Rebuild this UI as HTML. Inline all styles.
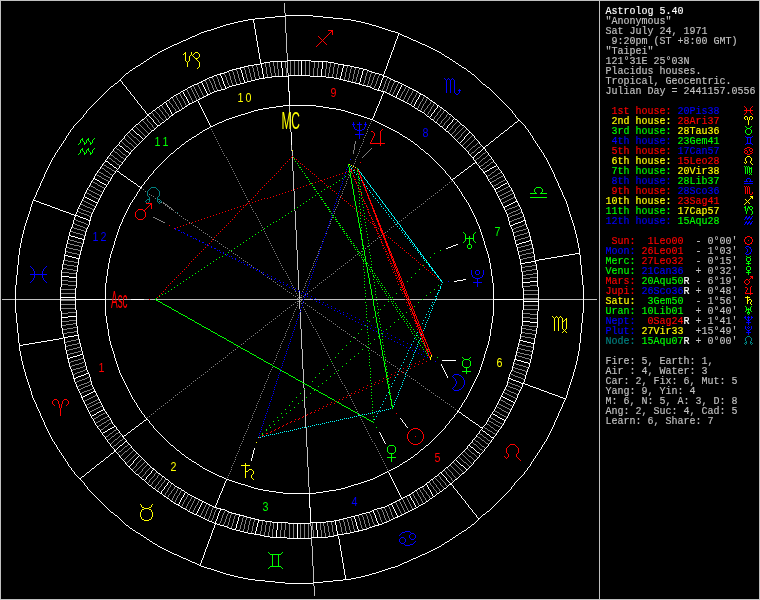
<!DOCTYPE html>
<html lang="en"><head><meta charset="utf-8"><title>Astrolog 5.40 chart</title>
<style>
html,body{margin:0;padding:0;background:#000;}
svg{display:block;will-change:transform;}
.s{font-family:"Liberation Mono",monospace;font-size:10px;white-space:pre;stroke-width:0.15px;}
.h{font-family:"Liberation Sans",sans-serif;font-size:12.6px;text-anchor:middle;letter-spacing:2.4px;font-kerning:none;}
.g{font-family:"Liberation Sans",sans-serif;}
</style></head><body>
<svg width="760" height="600" viewBox="0 0 760 600">
<rect width="760" height="600" fill="#000"/>
<g shape-rendering="crispEdges">
<path fill="#ffffff" d="M285 15h28v1h-28zM275 16h10v1h-10zM313 16h10v1h-10zM265 17h10v1h-10zM323 17h10v1h-10zM255 18h10v1h-10zM333 18h10v1h-10zM248 19h7v1h-7zM343 19h8v1h-8zM243 20h5v1h-5zM351 20h5v1h-5zM238 21h5v1h-5zM356 21h5v1h-5zM234 22h4v1h-4zM361 22h4v1h-4zM230 23h4v1h-4zM365 23h4v1h-4zM226 24h4v1h-4zM369 24h3v1h-3zM223 25h3v1h-3zM372 25h4v1h-4zM220 26h3v1h-3zM376 26h3v1h-3zM217 27h3v1h-3zM379 27h3v1h-3zM214 28h3v1h-3zM382 28h3v1h-3zM211 29h3v1h-3zM385 29h3v1h-3zM207 30h4v1h-4zM388 30h3v1h-3zM204 31h3v1h-3zM391 31h4v1h-4zM201 32h3v1h-3zM395 32h3v1h-3zM199 33h2v1h-2zM398 33h2v1h-2zM197 34h2v1h-2zM400 34h2v1h-2zM195 35h2v1h-2zM402 35h2v1h-2zM192 36h3v1h-3zM404 36h3v1h-3zM190 37h2v1h-2zM407 37h2v1h-2zM188 38h2v1h-2zM409 38h2v1h-2zM186 39h2v1h-2zM411 39h2v1h-2zM183 40h3v1h-3zM413 40h3v1h-3zM181 41h2v1h-2zM416 41h2v1h-2zM179 42h2v1h-2zM418 42h2v1h-2zM177 43h2v1h-2zM420 43h2v1h-2zM174 44h3v1h-3zM422 44h3v1h-3zM172 45h2v1h-2zM425 45h2v1h-2zM170 46h2v1h-2zM427 46h2v1h-2zM168 47h2v1h-2zM429 47h2v1h-2zM166 48h2v1h-2zM431 48h2v1h-2zM164 49h2v1h-2zM433 49h2v1h-2zM162 50h2v1h-2zM435 50h2v1h-2zM160 51h2v1h-2zM437 51h2v1h-2zM158 52h2v1h-2zM439 52h2v1h-2zM155 54h2v1h-2zM442 54h2v1h-2zM153 55h2v1h-2zM445 56h2v1h-2zM150 57h2v1h-2zM447 57h2v1h-2zM147 59h2v1h-2zM450 59h2v1h-2zM287 60h24v1h-24zM144 61h2v1h-2zM270 61h17v1h-17zM311 61h17v1h-17zM453 61h2v1h-2zM264 62h6v1h-6zM328 62h6v1h-6zM141 63h2v1h-2zM260 63h4v1h-4zM334 63h4v1h-4zM456 63h2v1h-2zM254 64h6v1h-6zM338 64h6v1h-6zM138 65h2v1h-2zM248 65h6v1h-6zM343 65h7v1h-7zM459 65h2v1h-2zM136 66h2v1h-2zM244 66h4v1h-4zM350 66h4v1h-4zM240 67h4v1h-4zM354 67h5v1h-5zM462 67h2v1h-2zM133 68h2v1h-2zM236 68h5v1h-5zM359 68h4v1h-4zM464 68h2v1h-2zM232 69h4v1h-4zM363 69h4v1h-4zM130 70h2v1h-2zM229 70h3v1h-3zM367 70h2v1h-2zM227 71h2v1h-2zM369 71h3v1h-3zM468 71h2v1h-2zM224 72h3v1h-3zM372 72h3v1h-3zM126 73h2v1h-2zM220 73h4v1h-4zM375 73h4v1h-4zM217 74h4v1h-4zM379 74h3v1h-3zM472 74h2v1h-2zM214 75h3v1h-3zM288 75h22v1h-22zM382 75h2v1h-2zM212 76h2v1h-2zM272 76h17v1h-17zM310 76h16v1h-16zM383 76h4v1h-4zM209 77h3v1h-3zM265 77h7v1h-7zM326 77h8v1h-8zM387 77h2v1h-2zM207 78h2v1h-2zM259 78h6v1h-6zM334 78h5v1h-5zM389 78h2v1h-2zM205 79h2v1h-2zM255 79h4v1h-4zM339 79h4v1h-4zM391 79h2v1h-2zM119 80h2v1h-2zM203 80h2v1h-2zM251 80h4v1h-4zM343 80h4v1h-4zM393 80h2v1h-2zM201 81h2v1h-2zM247 81h4v1h-4zM347 81h4v1h-4zM395 81h3v1h-3zM199 82h3v1h-3zM244 82h3v1h-3zM351 82h4v1h-4zM398 82h2v1h-2zM115 83h2v1h-2zM197 83h2v1h-2zM240 83h4v1h-4zM355 83h5v1h-5zM400 83h2v1h-2zM194 84h3v1h-3zM236 84h4v1h-4zM359 84h3v1h-3zM402 84h2v1h-2zM483 84h2v1h-2zM192 85h2v1h-2zM232 85h4v1h-4zM362 85h4v1h-4zM404 85h2v1h-2zM111 86h2v1h-2zM190 86h2v1h-2zM229 86h3v1h-3zM366 86h4v1h-4zM406 86h2v1h-2zM188 87h2v1h-2zM227 87h2v1h-2zM370 87h2v1h-2zM408 87h2v1h-2zM487 87h2v1h-2zM225 88h2v1h-2zM372 88h2v1h-2zM410 88h2v1h-2zM185 89h2v1h-2zM221 89h4v1h-4zM374 89h3v1h-3zM412 89h2v1h-2zM183 90h2v1h-2zM217 90h4v1h-4zM377 90h4v1h-4zM414 90h2v1h-2zM181 91h2v1h-2zM214 91h3v1h-3zM381 91h4v1h-4zM416 91h2v1h-2zM212 92h2v1h-2zM385 92h2v1h-2zM178 93h2v1h-2zM210 93h2v1h-2zM387 93h2v1h-2zM419 93h2v1h-2zM176 94h2v1h-2zM207 94h3v1h-3zM389 94h2v1h-2zM420 94h3v1h-3zM174 95h2v1h-2zM206 95h2v1h-2zM391 95h2v1h-2zM423 95h2v1h-2zM204 96h2v1h-2zM393 96h2v1h-2zM171 97h2v1h-2zM202 97h2v1h-2zM395 97h2v1h-2zM426 97h2v1h-2zM200 98h2v1h-2zM397 98h2v1h-2zM198 99h2v1h-2zM399 99h2v1h-2zM167 100h2v1h-2zM196 100h2v1h-2zM401 100h2v1h-2zM430 100h2v1h-2zM194 101h2v1h-2zM403 101h2v1h-2zM164 102h2v1h-2zM192 102h2v1h-2zM405 102h2v1h-2zM433 102h2v1h-2zM189 103h3v1h-3zM407 103h2v1h-2zM188 104h2v1h-2zM409 104h2v1h-2zM160 105h2v1h-2zM283 105h33v1h-33zM437 105h2v1h-2zM185 106h2v1h-2zM276 106h7v1h-7zM316 106h7v1h-7zM412 106h2v1h-2zM157 107h2v1h-2zM269 107h7v1h-7zM323 107h6v1h-6zM440 107h2v1h-2zM182 108h2v1h-2zM263 108h6v1h-6zM329 108h7v1h-7zM415 108h2v1h-2zM258 109h5v1h-5zM336 109h5v1h-5zM153 110h2v1h-2zM179 110h2v1h-2zM254 110h4v1h-4zM341 110h4v1h-4zM418 110h2v1h-2zM444 110h2v1h-2zM177 111h2v1h-2zM251 111h3v1h-3zM345 111h3v1h-3zM420 111h2v1h-2zM175 112h2v1h-2zM248 112h3v1h-3zM348 112h3v1h-3zM422 112h2v1h-2zM149 113h2v1h-2zM245 113h3v1h-3zM351 113h3v1h-3zM147 114h2v1h-2zM172 114h2v1h-2zM241 114h4v1h-4zM354 114h4v1h-4zM449 114h2v1h-2zM147 115h2v1h-2zM171 115h2v1h-2zM238 115h3v1h-3zM358 115h3v1h-3zM235 116h3v1h-3zM361 116h3v1h-3zM427 116h2v1h-2zM232 117h3v1h-3zM364 117h3v1h-3zM229 118h3v1h-3zM367 118h3v1h-3zM142 119h2v1h-2zM166 119h2v1h-2zM226 119h3v1h-3zM370 119h3v1h-3zM431 119h2v1h-2zM455 119h2v1h-2zM224 120h2v1h-2zM373 120h2v1h-2zM518 120h2v1h-2zM222 121h2v1h-2zM375 121h2v1h-2zM162 122h2v1h-2zM219 122h3v1h-3zM377 122h2v1h-2zM435 122h2v1h-2zM515 122h2v1h-2zM217 123h2v1h-2zM379 123h2v1h-2zM136 124h2v1h-2zM215 124h2v1h-2zM381 124h2v1h-2zM157 125h3v1h-3zM213 125h2v1h-2zM383 125h2v1h-2zM462 125h2v1h-2zM210 126h3v1h-3zM385 126h2v1h-2zM440 126h2v1h-2zM510 126h2v1h-2zM387 127h2v1h-2zM207 128h2v1h-2zM389 128h2v1h-2zM131 129h2v1h-2zM205 129h2v1h-2zM391 129h2v1h-2zM444 129h2v1h-2zM152 130h2v1h-2zM203 130h2v1h-2zM393 130h2v1h-2zM505 130h2v1h-2zM395 131h2v1h-2zM446 131h2v1h-2zM200 132h2v1h-2zM397 132h2v1h-2zM469 132h2v1h-2zM501 133h2v1h-2zM137 134h2v1h-2zM197 134h2v1h-2zM400 134h2v1h-2zM194 136h2v1h-2zM403 136h2v1h-2zM192 137h2v1h-2zM405 137h2v1h-2zM496 137h2v1h-2zM189 139h2v1h-2zM408 139h2v1h-2zM186 141h2v1h-2zM411 141h2v1h-2zM491 141h2v1h-2zM182 144h2v1h-2zM415 144h2v1h-2zM486 145h2v1h-2zM120 146h2v1h-2zM483 147h2v1h-2zM177 148h2v1h-2zM483 148h2v1h-2zM421 149h2v1h-2zM126 151h2v1h-2zM478 152h2v1h-2zM129 153h2v1h-2zM171 153h2v1h-2zM426 153h2v1h-2zM472 157h2v1h-2zM105 161h3v1h-3zM475 162h2v1h-2zM473 163h2v1h-2zM110 164h2v1h-2zM469 166h2v1h-2zM494 166h2v1h-2zM114 167h2v1h-2zM492 167h2v1h-2zM490 168h2v1h-2zM465 169h2v1h-2zM487 170h2v1h-2zM117 171h2v1h-2zM485 171h2v1h-2zM461 172h2v1h-2zM483 172h2v1h-2zM121 174h2v1h-2zM457 175h2v1h-2zM124 176h2v1h-2zM93 178h2v1h-2zM453 178h2v1h-2zM95 179h2v1h-2zM128 179h2v1h-2zM451 179h2v1h-2zM97 180h2v1h-2zM131 181h2v1h-2zM100 182h2v1h-2zM102 183h2v1h-2zM134 183h2v1h-2zM505 183h2v1h-2zM104 184h2v1h-2zM503 184h2v1h-2zM501 185h2v1h-2zM138 186h2v1h-2zM140 187h2v1h-2zM498 187h2v1h-2zM496 188h2v1h-2zM494 189h2v1h-2zM85 197h2v1h-2zM87 198h2v1h-2zM89 199h2v1h-2zM33 200h3v1h-3zM91 200h2v1h-2zM36 201h3v1h-3zM93 201h2v1h-2zM515 201h3v1h-3zM39 202h2v1h-2zM95 202h3v1h-3zM513 202h2v1h-2zM41 203h3v1h-3zM511 203h2v1h-2zM44 204h3v1h-3zM509 204h2v1h-2zM47 205h3v1h-3zM507 205h2v1h-2zM50 206h2v1h-2zM505 206h2v1h-2zM52 207h3v1h-3zM503 207h2v1h-2zM55 208h3v1h-3zM58 209h2v1h-2zM60 210h3v1h-3zM63 211h3v1h-3zM66 212h3v1h-3zM69 213h2v1h-2zM71 214h3v1h-3zM74 215h4v1h-4zM78 216h2v1h-2zM80 217h3v1h-3zM83 218h3v1h-3zM86 219h2v1h-2zM88 220h3v1h-3zM523 220h3v1h-3zM521 221h2v1h-2zM518 222h3v1h-3zM515 223h3v1h-3zM513 224h2v1h-2zM510 225h3v1h-3zM69 235h2v1h-2zM71 236h4v1h-4zM75 237h3v1h-3zM78 238h4v1h-4zM82 239h3v1h-3zM529 240h3v1h-3zM526 241h3v1h-3zM522 242h4v1h-4zM519 243h3v1h-3zM456 244h2v1h-2zM516 244h3v1h-3zM453 245h3v1h-3zM451 246h2v1h-2zM448 247h3v1h-3zM446 248h2v1h-2zM575 253h5v1h-5zM569 254h6v1h-6zM64 255h4v1h-4zM563 255h6v1h-6zM68 256h4v1h-4zM557 256h6v1h-6zM72 257h4v1h-4zM551 257h6v1h-6zM76 258h4v1h-4zM545 258h6v1h-6zM539 259h6v1h-6zM535 260h4v1h-4zM531 261h5v1h-5zM525 262h6v1h-6zM520 263h5v1h-5zM61 276h8v1h-8zM69 277h8v1h-8zM463 279h3v1h-3zM457 280h6v1h-6zM454 281h3v1h-3zM530 281h8v1h-8zM522 282h8v1h-8zM60 297h16v1h-16zM75 299h31v1h-31zM131 299h13v1h-13zM493 299h31v1h-31zM523 301h16v1h-16zM68 316h9v1h-9zM61 317h7v1h-7zM522 321h8v1h-8zM530 322h8v1h-8zM74 335h5v1h-5zM68 336h6v1h-6zM63 337h5v1h-5zM59 338h4v1h-4zM53 339h6v1h-6zM47 340h6v1h-6zM519 340h4v1h-4zM41 341h6v1h-6zM523 341h4v1h-4zM35 342h6v1h-6zM527 342h4v1h-4zM29 343h6v1h-6zM531 343h4v1h-4zM23 344h6v1h-6zM19 345h4v1h-4zM80 354h3v1h-3zM77 355h3v1h-3zM73 356h4v1h-4zM70 357h3v1h-3zM67 358h3v1h-3zM514 359h3v1h-3zM442 360h14v1h-14zM517 360h4v1h-4zM521 361h3v1h-3zM524 362h4v1h-4zM528 363h2v1h-2zM86 373h3v1h-3zM84 374h2v1h-2zM81 375h3v1h-3zM78 376h3v1h-3zM76 377h2v1h-2zM73 378h3v1h-3zM508 378h3v1h-3zM511 379h2v1h-2zM513 380h3v1h-3zM516 381h3v1h-3zM519 382h2v1h-2zM521 383h4v1h-4zM525 384h3v1h-3zM528 385h2v1h-2zM530 386h3v1h-3zM533 387h3v1h-3zM536 388h3v1h-3zM539 389h2v1h-2zM541 390h3v1h-3zM93 391h3v1h-3zM544 391h3v1h-3zM91 392h2v1h-2zM547 392h2v1h-2zM89 393h2v1h-2zM549 393h3v1h-3zM87 394h2v1h-2zM552 394h3v1h-3zM85 395h2v1h-2zM555 395h3v1h-3zM83 396h2v1h-2zM501 396h2v1h-2zM558 396h2v1h-2zM81 397h2v1h-2zM503 397h2v1h-2zM560 397h3v1h-3zM505 398h2v1h-2zM563 398h3v1h-3zM507 399h2v1h-2zM509 400h2v1h-2zM511 401h2v1h-2zM513 402h2v1h-2zM103 409h2v1h-2zM101 410h2v1h-2zM99 411h2v1h-2zM457 411h2v1h-2zM97 412h2v1h-2zM459 412h2v1h-2zM94 414h2v1h-2zM493 414h2v1h-2zM92 415h2v1h-2zM463 415h2v1h-2zM495 415h2v1h-2zM466 417h2v1h-2zM498 417h2v1h-2zM500 418h2v1h-2zM146 419h2v1h-2zM502 419h2v1h-2zM144 420h2v1h-2zM470 420h2v1h-2zM504 420h2v1h-2zM473 422h2v1h-2zM140 423h2v1h-2zM476 424h2v1h-2zM114 426h2v1h-2zM136 426h2v1h-2zM112 427h2v1h-2zM480 427h3v1h-3zM110 428h2v1h-2zM108 429h2v1h-2zM132 429h2v1h-2zM105 431h2v1h-2zM483 431h2v1h-2zM103 432h2v1h-2zM128 432h2v1h-2zM487 434h2v1h-2zM124 435h2v1h-2zM122 436h2v1h-2zM491 437h3v1h-3zM125 441h2v1h-2zM120 445h2v1h-2zM171 445h2v1h-2zM426 445h2v1h-2zM468 445h2v1h-2zM471 447h2v1h-2zM421 449h2v1h-2zM114 450h2v1h-2zM177 450h2v1h-2zM114 451h2v1h-2zM477 452h2v1h-2zM111 453h2v1h-2zM182 454h2v1h-2zM415 454h2v1h-2zM106 457h2v1h-2zM186 457h2v1h-2zM411 457h2v1h-2zM189 459h2v1h-2zM408 459h2v1h-2zM101 461h2v1h-2zM192 461h2v1h-2zM405 461h2v1h-2zM194 462h2v1h-2zM403 462h2v1h-2zM97 464h2v1h-2zM197 464h2v1h-2zM400 464h2v1h-2zM461 465h2v1h-2zM128 466h2v1h-2zM200 466h2v1h-2zM397 466h2v1h-2zM395 467h2v1h-2zM446 467h2v1h-2zM92 468h2v1h-2zM152 468h2v1h-2zM203 468h2v1h-2zM393 468h2v1h-2zM153 469h2v1h-2zM205 469h2v1h-2zM391 469h2v1h-2zM466 469h2v1h-2zM207 470h2v1h-2zM389 470h2v1h-2zM209 471h2v1h-2zM87 472h2v1h-2zM211 472h2v1h-2zM385 472h2v1h-2zM440 472h2v1h-2zM158 473h2v1h-2zM213 473h2v1h-2zM383 473h2v1h-2zM462 473h2v1h-2zM136 474h2v1h-2zM215 474h2v1h-2zM381 474h2v1h-2zM217 475h2v1h-2zM379 475h2v1h-2zM82 476h2v1h-2zM162 476h2v1h-2zM219 476h3v1h-3zM377 476h2v1h-2zM435 476h2v1h-2zM222 477h2v1h-2zM375 477h2v1h-2zM79 478h2v1h-2zM224 478h2v1h-2zM373 478h2v1h-2zM142 479h2v1h-2zM166 479h2v1h-2zM226 479h3v1h-3zM370 479h3v1h-3zM431 479h2v1h-2zM455 479h2v1h-2zM229 480h3v1h-3zM367 480h3v1h-3zM232 481h3v1h-3zM364 481h3v1h-3zM235 482h3v1h-3zM361 482h3v1h-3zM427 482h2v1h-2zM171 483h2v1h-2zM238 483h3v1h-3zM358 483h3v1h-3zM450 483h2v1h-2zM241 484h4v1h-4zM354 484h4v1h-4zM425 484h2v1h-2zM449 484h3v1h-3zM149 485h2v1h-2zM245 485h3v1h-3zM351 485h3v1h-3zM175 486h2v1h-2zM248 486h3v1h-3zM348 486h3v1h-3zM422 486h2v1h-2zM177 487h2v1h-2zM251 487h3v1h-3zM345 487h3v1h-3zM420 487h2v1h-2zM153 488h2v1h-2zM179 488h2v1h-2zM254 488h4v1h-4zM341 488h4v1h-4zM418 488h2v1h-2zM444 488h2v1h-2zM258 489h5v1h-5zM336 489h5v1h-5zM182 490h2v1h-2zM263 490h6v1h-6zM329 490h7v1h-7zM415 490h2v1h-2zM157 491h2v1h-2zM269 491h7v1h-7zM323 491h6v1h-6zM440 491h2v1h-2zM185 492h2v1h-2zM276 492h7v1h-7zM316 492h7v1h-7zM412 492h2v1h-2zM160 493h2v1h-2zM283 493h33v1h-33zM437 493h2v1h-2zM188 494h2v1h-2zM409 494h2v1h-2zM190 495h2v1h-2zM407 495h3v1h-3zM164 496h2v1h-2zM192 496h2v1h-2zM405 496h2v1h-2zM433 496h2v1h-2zM194 497h2v1h-2zM403 497h2v1h-2zM167 498h2v1h-2zM196 498h2v1h-2zM401 498h2v1h-2zM430 498h2v1h-2zM198 499h2v1h-2zM399 499h2v1h-2zM200 500h2v1h-2zM397 500h2v1h-2zM171 501h2v1h-2zM202 501h2v1h-2zM395 501h2v1h-2zM426 501h2v1h-2zM204 502h2v1h-2zM393 502h2v1h-2zM174 503h2v1h-2zM206 503h2v1h-2zM391 503h2v1h-2zM423 503h2v1h-2zM176 504h3v1h-3zM208 504h2v1h-2zM389 504h3v1h-3zM421 504h2v1h-2zM178 505h2v1h-2zM210 505h2v1h-2zM387 505h2v1h-2zM419 505h2v1h-2zM212 506h2v1h-2zM385 506h2v1h-2zM181 507h2v1h-2zM214 507h3v1h-3zM381 507h4v1h-4zM416 507h2v1h-2zM183 508h2v1h-2zM217 508h4v1h-4zM377 508h4v1h-4zM414 508h2v1h-2zM185 509h2v1h-2zM220 509h5v1h-5zM374 509h3v1h-3zM412 509h2v1h-2zM225 510h2v1h-2zM372 510h2v1h-2zM410 510h2v1h-2zM188 511h2v1h-2zM227 511h2v1h-2zM370 511h2v1h-2zM408 511h2v1h-2zM487 511h2v1h-2zM111 512h2v1h-2zM190 512h2v1h-2zM229 512h3v1h-3zM366 512h4v1h-4zM406 512h2v1h-2zM192 513h2v1h-2zM232 513h4v1h-4zM362 513h4v1h-4zM404 513h2v1h-2zM194 514h3v1h-3zM236 514h4v1h-4zM359 514h3v1h-3zM402 514h2v1h-2zM483 514h2v1h-2zM115 515h2v1h-2zM197 515h2v1h-2zM239 515h5v1h-5zM355 515h4v1h-4zM400 515h2v1h-2zM199 516h2v1h-2zM244 516h3v1h-3zM351 516h4v1h-4zM397 516h3v1h-3zM201 517h2v1h-2zM247 517h4v1h-4zM347 517h4v1h-4zM395 517h3v1h-3zM203 518h2v1h-2zM251 518h4v1h-4zM343 518h4v1h-4zM393 518h2v1h-2zM478 518h2v1h-2zM205 519h2v1h-2zM255 519h4v1h-4zM339 519h4v1h-4zM391 519h2v1h-2zM207 520h2v1h-2zM258 520h7v1h-7zM334 520h5v1h-5zM389 520h2v1h-2zM209 521h3v1h-3zM265 521h7v1h-7zM326 521h8v1h-8zM387 521h2v1h-2zM212 522h2v1h-2zM272 522h16v1h-16zM310 522h16v1h-16zM384 522h3v1h-3zM214 523h3v1h-3zM288 523h22v1h-22zM382 523h2v1h-2zM217 524h3v1h-3zM378 524h4v1h-4zM472 524h2v1h-2zM126 525h2v1h-2zM220 525h4v1h-4zM375 525h4v1h-4zM224 526h3v1h-3zM372 526h3v1h-3zM227 527h2v1h-2zM369 527h3v1h-3zM468 527h2v1h-2zM130 528h2v1h-2zM229 528h3v1h-3zM367 528h2v1h-2zM232 529h4v1h-4zM363 529h4v1h-4zM133 530h2v1h-2zM236 530h4v1h-4zM358 530h5v1h-5zM464 530h2v1h-2zM240 531h4v1h-4zM354 531h5v1h-5zM462 531h2v1h-2zM136 532h2v1h-2zM244 532h4v1h-4zM350 532h4v1h-4zM138 533h2v1h-2zM248 533h6v1h-6zM344 533h6v1h-6zM459 533h2v1h-2zM254 534h6v1h-6zM337 534h7v1h-7zM141 535h2v1h-2zM260 535h4v1h-4zM334 535h4v1h-4zM456 535h2v1h-2zM264 536h6v1h-6zM328 536h6v1h-6zM144 537h2v1h-2zM270 537h17v1h-17zM311 537h17v1h-17zM453 537h2v1h-2zM287 538h24v1h-24zM147 539h2v1h-2zM450 539h2v1h-2zM150 541h2v1h-2zM447 541h2v1h-2zM445 542h2v1h-2zM153 543h2v1h-2zM155 544h2v1h-2zM442 544h2v1h-2zM158 546h2v1h-2zM439 546h2v1h-2zM160 547h2v1h-2zM437 547h2v1h-2zM162 548h2v1h-2zM435 548h2v1h-2zM164 549h2v1h-2zM433 549h2v1h-2zM166 550h2v1h-2zM431 550h2v1h-2zM168 551h2v1h-2zM429 551h2v1h-2zM170 552h2v1h-2zM427 552h2v1h-2zM172 553h2v1h-2zM425 553h2v1h-2zM174 554h3v1h-3zM422 554h3v1h-3zM177 555h2v1h-2zM420 555h2v1h-2zM179 556h2v1h-2zM418 556h2v1h-2zM181 557h2v1h-2zM416 557h2v1h-2zM183 558h3v1h-3zM413 558h3v1h-3zM186 559h2v1h-2zM411 559h2v1h-2zM188 560h2v1h-2zM409 560h2v1h-2zM190 561h2v1h-2zM407 561h2v1h-2zM192 562h3v1h-3zM404 562h3v1h-3zM195 563h2v1h-2zM402 563h2v1h-2zM197 564h2v1h-2zM400 564h2v1h-2zM199 565h2v1h-2zM398 565h2v1h-2zM201 566h3v1h-3zM395 566h3v1h-3zM204 567h3v1h-3zM391 567h4v1h-4zM207 568h4v1h-4zM388 568h3v1h-3zM211 569h3v1h-3zM385 569h3v1h-3zM214 570h3v1h-3zM382 570h3v1h-3zM217 571h3v1h-3zM379 571h3v1h-3zM220 572h3v1h-3zM376 572h3v1h-3zM223 573h3v1h-3zM372 573h4v1h-4zM226 574h4v1h-4zM369 574h3v1h-3zM230 575h4v1h-4zM365 575h4v1h-4zM234 576h4v1h-4zM361 576h4v1h-4zM238 577h5v1h-5zM356 577h5v1h-5zM243 578h5v1h-5zM351 578h5v1h-5zM248 579h7v1h-7zM343 579h8v1h-8zM255 580h10v1h-10zM333 580h10v1h-10zM265 581h10v1h-10zM323 581h10v1h-10zM275 582h10v1h-10zM313 582h10v1h-10zM285 583h28v1h-28zM15 285h1v28h-1zM16 275h1v10h-1zM16 313h1v10h-1zM17 265h1v10h-1zM17 323h1v10h-1zM18 255h1v10h-1zM18 333h1v10h-1zM19 248h1v7h-1zM19 343h1v2h-1zM19 346h1v5h-1zM20 243h1v5h-1zM20 351h1v5h-1zM21 238h1v5h-1zM21 356h1v5h-1zM22 234h1v4h-1zM22 361h1v4h-1zM23 230h1v4h-1zM23 365h1v4h-1zM24 226h1v4h-1zM24 369h1v3h-1zM25 223h1v3h-1zM25 372h1v4h-1zM26 220h1v3h-1zM26 376h1v3h-1zM27 217h1v3h-1zM27 379h1v3h-1zM28 214h1v3h-1zM28 382h1v3h-1zM29 211h1v3h-1zM29 385h1v3h-1zM30 207h1v4h-1zM30 388h1v3h-1zM31 204h1v3h-1zM31 391h1v4h-1zM32 201h1v3h-1zM32 395h1v3h-1zM33 199h1v1h-1zM33 398h1v2h-1zM34 197h1v2h-1zM34 400h1v2h-1zM35 195h1v2h-1zM35 402h1v2h-1zM36 192h1v3h-1zM36 404h1v3h-1zM37 190h1v2h-1zM37 407h1v2h-1zM38 188h1v2h-1zM38 409h1v2h-1zM39 186h1v2h-1zM39 411h1v2h-1zM40 183h1v3h-1zM40 413h1v3h-1zM41 181h1v2h-1zM41 416h1v2h-1zM42 179h1v2h-1zM42 418h1v2h-1zM43 177h1v2h-1zM43 420h1v2h-1zM44 174h1v3h-1zM44 422h1v3h-1zM45 172h1v2h-1zM45 425h1v2h-1zM46 170h1v2h-1zM46 427h1v2h-1zM47 168h1v2h-1zM47 429h1v2h-1zM48 166h1v2h-1zM48 431h1v2h-1zM49 164h1v2h-1zM49 433h1v2h-1zM50 162h1v2h-1zM50 435h1v2h-1zM51 160h1v2h-1zM51 437h1v2h-1zM52 158h1v2h-1zM52 439h1v2h-1zM53 157h1v1h-1zM53 441h1v1h-1zM54 155h1v2h-1zM54 442h1v2h-1zM55 153h1v2h-1zM55 444h1v1h-1zM56 152h1v1h-1zM56 445h1v2h-1zM57 150h1v2h-1zM57 447h1v2h-1zM58 149h1v1h-1zM58 449h1v1h-1zM59 147h1v2h-1zM59 450h1v2h-1zM60 146h1v1h-1zM60 287h1v10h-1zM60 298h1v13h-1zM60 452h1v1h-1zM61 144h1v2h-1zM61 270h1v6h-1zM61 277h1v10h-1zM61 311h1v6h-1zM61 318h1v10h-1zM61 453h1v2h-1zM62 143h1v1h-1zM62 264h1v6h-1zM62 328h1v6h-1zM62 455h1v1h-1zM63 141h1v2h-1zM63 260h1v4h-1zM63 334h1v3h-1zM63 456h1v2h-1zM64 140h1v1h-1zM64 254h1v1h-1zM64 256h1v4h-1zM64 338h1v6h-1zM64 458h1v1h-1zM65 138h1v2h-1zM65 248h1v6h-1zM65 344h1v6h-1zM65 459h1v2h-1zM66 136h1v2h-1zM66 244h1v4h-1zM66 350h1v4h-1zM66 461h1v1h-1zM67 135h1v1h-1zM67 240h1v4h-1zM67 354h1v4h-1zM67 462h1v2h-1zM68 133h1v2h-1zM68 236h1v4h-1zM68 359h1v4h-1zM68 464h1v2h-1zM69 132h1v1h-1zM69 232h1v3h-1zM69 363h1v4h-1zM69 466h1v1h-1zM70 130h1v2h-1zM70 229h1v3h-1zM70 367h1v2h-1zM70 467h1v1h-1zM71 129h1v1h-1zM71 227h1v2h-1zM71 369h1v3h-1zM71 468h1v2h-1zM72 128h1v1h-1zM72 224h1v3h-1zM72 372h1v3h-1zM72 470h1v1h-1zM73 126h1v2h-1zM73 220h1v4h-1zM73 375h1v3h-1zM73 471h1v1h-1zM74 125h1v1h-1zM74 217h1v3h-1zM74 379h1v3h-1zM74 472h1v2h-1zM75 124h1v1h-1zM75 214h1v1h-1zM75 216h1v1h-1zM75 288h1v9h-1zM75 298h1v1h-1zM75 300h1v10h-1zM75 382h1v2h-1zM75 474h1v1h-1zM76 123h1v1h-1zM76 212h1v2h-1zM76 272h1v5h-1zM76 278h1v10h-1zM76 310h1v6h-1zM76 317h1v9h-1zM76 384h1v3h-1zM76 475h1v1h-1zM77 122h1v1h-1zM77 209h1v3h-1zM77 265h1v7h-1zM77 326h1v8h-1zM77 387h1v2h-1zM77 476h1v1h-1zM78 121h1v1h-1zM78 207h1v2h-1zM78 259h1v6h-1zM78 334h1v1h-1zM78 336h1v3h-1zM78 389h1v2h-1zM78 477h1v1h-1zM79 120h1v1h-1zM79 205h1v2h-1zM79 255h1v3h-1zM79 339h1v4h-1zM79 391h1v2h-1zM80 119h1v1h-1zM80 203h1v2h-1zM80 251h1v4h-1zM80 343h1v4h-1zM80 393h1v2h-1zM80 479h1v1h-1zM81 118h1v1h-1zM81 201h1v2h-1zM81 247h1v4h-1zM81 347h1v4h-1zM81 395h1v2h-1zM81 477h1v1h-1zM81 480h1v1h-1zM82 117h1v1h-1zM82 199h1v2h-1zM82 244h1v3h-1zM82 351h1v3h-1zM82 398h1v2h-1zM82 481h1v1h-1zM83 115h1v2h-1zM83 197h1v2h-1zM83 240h1v4h-1zM83 355h1v4h-1zM83 400h1v2h-1zM83 482h1v1h-1zM84 114h1v1h-1zM84 194h1v3h-1zM84 236h1v3h-1zM84 359h1v3h-1zM84 402h1v2h-1zM84 475h1v1h-1zM84 483h1v2h-1zM85 113h1v1h-1zM85 192h1v2h-1zM85 232h1v4h-1zM85 362h1v4h-1zM85 404h1v2h-1zM85 474h1v1h-1zM85 485h1v1h-1zM86 111h1v2h-1zM86 190h1v2h-1zM86 229h1v3h-1zM86 366h1v4h-1zM86 406h1v2h-1zM86 473h1v1h-1zM86 486h1v1h-1zM87 110h1v1h-1zM87 188h1v2h-1zM87 227h1v2h-1zM87 370h1v2h-1zM87 408h1v2h-1zM87 487h1v2h-1zM88 109h1v1h-1zM88 187h1v1h-1zM88 225h1v2h-1zM88 372h1v1h-1zM88 410h1v2h-1zM88 489h1v1h-1zM89 108h1v1h-1zM89 185h1v2h-1zM89 221h1v4h-1zM89 374h1v3h-1zM89 412h1v2h-1zM89 471h1v1h-1zM89 490h1v1h-1zM90 107h1v1h-1zM90 183h1v2h-1zM90 217h1v3h-1zM90 377h1v4h-1zM90 414h1v2h-1zM90 470h1v1h-1zM90 491h1v1h-1zM91 106h1v1h-1zM91 181h1v2h-1zM91 214h1v3h-1zM91 381h1v4h-1zM91 416h1v2h-1zM91 469h1v1h-1zM91 492h1v1h-1zM92 105h1v1h-1zM92 180h1v1h-1zM92 212h1v2h-1zM92 385h1v2h-1zM92 418h1v1h-1zM92 493h1v1h-1zM93 104h1v1h-1zM93 179h1v1h-1zM93 210h1v2h-1zM93 387h1v2h-1zM93 419h1v2h-1zM93 494h1v1h-1zM94 103h1v1h-1zM94 176h1v2h-1zM94 208h1v2h-1zM94 389h1v2h-1zM94 421h1v2h-1zM94 467h1v1h-1zM94 495h1v1h-1zM95 102h1v1h-1zM95 174h1v2h-1zM95 206h1v2h-1zM95 392h1v1h-1zM95 423h1v2h-1zM95 466h1v1h-1zM95 496h1v1h-1zM96 101h1v1h-1zM96 173h1v1h-1zM96 204h1v2h-1zM96 393h1v2h-1zM96 413h1v1h-1zM96 425h1v1h-1zM96 465h1v1h-1zM96 497h1v1h-1zM97 100h1v1h-1zM97 171h1v2h-1zM97 203h1v1h-1zM97 395h1v2h-1zM97 426h1v2h-1zM97 498h1v1h-1zM98 99h1v1h-1zM98 170h1v1h-1zM98 200h1v2h-1zM98 397h1v2h-1zM98 428h1v1h-1zM98 499h1v1h-1zM99 98h1v1h-1zM99 169h1v1h-1zM99 181h1v1h-1zM99 198h1v2h-1zM99 399h1v2h-1zM99 429h1v1h-1zM99 463h1v1h-1zM99 500h1v1h-1zM100 97h1v1h-1zM100 167h1v2h-1zM100 196h1v2h-1zM100 401h1v2h-1zM100 430h1v2h-1zM100 462h1v1h-1zM100 501h1v1h-1zM101 96h1v1h-1zM101 166h1v1h-1zM101 194h1v2h-1zM101 403h1v2h-1zM101 432h1v1h-1zM101 502h1v1h-1zM102 95h1v1h-1zM102 164h1v2h-1zM102 192h1v2h-1zM102 405h1v2h-1zM102 433h1v2h-1zM102 503h1v1h-1zM103 94h1v1h-1zM103 163h1v1h-1zM103 190h1v2h-1zM103 407h1v2h-1zM103 435h1v1h-1zM103 460h1v1h-1zM103 504h1v1h-1zM104 93h1v1h-1zM104 162h1v1h-1zM104 188h1v2h-1zM104 410h1v1h-1zM104 436h1v1h-1zM104 459h1v1h-1zM104 505h1v1h-1zM105 92h1v1h-1zM105 160h1v1h-1zM105 187h1v1h-1zM105 283h1v16h-1zM105 300h1v16h-1zM105 411h1v1h-1zM105 437h1v2h-1zM105 458h1v1h-1zM105 506h1v1h-1zM106 91h1v1h-1zM106 159h1v1h-1zM106 185h1v2h-1zM106 276h1v7h-1zM106 316h1v7h-1zM106 412h1v2h-1zM106 439h1v1h-1zM106 507h1v1h-1zM107 90h1v1h-1zM107 157h1v2h-1zM107 184h1v1h-1zM107 269h1v7h-1zM107 323h1v6h-1zM107 414h1v1h-1zM107 430h1v1h-1zM107 440h1v2h-1zM107 508h1v1h-1zM108 89h1v1h-1zM108 156h1v1h-1zM108 162h1v1h-1zM108 182h1v2h-1zM108 263h1v6h-1zM108 329h1v7h-1zM108 415h1v2h-1zM108 442h1v1h-1zM108 456h1v1h-1zM108 509h1v1h-1zM109 88h1v1h-1zM109 155h1v1h-1zM109 163h1v1h-1zM109 181h1v1h-1zM109 258h1v5h-1zM109 336h1v5h-1zM109 417h1v1h-1zM109 443h1v1h-1zM109 455h1v1h-1zM109 510h1v1h-1zM110 87h1v1h-1zM110 153h1v2h-1zM110 179h1v2h-1zM110 254h1v4h-1zM110 341h1v4h-1zM110 418h1v2h-1zM110 444h1v2h-1zM110 454h1v1h-1zM110 511h1v1h-1zM111 152h1v1h-1zM111 177h1v2h-1zM111 251h1v3h-1zM111 345h1v3h-1zM111 420h1v2h-1zM111 446h1v1h-1zM112 151h1v1h-1zM112 165h1v1h-1zM112 175h1v2h-1zM112 248h1v3h-1zM112 348h1v3h-1zM112 422h1v2h-1zM112 447h1v1h-1zM113 85h1v1h-1zM113 149h1v2h-1zM113 166h1v1h-1zM113 174h1v1h-1zM113 245h1v3h-1zM113 351h1v3h-1zM113 424h1v1h-1zM113 448h1v1h-1zM113 452h1v1h-1zM113 513h1v1h-1zM114 84h1v1h-1zM114 148h1v1h-1zM114 173h1v1h-1zM114 241h1v4h-1zM114 354h1v4h-1zM114 425h1v1h-1zM114 449h1v1h-1zM114 514h1v1h-1zM115 147h1v1h-1zM115 171h1v2h-1zM115 238h1v3h-1zM115 358h1v3h-1zM116 146h1v1h-1zM116 168h1v1h-1zM116 170h1v1h-1zM116 235h1v3h-1zM116 361h1v3h-1zM116 427h1v2h-1zM116 449h1v1h-1zM116 452h1v1h-1zM117 82h1v1h-1zM117 145h1v1h-1zM117 169h1v1h-1zM117 232h1v3h-1zM117 364h1v3h-1zM117 429h1v1h-1zM117 448h1v1h-1zM117 453h1v1h-1zM117 516h1v1h-1zM118 81h1v1h-1zM118 144h1v1h-1zM118 168h1v1h-1zM118 229h1v3h-1zM118 367h1v3h-1zM118 430h1v1h-1zM118 447h1v1h-1zM118 454h1v1h-1zM118 517h1v1h-1zM119 142h1v2h-1zM119 145h1v1h-1zM119 166h1v2h-1zM119 172h1v1h-1zM119 226h1v3h-1zM119 370h1v3h-1zM119 431h1v2h-1zM119 446h1v1h-1zM119 455h1v2h-1zM119 518h1v1h-1zM120 79h1v1h-1zM120 141h1v1h-1zM120 165h1v1h-1zM120 173h1v1h-1zM120 224h1v2h-1zM120 373h1v2h-1zM120 433h1v1h-1zM120 457h1v1h-1zM120 519h1v1h-1zM121 78h1v1h-1zM121 81h1v1h-1zM121 140h1v1h-1zM121 164h1v1h-1zM121 222h1v2h-1zM121 375h1v2h-1zM121 434h1v1h-1zM121 458h1v1h-1zM121 520h1v1h-1zM122 77h1v1h-1zM122 82h1v2h-1zM122 139h1v1h-1zM122 147h1v1h-1zM122 162h1v2h-1zM122 219h1v3h-1zM122 377h1v2h-1zM122 435h1v1h-1zM122 444h1v1h-1zM122 459h1v1h-1zM122 521h1v1h-1zM123 76h1v1h-1zM123 84h1v1h-1zM123 138h1v1h-1zM123 148h1v1h-1zM123 161h1v1h-1zM123 175h1v1h-1zM123 217h1v2h-1zM123 379h1v2h-1zM123 437h1v1h-1zM123 443h1v1h-1zM123 460h1v1h-1zM123 522h1v1h-1zM124 75h1v1h-1zM124 85h1v1h-1zM124 136h1v2h-1zM124 149h1v1h-1zM124 160h1v1h-1zM124 215h1v2h-1zM124 381h1v2h-1zM124 438h1v1h-1zM124 442h1v1h-1zM124 461h1v1h-1zM124 523h1v1h-1zM125 74h1v1h-1zM125 86h1v1h-1zM125 135h1v1h-1zM125 150h1v1h-1zM125 158h1v2h-1zM125 213h1v2h-1zM125 383h1v2h-1zM125 439h1v1h-1zM125 462h1v2h-1zM125 524h1v1h-1zM126 87h1v2h-1zM126 134h1v1h-1zM126 157h1v1h-1zM126 177h1v1h-1zM126 211h1v2h-1zM126 385h1v2h-1zM126 434h1v1h-1zM126 440h1v1h-1zM126 464h1v1h-1zM127 89h1v1h-1zM127 133h1v1h-1zM127 156h1v1h-1zM127 178h1v1h-1zM127 209h1v2h-1zM127 387h1v2h-1zM127 433h1v1h-1zM127 442h1v1h-1zM127 465h1v1h-1zM128 72h1v1h-1zM128 90h1v1h-1zM128 132h1v1h-1zM128 152h1v1h-1zM128 155h1v1h-1zM128 207h1v2h-1zM128 389h1v2h-1zM128 443h1v1h-1zM128 526h1v1h-1zM129 71h1v1h-1zM129 91h1v1h-1zM129 131h1v1h-1zM129 154h1v1h-1zM129 205h1v2h-1zM129 391h1v2h-1zM129 444h1v1h-1zM129 467h1v1h-1zM129 527h1v1h-1zM130 92h1v2h-1zM130 130h1v1h-1zM130 152h1v1h-1zM130 180h1v1h-1zM130 203h1v2h-1zM130 393h1v2h-1zM130 431h1v1h-1zM130 445h1v1h-1zM130 465h1v1h-1zM130 468h1v1h-1zM131 94h1v1h-1zM131 151h1v1h-1zM131 202h1v1h-1zM131 395h1v2h-1zM131 430h1v1h-1zM131 446h1v2h-1zM131 464h1v1h-1zM131 469h1v1h-1zM132 69h1v1h-1zM132 95h1v1h-1zM132 128h1v1h-1zM132 150h1v1h-1zM132 200h1v2h-1zM132 397h1v2h-1zM132 448h1v1h-1zM132 463h1v1h-1zM132 470h1v1h-1zM132 529h1v1h-1zM133 96h1v1h-1zM133 127h1v1h-1zM133 130h1v1h-1zM133 149h1v1h-1zM133 182h1v1h-1zM133 199h1v1h-1zM133 399h1v1h-1zM133 449h1v1h-1zM133 461h1v2h-1zM133 471h1v1h-1zM134 97h1v2h-1zM134 126h1v1h-1zM134 131h1v1h-1zM134 148h1v1h-1zM134 197h1v2h-1zM134 400h1v2h-1zM134 428h1v1h-1zM134 450h1v1h-1zM134 460h1v1h-1zM134 472h1v1h-1zM135 67h1v1h-1zM135 99h1v1h-1zM135 125h1v1h-1zM135 132h1v1h-1zM135 147h1v1h-1zM135 196h1v1h-1zM135 402h1v1h-1zM135 427h1v1h-1zM135 451h1v1h-1zM135 459h1v1h-1zM135 473h1v1h-1zM135 531h1v1h-1zM136 100h1v1h-1zM136 133h1v1h-1zM136 146h1v1h-1zM136 184h1v1h-1zM136 194h1v2h-1zM136 403h1v2h-1zM136 452h1v1h-1zM136 458h1v1h-1zM137 101h1v2h-1zM137 145h1v1h-1zM137 185h1v1h-1zM137 192h1v2h-1zM137 405h1v2h-1zM137 453h1v1h-1zM137 457h1v1h-1zM138 103h1v1h-1zM138 123h1v1h-1zM138 144h1v1h-1zM138 191h1v1h-1zM138 407h1v1h-1zM138 425h1v1h-1zM138 454h1v1h-1zM138 456h1v1h-1zM138 475h1v1h-1zM139 104h1v1h-1zM139 122h1v1h-1zM139 135h1v1h-1zM139 143h1v1h-1zM139 189h1v2h-1zM139 408h1v2h-1zM139 424h1v1h-1zM139 455h1v1h-1zM139 476h1v1h-1zM140 64h1v1h-1zM140 105h1v1h-1zM140 121h1v1h-1zM140 136h1v1h-1zM140 142h1v1h-1zM140 188h1v1h-1zM140 410h1v1h-1zM140 456h1v1h-1zM140 477h1v1h-1zM140 534h1v1h-1zM141 106h1v2h-1zM141 120h1v1h-1zM141 137h1v1h-1zM141 141h1v1h-1zM141 186h1v1h-1zM141 411h1v2h-1zM141 457h1v1h-1zM141 478h1v1h-1zM142 108h1v1h-1zM142 138h1v1h-1zM142 140h1v1h-1zM142 185h1v1h-1zM142 413h1v1h-1zM142 422h1v1h-1zM142 458h1v1h-1zM143 62h1v1h-1zM143 109h1v1h-1zM143 139h1v1h-1zM143 184h1v1h-1zM143 414h1v1h-1zM143 421h1v1h-1zM143 459h1v1h-1zM143 536h1v1h-1zM144 110h1v1h-1zM144 118h1v1h-1zM144 138h1v1h-1zM144 182h1v2h-1zM144 415h1v2h-1zM144 460h1v1h-1zM144 480h1v1h-1zM145 111h1v2h-1zM145 117h1v1h-1zM145 137h1v1h-1zM145 181h1v1h-1zM145 417h1v1h-1zM145 461h1v1h-1zM145 479h1v1h-1zM145 481h1v1h-1zM146 60h1v1h-1zM146 113h1v1h-1zM146 116h1v1h-1zM146 136h1v1h-1zM146 180h1v1h-1zM146 418h1v1h-1zM146 462h1v1h-1zM146 477h1v2h-1zM146 482h1v1h-1zM146 538h1v1h-1zM147 135h1v1h-1zM147 179h1v1h-1zM147 463h1v1h-1zM147 476h1v1h-1zM147 483h1v1h-1zM148 134h1v1h-1zM148 177h1v2h-1zM148 420h1v1h-1zM148 464h1v1h-1zM148 475h1v1h-1zM148 484h1v1h-1zM149 58h1v1h-1zM149 116h1v1h-1zM149 133h1v1h-1zM149 176h1v1h-1zM149 421h1v2h-1zM149 465h1v1h-1zM149 474h1v1h-1zM149 540h1v1h-1zM150 117h1v1h-1zM150 132h1v1h-1zM150 175h1v1h-1zM150 423h1v1h-1zM150 466h1v1h-1zM150 473h1v1h-1zM151 112h1v1h-1zM151 118h1v1h-1zM151 131h1v1h-1zM151 174h1v1h-1zM151 424h1v1h-1zM151 467h1v1h-1zM151 471h1v2h-1zM151 486h1v1h-1zM152 56h1v1h-1zM152 111h1v1h-1zM152 119h1v1h-1zM152 173h1v1h-1zM152 425h1v1h-1zM152 470h1v1h-1zM152 487h1v1h-1zM152 542h1v1h-1zM153 120h1v2h-1zM153 171h1v2h-1zM153 426h1v2h-1zM154 122h1v1h-1zM154 129h1v1h-1zM154 170h1v1h-1zM154 428h1v1h-1zM155 109h1v1h-1zM155 123h1v1h-1zM155 128h1v1h-1zM155 169h1v1h-1zM155 429h1v1h-1zM155 470h1v1h-1zM155 489h1v1h-1zM156 108h1v1h-1zM156 124h1v1h-1zM156 127h1v1h-1zM156 168h1v1h-1zM156 430h1v1h-1zM156 471h1v1h-1zM156 490h1v1h-1zM157 53h1v1h-1zM157 126h1v1h-1zM157 167h1v1h-1zM157 431h1v1h-1zM157 472h1v1h-1zM157 545h1v1h-1zM158 166h1v1h-1zM158 432h1v1h-1zM159 106h1v1h-1zM159 165h1v1h-1zM159 433h1v1h-1zM159 492h1v1h-1zM160 124h1v1h-1zM160 164h1v1h-1zM160 434h1v1h-1zM160 474h1v1h-1zM161 123h1v1h-1zM161 163h1v1h-1zM161 435h1v1h-1zM161 475h1v1h-1zM161 491h1v2h-1zM162 104h1v1h-1zM162 162h1v1h-1zM162 436h1v1h-1zM162 490h1v1h-1zM162 494h1v1h-1zM163 103h1v1h-1zM163 161h1v1h-1zM163 437h1v1h-1zM163 489h1v1h-1zM163 495h1v1h-1zM164 121h1v1h-1zM164 160h1v1h-1zM164 438h1v1h-1zM164 477h1v1h-1zM164 487h1v2h-1zM165 120h1v1h-1zM165 159h1v1h-1zM165 439h1v1h-1zM165 478h1v1h-1zM165 486h1v1h-1zM166 101h1v1h-1zM166 103h1v2h-1zM166 158h1v1h-1zM166 440h1v1h-1zM166 485h1v1h-1zM166 497h1v1h-1zM167 105h1v2h-1zM167 157h1v1h-1zM167 441h1v1h-1zM167 483h1v2h-1zM168 107h1v1h-1zM168 118h1v1h-1zM168 156h1v1h-1zM168 442h1v1h-1zM168 480h1v1h-1zM168 482h1v1h-1zM169 99h1v1h-1zM169 108h1v2h-1zM169 117h1v1h-1zM169 155h1v1h-1zM169 443h1v1h-1zM169 481h1v1h-1zM169 499h1v1h-1zM170 98h1v1h-1zM170 110h1v2h-1zM170 116h1v1h-1zM170 154h1v1h-1zM170 444h1v1h-1zM170 482h1v1h-1zM170 500h1v1h-1zM171 112h1v2h-1zM173 96h1v1h-1zM173 152h1v1h-1zM173 446h1v1h-1zM173 484h1v1h-1zM173 502h1v1h-1zM174 113h1v1h-1zM174 151h1v1h-1zM174 447h1v1h-1zM174 485h1v1h-1zM175 150h1v1h-1zM175 448h1v1h-1zM176 149h1v1h-1zM176 449h1v1h-1zM179 147h1v1h-1zM179 451h1v1h-1zM179 502h1v2h-1zM180 92h1v1h-1zM180 146h1v1h-1zM180 452h1v1h-1zM180 500h1v2h-1zM180 506h1v1h-1zM181 109h1v1h-1zM181 145h1v1h-1zM181 453h1v1h-1zM181 489h1v1h-1zM181 498h1v2h-1zM182 497h1v1h-1zM183 92h1v2h-1zM183 495h1v2h-1zM184 94h1v2h-1zM184 107h1v1h-1zM184 143h1v1h-1zM184 455h1v1h-1zM184 491h1v1h-1zM184 493h1v2h-1zM185 96h1v1h-1zM185 142h1v1h-1zM185 456h1v1h-1zM186 97h1v2h-1zM187 88h1v1h-1zM187 99h1v2h-1zM187 105h1v1h-1zM187 493h1v1h-1zM187 510h1v1h-1zM188 101h1v2h-1zM188 140h1v1h-1zM188 458h1v1h-1zM191 138h1v1h-1zM191 460h1v1h-1zM196 135h1v1h-1zM196 463h1v1h-1zM196 513h1v1h-1zM197 511h1v2h-1zM198 101h1v2h-1zM198 509h1v2h-1zM199 103h1v2h-1zM199 133h1v1h-1zM199 465h1v1h-1zM199 507h1v2h-1zM200 105h1v2h-1zM200 505h1v2h-1zM200 563h1v2h-1zM201 107h1v2h-1zM201 503h1v2h-1zM201 560h1v3h-1zM202 83h1v2h-1zM202 109h1v2h-1zM202 131h1v1h-1zM202 467h1v1h-1zM202 502h1v1h-1zM202 558h1v2h-1zM203 85h1v2h-1zM203 111h1v2h-1zM203 555h1v3h-1zM204 87h1v2h-1zM204 113h1v2h-1zM204 552h1v3h-1zM205 89h1v2h-1zM205 115h1v2h-1zM205 549h1v3h-1zM206 91h1v2h-1zM206 117h1v2h-1zM206 547h1v2h-1zM207 93h1v1h-1zM207 119h1v2h-1zM207 544h1v3h-1zM208 121h1v2h-1zM208 541h1v3h-1zM209 123h1v2h-1zM209 127h1v1h-1zM209 539h1v2h-1zM210 125h1v1h-1zM210 536h1v3h-1zM211 533h1v3h-1zM212 530h1v3h-1zM213 528h1v2h-1zM214 525h1v3h-1zM215 505h1v2h-1zM215 521h1v2h-1zM215 524h1v1h-1zM216 503h1v2h-1zM216 519h1v2h-1zM217 500h1v3h-1zM217 516h1v3h-1zM218 498h1v2h-1zM218 513h1v3h-1zM219 495h1v3h-1zM219 511h1v2h-1zM220 75h1v1h-1zM220 493h1v2h-1zM220 510h1v1h-1zM221 76h1v2h-1zM221 491h1v2h-1zM222 78h1v3h-1zM222 488h1v3h-1zM223 81h1v3h-1zM223 486h1v2h-1zM224 84h1v2h-1zM224 483h1v3h-1zM225 86h1v2h-1zM225 481h1v2h-1zM226 480h1v1h-1zM235 528h1v1h-1zM236 524h1v4h-1zM237 521h1v3h-1zM238 517h1v4h-1zM239 516h1v1h-1zM240 69h1v1h-1zM241 70h1v3h-1zM242 73h1v4h-1zM243 77h1v3h-1zM244 80h1v2h-1zM251 458h1v3h-1zM252 454h1v4h-1zM253 20h1v3h-1zM253 450h1v4h-1zM254 23h1v6h-1zM254 448h1v2h-1zM255 29h1v6h-1zM255 531h1v3h-1zM256 35h1v6h-1zM256 527h1v4h-1zM257 41h1v6h-1zM257 523h1v4h-1zM258 47h1v6h-1zM258 521h1v2h-1zM259 53h1v6h-1zM260 59h1v4h-1zM261 64h1v4h-1zM262 68h1v6h-1zM263 74h1v4h-1zM276 530h1v7h-1zM277 523h1v7h-1zM281 62h1v6h-1zM282 68h1v8h-1zM288 77h1v14h-1zM289 91h1v14h-1zM291 132h1v13h-1zM297 524h1v14h-1zM301 61h1v14h-1zM309 494h1v14h-1zM310 508h1v14h-1zM316 523h1v7h-1zM317 530h1v7h-1zM321 69h1v7h-1zM322 62h1v7h-1zM335 521h1v4h-1zM336 525h1v6h-1zM337 531h1v3h-1zM338 536h1v3h-1zM339 539h1v6h-1zM340 76h1v3h-1zM340 545h1v6h-1zM341 72h1v4h-1zM341 551h1v6h-1zM342 68h1v4h-1zM342 557h1v6h-1zM343 66h1v2h-1zM343 563h1v6h-1zM344 569h1v6h-1zM345 575h1v4h-1zM354 517h1v2h-1zM355 519h1v3h-1zM356 522h1v4h-1zM357 526h1v3h-1zM358 529h1v1h-1zM359 82h1v1h-1zM360 78h1v4h-1zM361 75h1v3h-1zM362 71h1v4h-1zM363 70h1v1h-1zM372 118h1v1h-1zM373 116h1v2h-1zM373 511h1v2h-1zM374 113h1v3h-1zM374 513h1v2h-1zM375 111h1v2h-1zM375 515h1v3h-1zM376 108h1v3h-1zM376 518h1v3h-1zM377 106h1v2h-1zM377 521h1v2h-1zM378 88h1v2h-1zM378 104h1v2h-1zM378 523h1v1h-1zM379 86h1v2h-1zM379 101h1v3h-1zM379 432h1v1h-1zM380 83h1v3h-1zM380 99h1v2h-1zM380 433h1v2h-1zM381 80h1v3h-1zM381 96h1v3h-1zM381 435h1v2h-1zM382 78h1v2h-1zM382 94h1v2h-1zM382 437h1v2h-1zM383 74h1v1h-1zM383 77h1v1h-1zM383 92h1v2h-1zM383 439h1v2h-1zM384 71h1v3h-1zM384 441h1v2h-1zM385 69h1v2h-1zM385 443h1v1h-1zM386 66h1v3h-1zM387 63h1v3h-1zM387 471h1v1h-1zM388 60h1v3h-1zM388 472h1v1h-1zM389 58h1v2h-1zM389 473h1v2h-1zM390 55h1v3h-1zM390 475h1v2h-1zM391 52h1v3h-1zM391 477h1v2h-1zM392 50h1v2h-1zM392 479h1v2h-1zM392 505h1v2h-1zM393 47h1v3h-1zM393 481h1v2h-1zM393 507h1v2h-1zM394 44h1v3h-1zM394 483h1v2h-1zM394 509h1v2h-1zM395 41h1v3h-1zM395 485h1v2h-1zM395 511h1v2h-1zM396 39h1v2h-1zM396 95h1v2h-1zM396 487h1v2h-1zM396 513h1v2h-1zM397 36h1v3h-1zM397 93h1v2h-1zM397 489h1v2h-1zM397 515h1v1h-1zM398 34h1v2h-1zM398 91h1v2h-1zM398 491h1v2h-1zM399 89h1v2h-1zM399 133h1v1h-1zM399 465h1v1h-1zM399 493h1v2h-1zM400 87h1v2h-1zM400 418h1v1h-1zM400 495h1v2h-1zM401 85h1v2h-1zM401 419h1v1h-1zM401 497h1v1h-1zM402 135h1v1h-1zM402 420h1v2h-1zM402 463h1v1h-1zM403 422h1v1h-1zM404 423h1v1h-1zM405 424h1v2h-1zM406 426h1v1h-1zM407 138h1v1h-1zM407 427h1v1h-1zM407 460h1v1h-1zM410 140h1v1h-1zM410 458h1v1h-1zM410 496h1v2h-1zM411 105h1v1h-1zM411 493h1v1h-1zM411 498h1v2h-1zM412 500h1v1h-1zM413 142h1v1h-1zM413 456h1v1h-1zM413 501h1v2h-1zM414 104h1v2h-1zM414 107h1v1h-1zM414 143h1v1h-1zM414 455h1v1h-1zM414 491h1v1h-1zM414 503h1v2h-1zM415 102h1v2h-1zM415 505h1v2h-1zM416 100h1v2h-1zM417 99h1v1h-1zM417 109h1v1h-1zM417 145h1v1h-1zM417 453h1v1h-1zM417 489h1v1h-1zM418 92h1v1h-1zM418 97h1v2h-1zM418 146h1v1h-1zM418 452h1v1h-1zM418 506h1v1h-1zM419 95h1v2h-1zM419 147h1v1h-1zM419 451h1v1h-1zM420 148h1v1h-1zM420 450h1v1h-1zM423 150h1v1h-1zM423 448h1v1h-1zM424 113h1v1h-1zM424 151h1v1h-1zM424 447h1v1h-1zM424 485h1v1h-1zM425 96h1v1h-1zM425 114h1v1h-1zM425 152h1v1h-1zM425 446h1v1h-1zM425 502h1v1h-1zM426 115h1v1h-1zM426 483h1v1h-1zM427 485h1v2h-1zM428 98h1v1h-1zM428 154h1v1h-1zM428 444h1v1h-1zM428 487h1v2h-1zM428 500h1v1h-1zM429 99h1v1h-1zM429 117h1v1h-1zM429 155h1v1h-1zM429 443h1v1h-1zM429 481h1v1h-1zM429 489h1v1h-1zM429 499h1v1h-1zM430 116h1v1h-1zM430 118h1v1h-1zM430 156h1v1h-1zM430 442h1v1h-1zM430 480h1v1h-1zM430 490h1v2h-1zM431 114h1v2h-1zM431 157h1v1h-1zM431 441h1v1h-1zM431 492h1v2h-1zM432 101h1v1h-1zM432 113h1v1h-1zM432 158h1v1h-1zM432 440h1v1h-1zM432 494h1v2h-1zM432 497h1v1h-1zM433 112h1v1h-1zM433 120h1v1h-1zM433 159h1v1h-1zM433 439h1v1h-1zM433 478h1v1h-1zM434 110h1v2h-1zM434 121h1v1h-1zM434 160h1v1h-1zM434 438h1v1h-1zM434 477h1v1h-1zM435 103h1v1h-1zM435 109h1v1h-1zM435 161h1v1h-1zM435 437h1v1h-1zM435 495h1v1h-1zM436 104h1v1h-1zM436 108h1v1h-1zM436 162h1v1h-1zM436 436h1v1h-1zM436 494h1v1h-1zM437 106h1v2h-1zM437 123h1v1h-1zM437 163h1v1h-1zM437 435h1v1h-1zM437 475h1v1h-1zM438 124h1v1h-1zM438 164h1v1h-1zM438 434h1v1h-1zM438 474h1v1h-1zM439 106h1v1h-1zM439 125h1v1h-1zM439 165h1v1h-1zM439 433h1v1h-1zM439 473h1v1h-1zM439 492h1v1h-1zM440 166h1v1h-1zM440 432h1v1h-1zM441 53h1v1h-1zM441 167h1v1h-1zM441 364h1v2h-1zM441 431h1v1h-1zM441 473h1v1h-1zM441 545h1v1h-1zM442 108h1v1h-1zM442 127h1v1h-1zM442 168h1v1h-1zM442 366h1v2h-1zM442 430h1v1h-1zM442 471h1v1h-1zM442 474h1v1h-1zM442 490h1v1h-1zM443 109h1v1h-1zM443 128h1v1h-1zM443 169h1v1h-1zM443 368h1v2h-1zM443 429h1v1h-1zM443 470h1v1h-1zM443 475h1v1h-1zM443 489h1v1h-1zM444 55h1v1h-1zM444 170h1v1h-1zM444 370h1v2h-1zM444 428h1v1h-1zM444 469h1v1h-1zM444 476h1v1h-1zM444 543h1v1h-1zM445 130h1v1h-1zM445 171h1v2h-1zM445 372h1v2h-1zM445 426h1v2h-1zM445 468h1v1h-1zM445 477h1v1h-1zM446 111h1v1h-1zM446 128h1v1h-1zM446 173h1v1h-1zM446 374h1v2h-1zM446 425h1v1h-1zM446 478h1v2h-1zM446 487h1v1h-1zM447 112h1v1h-1zM447 126h1v2h-1zM447 174h1v1h-1zM447 376h1v2h-1zM447 424h1v1h-1zM447 480h1v1h-1zM447 486h1v1h-1zM448 113h1v1h-1zM448 125h1v1h-1zM448 132h1v1h-1zM448 175h1v1h-1zM448 423h1v1h-1zM448 466h1v1h-1zM448 481h1v1h-1zM448 485h1v1h-1zM449 58h1v1h-1zM449 124h1v1h-1zM449 133h1v1h-1zM449 176h1v1h-1zM449 421h1v2h-1zM449 465h1v1h-1zM449 482h1v1h-1zM449 540h1v1h-1zM450 123h1v1h-1zM450 134h1v1h-1zM450 177h1v2h-1zM450 420h1v1h-1zM450 464h1v1h-1zM451 115h1v1h-1zM451 122h1v1h-1zM451 135h1v1h-1zM451 419h1v1h-1zM451 463h1v1h-1zM452 60h1v1h-1zM452 116h1v1h-1zM452 120h1v2h-1zM452 136h1v1h-1zM452 180h1v1h-1zM452 418h1v1h-1zM452 462h1v1h-1zM452 482h1v1h-1zM452 485h1v1h-1zM452 538h1v1h-1zM453 117h1v1h-1zM453 119h1v1h-1zM453 137h1v1h-1zM453 181h1v1h-1zM453 417h1v1h-1zM453 461h1v1h-1zM453 481h1v1h-1zM453 486h1v2h-1zM454 118h1v1h-1zM454 138h1v1h-1zM454 182h1v2h-1zM454 415h1v2h-1zM454 460h1v1h-1zM454 480h1v1h-1zM454 488h1v1h-1zM455 62h1v1h-1zM455 139h1v1h-1zM455 177h1v1h-1zM455 184h1v1h-1zM455 414h1v1h-1zM455 459h1v1h-1zM455 489h1v1h-1zM455 536h1v1h-1zM456 140h1v1h-1zM456 176h1v1h-1zM456 185h1v1h-1zM456 413h1v1h-1zM456 458h1v1h-1zM456 460h1v1h-1zM456 490h1v1h-1zM457 120h1v1h-1zM457 141h1v1h-1zM457 186h1v2h-1zM457 412h1v1h-1zM457 457h1v1h-1zM457 461h1v1h-1zM457 478h1v1h-1zM457 491h1v2h-1zM458 64h1v1h-1zM458 121h1v1h-1zM458 142h1v1h-1zM458 188h1v1h-1zM458 410h1v1h-1zM458 456h1v1h-1zM458 462h1v1h-1zM458 477h1v1h-1zM458 493h1v1h-1zM458 534h1v1h-1zM459 122h1v1h-1zM459 143h1v1h-1zM459 174h1v1h-1zM459 189h1v2h-1zM459 408h1v2h-1zM459 455h1v1h-1zM459 463h1v1h-1zM459 476h1v1h-1zM459 494h1v1h-1zM460 123h1v1h-1zM460 142h1v1h-1zM460 144h1v1h-1zM460 173h1v1h-1zM460 191h1v1h-1zM460 407h1v1h-1zM460 454h1v1h-1zM460 464h1v1h-1zM460 475h1v1h-1zM460 495h1v1h-1zM461 66h1v1h-1zM461 124h1v1h-1zM461 141h1v1h-1zM461 145h1v1h-1zM461 192h1v2h-1zM461 405h1v2h-1zM461 413h1v1h-1zM461 453h1v1h-1zM461 474h1v1h-1zM461 496h1v2h-1zM461 532h1v1h-1zM462 140h1v1h-1zM462 146h1v1h-1zM462 194h1v2h-1zM462 403h1v2h-1zM462 414h1v1h-1zM462 452h1v1h-1zM462 498h1v1h-1zM463 139h1v1h-1zM463 147h1v1h-1zM463 171h1v1h-1zM463 196h1v1h-1zM463 402h1v1h-1zM463 451h1v1h-1zM463 466h1v1h-1zM463 499h1v1h-1zM464 126h1v1h-1zM464 137h1v2h-1zM464 148h1v1h-1zM464 170h1v1h-1zM464 197h1v2h-1zM464 400h1v2h-1zM464 450h1v1h-1zM464 467h1v1h-1zM464 472h1v1h-1zM464 500h1v1h-1zM465 127h1v1h-1zM465 136h1v1h-1zM465 149h1v1h-1zM465 199h1v1h-1zM465 399h1v1h-1zM465 416h1v1h-1zM465 449h1v1h-1zM465 468h1v1h-1zM465 471h1v1h-1zM465 501h1v2h-1zM466 69h1v1h-1zM466 128h1v1h-1zM466 135h1v1h-1zM466 150h1v1h-1zM466 200h1v2h-1zM466 397h1v2h-1zM466 448h1v1h-1zM466 470h1v1h-1zM466 503h1v1h-1zM466 529h1v1h-1zM467 70h1v1h-1zM467 129h1v1h-1zM467 134h1v1h-1zM467 151h1v1h-1zM467 168h1v1h-1zM467 202h1v1h-1zM467 395h1v2h-1zM467 446h1v2h-1zM467 504h1v1h-1zM467 528h1v1h-1zM468 130h1v1h-1zM468 133h1v1h-1zM468 152h1v2h-1zM468 167h1v1h-1zM468 203h1v2h-1zM468 393h1v2h-1zM468 418h1v1h-1zM468 468h1v1h-1zM468 505h1v2h-1zM469 131h1v1h-1zM469 154h1v1h-1zM469 205h1v2h-1zM469 391h1v2h-1zM469 419h1v1h-1zM469 444h1v1h-1zM469 467h1v1h-1zM469 507h1v1h-1zM470 72h1v1h-1zM470 155h1v1h-1zM470 207h1v2h-1zM470 389h1v2h-1zM470 443h1v1h-1zM470 446h1v1h-1zM470 466h1v1h-1zM470 508h1v1h-1zM470 526h1v1h-1zM471 73h1v1h-1zM471 133h1v1h-1zM471 156h1v1h-1zM471 165h1v1h-1zM471 209h1v2h-1zM471 387h1v2h-1zM471 442h1v1h-1zM471 465h1v1h-1zM471 509h1v1h-1zM471 525h1v1h-1zM472 134h1v1h-1zM472 164h1v1h-1zM472 211h1v2h-1zM472 385h1v2h-1zM472 421h1v1h-1zM472 440h1v2h-1zM472 464h1v1h-1zM472 510h1v2h-1zM473 135h1v1h-1zM473 158h1v2h-1zM473 213h1v2h-1zM473 383h1v2h-1zM473 439h1v1h-1zM473 448h1v1h-1zM473 462h1v2h-1zM473 512h1v1h-1zM474 75h1v1h-1zM474 136h1v2h-1zM474 156h1v1h-1zM474 160h1v1h-1zM474 215h1v2h-1zM474 381h1v2h-1zM474 438h1v1h-1zM474 449h1v1h-1zM474 461h1v1h-1zM474 513h1v1h-1zM474 523h1v1h-1zM475 76h1v1h-1zM475 138h1v1h-1zM475 155h1v1h-1zM475 161h1v1h-1zM475 217h1v2h-1zM475 379h1v2h-1zM475 423h1v1h-1zM475 437h1v1h-1zM475 450h1v1h-1zM475 460h1v1h-1zM475 514h1v1h-1zM475 522h1v1h-1zM476 77h1v1h-1zM476 139h1v1h-1zM476 154h1v1h-1zM476 163h1v1h-1zM476 219h1v3h-1zM476 377h1v2h-1zM476 435h1v2h-1zM476 451h1v1h-1zM476 459h1v1h-1zM476 515h1v2h-1zM476 521h1v1h-1zM477 78h1v1h-1zM477 140h1v1h-1zM477 153h1v1h-1zM477 164h1v1h-1zM477 222h1v2h-1zM477 375h1v2h-1zM477 434h1v1h-1zM477 458h1v1h-1zM477 517h1v1h-1zM477 520h1v1h-1zM478 79h1v1h-1zM478 141h1v1h-1zM478 165h1v1h-1zM478 224h1v2h-1zM478 373h1v2h-1zM478 425h1v1h-1zM478 433h1v1h-1zM478 457h1v1h-1zM478 519h1v1h-1zM479 80h1v1h-1zM479 142h1v2h-1zM479 166h1v2h-1zM479 226h1v3h-1zM479 370h1v3h-1zM479 426h1v1h-1zM479 431h1v2h-1zM479 453h1v1h-1zM479 455h1v2h-1zM480 81h1v1h-1zM480 144h1v1h-1zM480 151h1v1h-1zM480 168h1v1h-1zM480 229h1v3h-1zM480 367h1v3h-1zM480 430h1v1h-1zM480 454h1v1h-1zM480 517h1v1h-1zM481 82h1v1h-1zM481 145h1v1h-1zM481 150h1v1h-1zM481 169h1v1h-1zM481 232h1v3h-1zM481 364h1v3h-1zM481 429h1v1h-1zM481 453h1v1h-1zM481 516h1v1h-1zM482 83h1v1h-1zM482 146h1v1h-1zM482 149h1v1h-1zM482 170h1v1h-1zM482 235h1v3h-1zM482 361h1v3h-1zM482 428h1v1h-1zM482 430h1v1h-1zM482 452h1v1h-1zM482 515h1v1h-1zM483 171h1v1h-1zM483 238h1v3h-1zM483 358h1v3h-1zM483 426h1v1h-1zM483 451h1v1h-1zM484 173h1v1h-1zM484 241h1v4h-1zM484 354h1v4h-1zM484 425h1v1h-1zM484 449h1v2h-1zM485 85h1v1h-1zM485 146h1v1h-1zM485 149h1v2h-1zM485 174h1v1h-1zM485 245h1v3h-1zM485 351h1v3h-1zM485 424h1v1h-1zM485 432h1v1h-1zM485 448h1v1h-1zM485 513h1v1h-1zM486 86h1v1h-1zM486 151h1v1h-1zM486 175h1v2h-1zM486 248h1v3h-1zM486 348h1v3h-1zM486 422h1v2h-1zM486 433h1v1h-1zM486 447h1v1h-1zM486 512h1v1h-1zM487 152h1v1h-1zM487 177h1v2h-1zM487 251h1v3h-1zM487 345h1v3h-1zM487 420h1v2h-1zM487 446h1v1h-1zM488 144h1v1h-1zM488 153h1v2h-1zM488 179h1v2h-1zM488 254h1v4h-1zM488 341h1v4h-1zM488 418h1v2h-1zM488 444h1v2h-1zM489 88h1v1h-1zM489 143h1v1h-1zM489 155h1v1h-1zM489 169h1v1h-1zM489 181h1v1h-1zM489 258h1v5h-1zM489 336h1v5h-1zM489 417h1v1h-1zM489 435h1v1h-1zM489 443h1v1h-1zM489 510h1v1h-1zM490 89h1v1h-1zM490 142h1v1h-1zM490 156h1v1h-1zM490 182h1v2h-1zM490 263h1v6h-1zM490 329h1v7h-1zM490 415h1v2h-1zM490 436h1v1h-1zM490 442h1v1h-1zM490 509h1v1h-1zM491 90h1v1h-1zM491 157h1v2h-1zM491 184h1v1h-1zM491 269h1v7h-1zM491 323h1v6h-1zM491 414h1v1h-1zM491 440h1v2h-1zM491 508h1v1h-1zM492 91h1v1h-1zM492 159h1v1h-1zM492 185h1v2h-1zM492 276h1v7h-1zM492 316h1v7h-1zM492 412h1v2h-1zM492 439h1v1h-1zM492 507h1v1h-1zM493 92h1v1h-1zM493 140h1v1h-1zM493 160h1v2h-1zM493 187h1v1h-1zM493 283h1v16h-1zM493 300h1v16h-1zM493 411h1v1h-1zM493 438h1v1h-1zM493 506h1v1h-1zM494 93h1v1h-1zM494 139h1v1h-1zM494 162h1v1h-1zM494 188h1v1h-1zM494 409h1v2h-1zM494 436h1v1h-1zM494 505h1v1h-1zM495 94h1v1h-1zM495 138h1v1h-1zM495 163h1v1h-1zM495 190h1v2h-1zM495 407h1v2h-1zM495 435h1v1h-1zM495 504h1v1h-1zM496 95h1v1h-1zM496 164h1v2h-1zM496 192h1v2h-1zM496 405h1v2h-1zM496 433h1v2h-1zM496 503h1v1h-1zM497 96h1v1h-1zM497 166h1v1h-1zM497 194h1v2h-1zM497 403h1v2h-1zM497 416h1v1h-1zM497 432h1v1h-1zM497 502h1v1h-1zM498 97h1v1h-1zM498 136h1v1h-1zM498 167h1v2h-1zM498 196h1v2h-1zM498 401h1v2h-1zM498 430h1v2h-1zM498 501h1v1h-1zM499 98h1v1h-1zM499 135h1v1h-1zM499 169h1v1h-1zM499 198h1v2h-1zM499 399h1v2h-1zM499 429h1v1h-1zM499 500h1v1h-1zM500 99h1v1h-1zM500 134h1v1h-1zM500 170h1v1h-1zM500 186h1v1h-1zM500 200h1v2h-1zM500 397h1v2h-1zM500 428h1v1h-1zM500 499h1v1h-1zM501 100h1v1h-1zM501 171h1v2h-1zM501 202h1v2h-1zM501 395h1v1h-1zM501 426h1v2h-1zM501 498h1v1h-1zM502 101h1v1h-1zM502 173h1v1h-1zM502 204h1v2h-1zM502 393h1v2h-1zM502 425h1v1h-1zM502 497h1v1h-1zM503 102h1v1h-1zM503 132h1v1h-1zM503 174h1v2h-1zM503 206h1v1h-1zM503 391h1v2h-1zM503 423h1v2h-1zM503 496h1v1h-1zM504 103h1v1h-1zM504 131h1v1h-1zM504 176h1v2h-1zM504 208h1v2h-1zM504 389h1v2h-1zM504 421h1v2h-1zM504 495h1v1h-1zM505 104h1v1h-1zM505 178h1v2h-1zM505 210h1v2h-1zM505 387h1v2h-1zM505 419h1v1h-1zM505 494h1v1h-1zM506 105h1v1h-1zM506 180h1v1h-1zM506 212h1v2h-1zM506 385h1v2h-1zM506 418h1v1h-1zM506 493h1v1h-1zM507 106h1v1h-1zM507 129h1v1h-1zM507 181h1v2h-1zM507 214h1v3h-1zM507 381h1v4h-1zM507 416h1v2h-1zM507 492h1v1h-1zM508 107h1v1h-1zM508 128h1v1h-1zM508 183h1v2h-1zM508 217h1v4h-1zM508 377h1v1h-1zM508 379h1v2h-1zM508 414h1v2h-1zM508 491h1v1h-1zM509 108h1v1h-1zM509 127h1v1h-1zM509 185h1v2h-1zM509 221h1v4h-1zM509 374h1v3h-1zM509 412h1v2h-1zM509 490h1v1h-1zM510 109h1v1h-1zM510 187h1v1h-1zM510 226h1v1h-1zM510 372h1v2h-1zM510 410h1v2h-1zM510 489h1v1h-1zM511 110h1v1h-1zM511 188h1v2h-1zM511 227h1v2h-1zM511 370h1v2h-1zM511 408h1v2h-1zM511 487h1v2h-1zM512 111h1v2h-1zM512 125h1v1h-1zM512 190h1v2h-1zM512 229h1v3h-1zM512 366h1v4h-1zM512 406h1v2h-1zM512 486h1v1h-1zM513 113h1v1h-1zM513 124h1v1h-1zM513 192h1v2h-1zM513 232h1v4h-1zM513 362h1v4h-1zM513 404h1v2h-1zM513 485h1v1h-1zM514 114h1v1h-1zM514 123h1v1h-1zM514 194h1v3h-1zM514 236h1v4h-1zM514 360h1v2h-1zM514 403h1v1h-1zM514 483h1v2h-1zM515 115h1v2h-1zM515 197h1v2h-1zM515 240h1v4h-1zM515 355h1v4h-1zM515 400h1v2h-1zM515 482h1v1h-1zM516 117h1v1h-1zM516 199h1v2h-1zM516 245h1v2h-1zM516 351h1v4h-1zM516 398h1v2h-1zM516 481h1v1h-1zM517 118h1v1h-1zM517 121h1v1h-1zM517 202h1v1h-1zM517 247h1v4h-1zM517 347h1v4h-1zM517 395h1v3h-1zM517 480h1v1h-1zM518 119h1v1h-1zM518 203h1v2h-1zM518 251h1v4h-1zM518 343h1v4h-1zM518 393h1v2h-1zM518 479h1v1h-1zM519 205h1v2h-1zM519 255h1v4h-1zM519 339h1v1h-1zM519 341h1v2h-1zM519 391h1v2h-1zM519 478h1v1h-1zM520 121h1v1h-1zM520 207h1v2h-1zM520 259h1v4h-1zM520 264h1v1h-1zM520 334h1v5h-1zM520 389h1v2h-1zM520 477h1v1h-1zM521 122h1v1h-1zM521 209h1v3h-1zM521 265h1v7h-1zM521 326h1v8h-1zM521 387h1v2h-1zM521 476h1v1h-1zM522 123h1v1h-1zM522 212h1v2h-1zM522 272h1v10h-1zM522 283h1v5h-1zM522 310h1v11h-1zM522 322h1v4h-1zM522 384h1v3h-1zM522 475h1v1h-1zM523 124h1v1h-1zM523 214h1v3h-1zM523 288h1v11h-1zM523 300h1v1h-1zM523 302h1v8h-1zM523 382h1v1h-1zM523 474h1v1h-1zM524 125h1v1h-1zM524 217h1v3h-1zM524 379h1v3h-1zM524 472h1v2h-1zM525 126h1v2h-1zM525 221h1v3h-1zM525 375h1v4h-1zM525 471h1v1h-1zM526 128h1v1h-1zM526 224h1v3h-1zM526 372h1v3h-1zM526 470h1v1h-1zM527 129h1v1h-1zM527 227h1v2h-1zM527 369h1v3h-1zM527 468h1v2h-1zM528 130h1v2h-1zM528 229h1v3h-1zM528 367h1v2h-1zM528 467h1v1h-1zM529 132h1v1h-1zM529 232h1v4h-1zM529 364h1v3h-1zM529 466h1v1h-1zM530 133h1v2h-1zM530 236h1v4h-1zM530 359h1v4h-1zM530 464h1v2h-1zM531 135h1v1h-1zM531 241h1v3h-1zM531 354h1v5h-1zM531 462h1v2h-1zM532 136h1v2h-1zM532 244h1v4h-1zM532 350h1v4h-1zM532 461h1v1h-1zM533 138h1v2h-1zM533 248h1v6h-1zM533 344h1v6h-1zM533 459h1v2h-1zM534 140h1v1h-1zM534 254h1v6h-1zM534 338h1v5h-1zM534 458h1v1h-1zM535 141h1v2h-1zM535 262h1v2h-1zM535 334h1v4h-1zM535 456h1v2h-1zM536 143h1v1h-1zM536 264h1v6h-1zM536 328h1v6h-1zM536 455h1v1h-1zM537 144h1v2h-1zM537 270h1v11h-1zM537 282h1v5h-1zM537 311h1v11h-1zM537 323h1v5h-1zM537 453h1v2h-1zM538 146h1v1h-1zM538 287h1v14h-1zM538 302h1v9h-1zM538 452h1v1h-1zM539 147h1v2h-1zM539 450h1v2h-1zM540 149h1v1h-1zM540 449h1v1h-1zM541 150h1v2h-1zM541 447h1v2h-1zM542 152h1v1h-1zM542 445h1v2h-1zM543 153h1v2h-1zM543 444h1v1h-1zM544 155h1v2h-1zM544 442h1v2h-1zM545 157h1v1h-1zM545 441h1v1h-1zM546 158h1v2h-1zM546 439h1v2h-1zM547 160h1v2h-1zM547 437h1v2h-1zM548 162h1v2h-1zM548 435h1v2h-1zM549 164h1v2h-1zM549 433h1v2h-1zM550 166h1v2h-1zM550 431h1v2h-1zM551 168h1v2h-1zM551 429h1v2h-1zM552 170h1v2h-1zM552 427h1v2h-1zM553 172h1v2h-1zM553 425h1v2h-1zM554 174h1v3h-1zM554 422h1v3h-1zM555 177h1v2h-1zM555 420h1v2h-1zM556 179h1v2h-1zM556 418h1v2h-1zM557 181h1v2h-1zM557 416h1v2h-1zM558 183h1v3h-1zM558 413h1v3h-1zM559 186h1v2h-1zM559 411h1v2h-1zM560 188h1v2h-1zM560 409h1v2h-1zM561 190h1v2h-1zM561 407h1v2h-1zM562 192h1v3h-1zM562 404h1v3h-1zM563 195h1v2h-1zM563 402h1v2h-1zM564 197h1v2h-1zM564 400h1v2h-1zM565 199h1v2h-1zM565 399h1v1h-1zM566 201h1v3h-1zM566 395h1v3h-1zM567 204h1v3h-1zM567 391h1v4h-1zM568 207h1v4h-1zM568 388h1v3h-1zM569 211h1v3h-1zM569 385h1v3h-1zM570 214h1v3h-1zM570 382h1v3h-1zM571 217h1v3h-1zM571 379h1v3h-1zM572 220h1v3h-1zM572 376h1v3h-1zM573 223h1v3h-1zM573 372h1v4h-1zM574 226h1v4h-1zM574 369h1v3h-1zM575 230h1v4h-1zM575 365h1v4h-1zM576 234h1v4h-1zM576 361h1v4h-1zM577 238h1v5h-1zM577 356h1v5h-1zM578 243h1v5h-1zM578 351h1v5h-1zM579 248h1v5h-1zM579 254h1v1h-1zM579 343h1v8h-1zM580 255h1v10h-1zM580 333h1v10h-1zM581 265h1v10h-1zM581 323h1v10h-1zM582 275h1v10h-1zM582 313h1v10h-1zM583 285h1v28h-1z"/>
<path fill="#c0c0c0" d="M0 0h760v1h-760zM2 299h13v1h-13zM16 299h44v1h-44zM61 299h14v1h-14zM106 299h25v1h-25zM144 299h5v1h-5zM150 299h5v1h-5zM156 299h143v1h-143zM300 299h3v1h-3zM304 299h9v1h-9zM314 299h51v1h-51zM366 299h6v1h-6zM373 299h16v1h-16zM390 299h2v1h-2zM393 299h12v1h-12zM410 299h12v1h-12zM423 299h11v1h-11zM435 299h58v1h-58zM524 299h14v1h-14zM539 299h44v1h-44zM584 299h13v1h-13zM0 599h760v1h-760zM0 1h1v598h-1zM284 3h1v10h-1zM285 13h1v2h-1zM285 16h1v17h-1zM286 33h1v20h-1zM287 53h1v7h-1zM287 61h1v12h-1zM288 73h1v2h-1zM288 91h1v1h-1zM289 106h1v6h-1zM290 112h1v20h-1zM291 145h1v6h-1zM292 151h1v5h-1zM292 157h1v14h-1zM293 171h1v20h-1zM294 191h1v18h-1zM294 210h1v1h-1zM295 211h1v19h-1zM296 230h1v20h-1zM297 250h1v20h-1zM298 270h1v20h-1zM299 291h1v8h-1zM299 300h1v9h-1zM300 310h1v1h-1zM300 312h1v17h-1zM301 329h1v20h-1zM302 349h1v20h-1zM303 369h1v14h-1zM303 384h1v4h-1zM304 388h1v1h-1zM304 390h1v18h-1zM305 408h1v20h-1zM306 428h1v19h-1zM307 447h1v20h-1zM308 467h1v20h-1zM309 487h1v6h-1zM310 507h1v1h-1zM310 523h1v3h-1zM311 526h1v11h-1zM311 538h1v8h-1zM312 546h1v20h-1zM313 566h1v16h-1zM313 583h1v3h-1zM314 586h1v10h-1zM406 299h1v1h-1zM408 299h1v1h-1zM599 1h1v598h-1zM759 1h1v598h-1z"/>
<path fill="#808080" d="M134 137h2v1h-2zM129 143h2v1h-2zM126 146h2v1h-2zM473 146h2v1h-2zM478 147h2v1h-2zM117 149h2v1h-2zM115 152h2v1h-2zM472 152h2v1h-2zM483 153h2v1h-2zM123 154h2v1h-2zM111 155h2v1h-2zM121 157h2v1h-2zM109 158h2v1h-2zM115 158h2v1h-2zM477 158h2v1h-2zM483 158h2v1h-2zM489 159h2v1h-2zM113 161h2v1h-2zM119 161h2v1h-2zM485 162h2v1h-2zM491 162h2v1h-2zM117 164h2v1h-2zM104 165h2v1h-2zM481 165h2v1h-2zM487 165h2v1h-2zM107 167h2v1h-2zM102 168h2v1h-2zM109 168h2v1h-2zM483 168h2v1h-2zM496 169h2v1h-2zM112 170h2v1h-2zM106 171h2v1h-2zM99 172h2v1h-2zM492 172h2v1h-2zM101 173h2v1h-2zM498 173h2v1h-2zM110 174h2v1h-2zM97 175h2v1h-2zM104 175h2v1h-2zM488 175h2v1h-2zM495 175h2v1h-2zM99 176h2v1h-2zM106 176h2v1h-2zM493 176h2v1h-2zM501 176h2v1h-2zM108 177h2v1h-2zM499 177h2v1h-2zM102 178h2v1h-2zM490 178h2v1h-2zM497 178h2v1h-2zM104 179h2v1h-2zM106 180h2v1h-2zM494 180h2v1h-2zM503 180h2v1h-2zM492 181h2v1h-2zM501 181h2v1h-2zM93 182h2v1h-2zM499 182h2v1h-2zM95 183h2v1h-2zM496 184h2v1h-2zM98 185h2v1h-2zM494 185h2v1h-2zM91 186h2v1h-2zM100 186h2v1h-2zM93 187h2v1h-2zM102 187h2v1h-2zM506 187h2v1h-2zM504 188h2v1h-2zM96 189h2v1h-2zM502 189h2v1h-2zM89 190h2v1h-2zM98 190h2v1h-2zM500 190h2v1h-2zM510 190h2v1h-2zM91 191h2v1h-2zM100 191h2v1h-2zM498 191h2v1h-2zM508 191h2v1h-2zM93 192h2v1h-2zM506 192h2v1h-2zM87 193h2v1h-2zM95 193h2v1h-2zM504 193h2v1h-2zM89 194h2v1h-2zM97 194h2v1h-2zM502 194h2v1h-2zM510 194h2v1h-2zM99 195h2v1h-2zM500 195h2v1h-2zM508 195h2v1h-2zM92 196h2v1h-2zM506 196h2v1h-2zM94 197h2v1h-2zM504 197h2v1h-2zM513 197h2v1h-2zM96 198h2v1h-2zM502 198h2v1h-2zM511 198h2v1h-2zM500 199h2v1h-2zM509 199h2v1h-2zM507 200h2v1h-2zM84 201h2v1h-2zM505 201h2v1h-2zM86 202h2v1h-2zM503 202h2v1h-2zM88 203h2v1h-2zM163 203h2v1h-2zM81 204h2v1h-2zM90 204h2v1h-2zM165 204h2v1h-2zM83 205h2v1h-2zM92 205h2v1h-2zM517 205h2v1h-2zM85 206h2v1h-2zM167 206h2v1h-2zM515 206h2v1h-2zM87 207h3v1h-3zM169 207h2v1h-2zM512 207h3v1h-3zM79 208h2v1h-2zM90 208h2v1h-2zM509 208h3v1h-3zM81 209h2v1h-2zM92 209h2v1h-2zM171 209h2v1h-2zM507 209h2v1h-2zM518 209h2v1h-2zM83 210h3v1h-3zM516 210h2v1h-2zM86 211h3v1h-3zM513 211h3v1h-3zM79 212h2v1h-2zM89 212h2v1h-2zM511 212h2v1h-2zM520 212h2v1h-2zM81 213h3v1h-3zM509 213h2v1h-2zM518 213h2v1h-2zM84 214h3v1h-3zM515 214h3v1h-3zM87 215h2v1h-2zM512 215h3v1h-3zM89 216h2v1h-2zM510 216h2v1h-2zM153 217h2v1h-2zM520 217h2v1h-2zM155 218h2v1h-2zM517 218h3v1h-3zM157 219h2v1h-2zM514 219h3v1h-3zM76 220h2v1h-2zM159 220h2v1h-2zM512 220h2v1h-2zM78 221h3v1h-3zM161 221h2v1h-2zM510 221h2v1h-2zM81 222h3v1h-3zM163 222h2v1h-2zM84 223h2v1h-2zM75 224h2v1h-2zM86 224h2v1h-2zM524 224h2v1h-2zM77 225h3v1h-3zM522 225h2v1h-2zM80 226h3v1h-3zM519 226h3v1h-3zM72 227h2v1h-2zM83 227h2v1h-2zM516 227h3v1h-3zM74 228h3v1h-3zM85 228h2v1h-2zM514 228h2v1h-2zM77 229h4v1h-4zM523 229h3v1h-3zM81 230h3v1h-3zM519 230h4v1h-4zM71 231h2v1h-2zM84 231h2v1h-2zM516 231h3v1h-3zM73 232h3v1h-3zM514 232h2v1h-2zM527 232h2v1h-2zM76 233h4v1h-4zM524 233h3v1h-3zM80 234h3v1h-3zM520 234h4v1h-4zM83 235h2v1h-2zM517 235h3v1h-3zM515 236h2v1h-2zM528 236h2v1h-2zM525 237h3v1h-3zM521 238h4v1h-4zM518 239h3v1h-3zM70 240h4v1h-4zM516 240h2v1h-2zM74 241h3v1h-3zM77 242h4v1h-4zM68 243h2v1h-2zM81 243h2v1h-2zM70 244h4v1h-4zM529 244h3v1h-3zM74 245h5v1h-5zM525 245h4v1h-4zM79 246h3v1h-3zM521 246h4v1h-4zM67 247h2v1h-2zM518 247h3v1h-3zM69 248h4v1h-4zM530 248h3v1h-3zM73 249h5v1h-5zM526 249h4v1h-4zM78 250h3v1h-3zM522 250h4v1h-4zM66 251h2v1h-2zM519 251h3v1h-3zM68 252h4v1h-4zM531 252h2v1h-2zM72 253h5v1h-5zM526 253h5v1h-5zM77 254h3v1h-3zM522 254h4v1h-4zM520 255h2v1h-2zM532 256h2v1h-2zM527 257h5v1h-5zM523 258h4v1h-4zM521 259h2v1h-2zM64 260h4v1h-4zM68 261h6v1h-6zM74 262h4v1h-4zM63 264h4v1h-4zM67 265h7v1h-7zM532 265h4v1h-4zM74 266h3v1h-3zM525 266h7v1h-7zM522 267h3v1h-3zM63 268h4v1h-4zM67 269h6v1h-6zM532 269h4v1h-4zM73 270h4v1h-4zM526 270h6v1h-6zM522 271h4v1h-4zM62 272h7v1h-7zM69 273h7v1h-7zM533 273h4v1h-4zM526 274h7v1h-7zM523 275h3v1h-3zM530 277h7v1h-7zM523 278h7v1h-7zM62 280h6v1h-6zM68 281h8v1h-8zM62 284h6v1h-6zM68 285h8v1h-8zM530 285h7v1h-7zM523 286h7v1h-7zM61 289h14v1h-14zM524 290h14v1h-14zM61 293h14v1h-14zM524 294h14v1h-14zM300 297h2v1h-2zM524 298h14v1h-14zM61 300h14v1h-14zM297 301h2v1h-2zM61 304h14v1h-14zM524 305h14v1h-14zM61 308h14v1h-14zM524 309h14v1h-14zM68 312h8v1h-8zM62 313h6v1h-6zM523 313h7v1h-7zM530 314h7v1h-7zM523 317h7v1h-7zM530 318h7v1h-7zM69 320h7v1h-7zM62 321h7v1h-7zM73 323h3v1h-3zM66 324h7v1h-7zM62 325h4v1h-4zM523 325h6v1h-6zM529 326h8v1h-8zM73 327h4v1h-4zM67 328h6v1h-6zM522 328h4v1h-4zM63 329h4v1h-4zM526 329h6v1h-6zM532 330h4v1h-4zM74 331h3v1h-3zM67 332h7v1h-7zM522 332h3v1h-3zM63 333h4v1h-4zM525 333h7v1h-7zM532 334h3v1h-3zM521 336h4v1h-4zM525 337h6v1h-6zM531 338h3v1h-3zM76 339h3v1h-3zM71 340h5v1h-5zM67 341h4v1h-4zM65 342h2v1h-2zM77 343h3v1h-3zM72 344h5v1h-5zM519 344h3v1h-3zM68 345h4v1h-4zM522 345h4v1h-4zM66 346h2v1h-2zM526 346h5v1h-5zM77 347h3v1h-3zM531 347h2v1h-2zM73 348h4v1h-4zM518 348h3v1h-3zM69 349h4v1h-4zM521 349h4v1h-4zM67 350h2v1h-2zM525 350h5v1h-5zM78 351h3v1h-3zM530 351h2v1h-2zM74 352h4v1h-4zM517 352h3v1h-3zM70 353h4v1h-4zM520 353h4v1h-4zM68 354h2v1h-2zM524 354h5v1h-5zM516 355h2v1h-2zM529 355h2v1h-2zM518 356h4v1h-4zM522 357h3v1h-3zM81 358h2v1h-2zM525 358h4v1h-4zM78 359h3v1h-3zM74 360h4v1h-4zM71 361h3v1h-3zM69 362h2v1h-2zM82 362h2v1h-2zM79 363h3v1h-3zM514 363h2v1h-2zM75 364h4v1h-4zM516 364h3v1h-3zM72 365h3v1h-3zM519 365h4v1h-4zM70 366h2v1h-2zM83 366h2v1h-2zM523 366h3v1h-3zM80 367h3v1h-3zM513 367h2v1h-2zM526 367h2v1h-2zM76 368h4v1h-4zM515 368h3v1h-3zM73 369h3v1h-3zM518 369h4v1h-4zM83 370h2v1h-2zM512 370h2v1h-2zM522 370h3v1h-3zM80 371h3v1h-3zM514 371h2v1h-2zM525 371h2v1h-2zM77 372h3v1h-3zM516 372h3v1h-3zM75 373h2v1h-2zM519 373h3v1h-3zM73 374h2v1h-2zM511 374h2v1h-2zM522 374h2v1h-2zM513 375h2v1h-2zM515 376h3v1h-3zM87 377h2v1h-2zM518 377h3v1h-3zM85 378h2v1h-2zM521 378h2v1h-2zM82 379h3v1h-3zM79 380h3v1h-3zM77 381h2v1h-2zM89 381h2v1h-2zM87 382h2v1h-2zM508 382h2v1h-2zM84 383h3v1h-3zM510 383h2v1h-2zM81 384h3v1h-3zM512 384h3v1h-3zM79 385h2v1h-2zM88 385h2v1h-2zM515 385h3v1h-3zM77 386h2v1h-2zM85 386h3v1h-3zM508 386h2v1h-2zM518 386h2v1h-2zM83 387h2v1h-2zM510 387h3v1h-3zM81 388h2v1h-2zM513 388h3v1h-3zM79 389h2v1h-2zM90 389h2v1h-2zM505 389h2v1h-2zM516 389h2v1h-2zM87 390h3v1h-3zM507 390h2v1h-2zM518 390h2v1h-2zM84 391h3v1h-3zM509 391h2v1h-2zM82 392h2v1h-2zM511 392h3v1h-3zM505 393h2v1h-2zM514 393h2v1h-2zM507 394h2v1h-2zM516 394h2v1h-2zM95 395h2v1h-2zM509 395h2v1h-2zM93 396h2v1h-2zM511 396h2v1h-2zM91 397h2v1h-2zM513 397h2v1h-2zM89 398h2v1h-2zM87 399h2v1h-2zM97 399h2v1h-2zM85 400h2v1h-2zM95 400h2v1h-2zM501 400h2v1h-2zM93 401h2v1h-2zM503 401h2v1h-2zM91 402h2v1h-2zM98 402h2v1h-2zM89 403h2v1h-2zM96 403h2v1h-2zM506 403h2v1h-2zM87 404h2v1h-2zM94 404h2v1h-2zM499 404h2v1h-2zM508 404h2v1h-2zM92 405h2v1h-2zM501 405h2v1h-2zM510 405h2v1h-2zM90 406h2v1h-2zM100 406h2v1h-2zM503 406h2v1h-2zM88 407h2v1h-2zM98 407h2v1h-2zM497 407h2v1h-2zM505 407h2v1h-2zM96 408h2v1h-2zM499 408h2v1h-2zM507 408h2v1h-2zM94 409h2v1h-2zM509 409h2v1h-2zM92 410h2v1h-2zM502 410h2v1h-2zM90 411h2v1h-2zM495 411h2v1h-2zM504 411h2v1h-2zM497 412h2v1h-2zM506 412h2v1h-2zM103 413h2v1h-2zM101 414h2v1h-2zM500 414h2v1h-2zM99 415h2v1h-2zM502 415h2v1h-2zM504 416h2v1h-2zM96 417h2v1h-2zM105 417h2v1h-2zM94 418h2v1h-2zM103 418h2v1h-2zM491 418h2v1h-2zM101 419h2v1h-2zM493 419h2v1h-2zM107 420h2v1h-2zM98 421h2v1h-2zM489 421h2v1h-2zM496 421h2v1h-2zM96 422h2v1h-2zM104 422h2v1h-2zM491 422h2v1h-2zM498 422h2v1h-2zM102 423h2v1h-2zM109 423h2v1h-2zM500 423h2v1h-2zM487 424h2v1h-2zM494 424h2v1h-2zM99 425h2v1h-2zM496 425h2v1h-2zM105 426h2v1h-2zM498 426h2v1h-2zM491 427h2v1h-2zM485 428h2v1h-2zM101 429h2v1h-2zM114 430h2v1h-2zM488 430h2v1h-2zM495 430h2v1h-2zM490 431h2v1h-2zM110 433h2v1h-2zM116 433h2v1h-2zM493 433h2v1h-2zM480 434h2v1h-2zM106 436h2v1h-2zM112 436h2v1h-2zM478 437h2v1h-2zM484 437h2v1h-2zM108 439h2v1h-2zM115 439h2v1h-2zM120 440h2v1h-2zM482 440h2v1h-2zM488 440h2v1h-2zM476 441h2v1h-2zM486 443h2v1h-2zM474 444h2v1h-2zM114 445h2v1h-2zM125 446h2v1h-2zM482 446h2v1h-2zM480 449h2v1h-2zM119 451h2v1h-2zM125 451h2v1h-2zM472 453h2v1h-2zM469 456h2v1h-2zM464 462h2v1h-2zM69 239h1v1h-1zM72 370h1v1h-1zM74 223h1v1h-1zM75 219h1v1h-1zM76 382h1v1h-1zM78 211h1v1h-1zM81 393h1v1h-1zM83 200h1v1h-1zM84 401h1v1h-1zM85 369h1v1h-1zM86 192h1v1h-1zM86 405h1v1h-1zM88 189h1v1h-1zM90 185h1v1h-1zM90 384h1v1h-1zM91 195h1v1h-1zM91 213h1v1h-1zM92 181h1v1h-1zM92 388h1v1h-1zM94 206h1v1h-1zM95 188h1v1h-1zM96 174h1v1h-1zM97 184h1v1h-1zM98 171h1v1h-1zM98 199h1v1h-1zM98 416h1v1h-1zM98 426h1v1h-1zM100 420h1v1h-1zM101 167h1v1h-1zM101 177h1v1h-1zM101 424h1v1h-1zM103 164h1v1h-1zM103 174h1v1h-1zM103 428h1v1h-1zM104 169h1v1h-1zM104 427h1v1h-1zM105 170h1v1h-1zM105 412h1v1h-1zM106 166h1v1h-1zM106 421h1v1h-1zM107 416h1v1h-1zM107 425h1v1h-1zM108 157h1v1h-1zM108 172h1v1h-1zM108 181h1v1h-1zM108 424h1v1h-1zM108 435h1v1h-1zM109 173h1v1h-1zM109 419h1v1h-1zM109 434h1v1h-1zM110 178h1v1h-1zM110 438h1v1h-1zM111 159h1v1h-1zM111 169h1v1h-1zM111 422h1v1h-1zM111 437h1v1h-1zM111 443h1v1h-1zM112 160h1v1h-1zM112 432h1v1h-1zM112 442h1v1h-1zM113 156h1v1h-1zM113 431h1v1h-1zM113 441h1v1h-1zM113 446h1v1h-1zM114 151h1v1h-1zM114 157h1v1h-1zM114 171h1v1h-1zM114 435h1v1h-1zM114 440h1v1h-1zM115 162h1v1h-1zM115 434h1v1h-1zM116 148h1v1h-1zM116 163h1v1h-1zM116 429h1v1h-1zM116 444h1v1h-1zM117 153h1v1h-1zM117 159h1v1h-1zM117 438h1v1h-1zM117 443h1v1h-1zM118 154h1v1h-1zM118 160h1v1h-1zM118 432h1v1h-1zM118 437h1v1h-1zM118 442h1v1h-1zM118 452h1v1h-1zM119 150h1v1h-1zM119 155h1v1h-1zM119 165h1v1h-1zM119 436h1v1h-1zM119 441h1v1h-1zM120 151h1v1h-1zM120 156h1v1h-1zM120 435h1v1h-1zM120 456h1v1h-1zM121 141h1v1h-1zM121 152h1v1h-1zM121 162h1v1h-1zM121 450h1v1h-1zM121 455h1v1h-1zM122 142h1v1h-1zM122 153h1v1h-1zM122 439h1v1h-1zM122 449h1v1h-1zM122 454h1v1h-1zM123 143h1v1h-1zM123 158h1v1h-1zM123 438h1v1h-1zM123 448h1v1h-1zM123 453h1v1h-1zM124 138h1v1h-1zM124 144h1v1h-1zM124 159h1v1h-1zM124 447h1v1h-1zM124 452h1v1h-1zM124 459h1v1h-1zM125 139h1v1h-1zM125 145h1v1h-1zM125 155h1v1h-1zM125 458h1v1h-1zM126 140h1v1h-1zM126 156h1v1h-1zM126 457h1v1h-1zM126 463h1v1h-1zM127 135h1v1h-1zM127 141h1v1h-1zM127 445h1v1h-1zM127 450h1v1h-1zM127 456h1v1h-1zM127 462h1v1h-1zM128 136h1v1h-1zM128 142h1v1h-1zM128 147h1v1h-1zM128 444h1v1h-1zM128 449h1v1h-1zM128 455h1v1h-1zM128 461h1v1h-1zM129 132h1v1h-1zM129 137h1v1h-1zM129 148h1v1h-1zM129 448h1v1h-1zM129 454h1v1h-1zM129 460h1v1h-1zM130 133h1v1h-1zM130 138h1v1h-1zM130 149h1v1h-1zM130 447h1v1h-1zM130 453h1v1h-1zM130 459h1v1h-1zM131 134h1v1h-1zM131 139h1v1h-1zM131 144h1v1h-1zM131 150h1v1h-1zM131 452h1v1h-1zM131 458h1v1h-1zM132 135h1v1h-1zM132 140h1v1h-1zM132 145h1v1h-1zM132 451h1v1h-1zM132 457h1v1h-1zM132 469h1v1h-1zM133 136h1v1h-1zM133 141h1v1h-1zM133 146h1v1h-1zM133 450h1v1h-1zM133 456h1v1h-1zM133 468h1v1h-1zM134 142h1v1h-1zM134 147h1v1h-1zM134 455h1v1h-1zM134 467h1v1h-1zM135 126h1v1h-1zM135 143h1v1h-1zM135 454h1v1h-1zM135 466h1v1h-1zM135 471h1v1h-1zM136 127h1v1h-1zM136 138h1v1h-1zM136 144h1v1h-1zM136 453h1v1h-1zM136 464h1v2h-1zM136 470h1v1h-1zM137 128h1v1h-1zM137 139h1v1h-1zM137 463h1v1h-1zM137 469h1v1h-1zM138 129h1v1h-1zM138 140h1v1h-1zM138 462h1v1h-1zM138 468h1v1h-1zM138 474h1v1h-1zM139 124h1v1h-1zM139 130h1v1h-1zM139 141h1v1h-1zM139 461h1v1h-1zM139 467h1v1h-1zM139 473h1v1h-1zM140 125h1v1h-1zM140 131h1v1h-1zM140 460h1v1h-1zM140 466h1v1h-1zM140 472h1v1h-1zM141 126h1v1h-1zM141 132h1v1h-1zM141 188h1v1h-1zM141 459h1v1h-1zM141 465h1v1h-1zM141 471h1v1h-1zM141 477h1v1h-1zM142 120h1v1h-1zM142 127h1v1h-1zM142 133h1v1h-1zM142 464h1v1h-1zM142 469h1v2h-1zM142 476h1v1h-1zM143 121h1v1h-1zM143 128h1v1h-1zM143 134h1v1h-1zM143 189h1v1h-1zM143 463h1v1h-1zM143 468h1v1h-1zM143 475h1v1h-1zM144 122h1v1h-1zM144 129h1v1h-1zM144 135h1v1h-1zM144 462h1v1h-1zM144 467h1v1h-1zM144 474h1v1h-1zM145 123h1v1h-1zM145 130h1v1h-1zM145 136h1v1h-1zM145 191h1v1h-1zM145 466h1v1h-1zM145 472h1v2h-1zM146 118h1v1h-1zM146 124h1v1h-1zM146 131h1v1h-1zM146 465h1v1h-1zM146 471h1v1h-1zM147 119h1v2h-1zM147 125h1v2h-1zM147 132h1v1h-1zM147 417h1v1h-1zM147 464h1v1h-1zM147 470h1v1h-1zM148 121h1v1h-1zM148 127h1v1h-1zM148 133h1v1h-1zM148 469h1v1h-1zM148 482h1v1h-1zM149 122h1v1h-1zM149 128h1v1h-1zM149 194h1v1h-1zM149 416h1v1h-1zM149 468h1v1h-1zM149 480h1v2h-1zM150 123h1v1h-1zM150 129h1v1h-1zM150 467h1v1h-1zM150 479h1v1h-1zM151 124h1v1h-1zM151 130h1v1h-1zM151 195h1v1h-1zM151 414h1v1h-1zM151 478h1v1h-1zM151 484h1v1h-1zM152 113h1v1h-1zM152 125h1v2h-1zM152 477h1v1h-1zM152 482h1v2h-1zM153 114h1v2h-1zM153 127h1v1h-1zM153 196h1v1h-1zM153 413h1v1h-1zM153 476h1v1h-1zM153 481h1v1h-1zM154 116h1v1h-1zM154 128h1v1h-1zM154 474h1v2h-1zM154 480h1v1h-1zM155 111h1v1h-1zM155 117h1v1h-1zM155 198h1v1h-1zM155 411h1v1h-1zM155 473h1v1h-1zM155 479h1v1h-1zM155 486h1v2h-1zM156 112h1v1h-1zM156 118h1v1h-1zM156 472h1v1h-1zM156 478h1v1h-1zM156 485h1v1h-1zM157 113h1v1h-1zM157 119h1v1h-1zM157 409h1v1h-1zM157 476h1v2h-1zM157 484h1v1h-1zM157 490h1v1h-1zM158 114h1v1h-1zM158 120h1v2h-1zM158 475h1v1h-1zM158 482h1v2h-1zM158 488h1v2h-1zM159 108h1v2h-1zM159 115h1v2h-1zM159 122h1v1h-1zM159 201h1v1h-1zM159 408h1v1h-1zM159 474h1v1h-1zM159 481h1v1h-1zM159 487h1v1h-1zM160 110h1v1h-1zM160 117h1v1h-1zM160 123h1v1h-1zM160 480h1v1h-1zM160 486h1v1h-1zM161 111h1v1h-1zM161 118h1v1h-1zM161 202h1v1h-1zM161 406h1v1h-1zM161 478h1v2h-1zM161 484h1v2h-1zM162 106h1v2h-1zM162 112h1v2h-1zM162 119h1v1h-1zM162 477h1v1h-1zM162 483h1v1h-1zM163 108h1v1h-1zM163 114h1v1h-1zM163 120h1v1h-1zM163 202h1v1h-1zM163 405h1v1h-1zM163 482h1v1h-1zM164 109h1v1h-1zM164 115h1v1h-1zM164 480h1v2h-1zM164 495h1v1h-1zM165 110h1v2h-1zM165 116h1v2h-1zM165 205h1v1h-1zM165 403h1v1h-1zM165 479h1v1h-1zM165 493h1v2h-1zM166 112h1v1h-1zM166 118h1v1h-1zM166 492h1v1h-1zM167 113h1v1h-1zM167 205h1v1h-1zM167 402h1v1h-1zM167 490h1v2h-1zM167 497h1v1h-1zM168 114h1v2h-1zM168 488h1v2h-1zM168 495h1v2h-1zM169 101h1v2h-1zM169 116h1v1h-1zM169 208h1v1h-1zM169 400h1v1h-1zM169 487h1v1h-1zM169 494h1v1h-1zM170 103h1v1h-1zM170 485h1v2h-1zM170 493h1v1h-1zM171 104h1v1h-1zM171 208h1v1h-1zM171 399h1v1h-1zM171 484h1v1h-1zM171 491h1v2h-1zM171 500h1v1h-1zM172 98h1v1h-1zM172 105h1v2h-1zM172 490h1v1h-1zM172 498h1v2h-1zM173 99h1v2h-1zM173 107h1v1h-1zM173 210h1v1h-1zM173 397h1v1h-1zM173 489h1v1h-1zM173 496h1v2h-1zM174 101h1v1h-1zM174 108h1v1h-1zM174 487h1v2h-1zM174 494h1v2h-1zM174 502h1v1h-1zM175 102h1v2h-1zM175 109h1v2h-1zM175 212h1v1h-1zM175 395h1v1h-1zM175 493h1v1h-1zM175 500h1v2h-1zM176 96h1v2h-1zM176 104h1v2h-1zM176 111h1v1h-1zM176 491h1v2h-1zM176 498h1v2h-1zM177 98h1v2h-1zM177 106h1v1h-1zM177 213h1v1h-1zM177 394h1v1h-1zM177 489h1v2h-1zM177 496h1v2h-1zM178 100h1v1h-1zM178 107h1v2h-1zM178 488h1v1h-1zM178 495h1v1h-1zM179 101h1v2h-1zM179 109h1v1h-1zM179 215h1v1h-1zM179 392h1v1h-1zM179 493h1v2h-1zM180 94h1v2h-1zM180 103h1v2h-1zM180 491h1v2h-1zM181 96h1v2h-1zM181 105h1v2h-1zM181 216h1v1h-1zM181 391h1v1h-1zM181 490h1v1h-1zM181 506h1v1h-1zM182 98h1v1h-1zM182 107h1v1h-1zM182 504h1v2h-1zM183 99h1v2h-1zM183 218h1v1h-1zM183 389h1v1h-1zM183 502h1v2h-1zM184 101h1v2h-1zM184 500h1v2h-1zM185 103h1v2h-1zM185 219h1v1h-1zM185 388h1v1h-1zM185 499h1v1h-1zM185 508h1v1h-1zM186 105h1v1h-1zM186 497h1v2h-1zM186 506h1v2h-1zM187 90h1v2h-1zM187 220h1v1h-1zM187 386h1v1h-1zM187 495h1v2h-1zM187 504h1v2h-1zM188 92h1v2h-1zM188 502h1v2h-1zM189 94h1v2h-1zM189 222h1v1h-1zM189 385h1v1h-1zM189 501h1v1h-1zM189 509h1v2h-1zM190 87h1v1h-1zM190 96h1v2h-1zM190 499h1v2h-1zM190 507h1v2h-1zM191 88h1v2h-1zM191 98h1v2h-1zM191 223h1v1h-1zM191 383h1v1h-1zM191 497h1v2h-1zM191 505h1v2h-1zM192 90h1v2h-1zM192 100h1v2h-1zM192 503h1v2h-1zM192 512h1v1h-1zM193 86h1v1h-1zM193 92h1v2h-1zM193 225h1v1h-1zM193 381h1v1h-1zM193 501h1v2h-1zM193 510h1v2h-1zM194 87h1v2h-1zM194 94h1v2h-1zM194 499h1v2h-1zM194 508h1v2h-1zM195 89h1v2h-1zM195 96h1v2h-1zM195 226h1v1h-1zM195 380h1v1h-1zM195 498h1v1h-1zM195 506h1v2h-1zM196 91h1v2h-1zM196 98h1v2h-1zM196 505h1v1h-1zM197 84h1v1h-1zM197 93h1v2h-1zM197 227h1v1h-1zM197 378h1v1h-1zM197 503h1v2h-1zM198 85h1v2h-1zM198 95h1v2h-1zM198 501h1v2h-1zM199 87h1v2h-1zM199 97h1v2h-1zM199 229h1v1h-1zM199 377h1v1h-1zM199 500h1v1h-1zM200 89h1v2h-1zM200 515h1v1h-1zM201 91h1v2h-1zM201 230h1v1h-1zM201 375h1v1h-1zM201 513h1v2h-1zM202 93h1v2h-1zM202 511h1v2h-1zM203 95h1v2h-1zM203 232h1v1h-1zM203 374h1v1h-1zM203 509h1v2h-1zM204 507h1v2h-1zM204 516h1v2h-1zM205 80h1v2h-1zM205 233h1v1h-1zM205 372h1v1h-1zM205 505h1v2h-1zM205 514h1v2h-1zM206 82h1v2h-1zM206 504h1v1h-1zM206 511h1v3h-1zM207 84h1v3h-1zM207 234h1v1h-1zM207 371h1v1h-1zM207 509h1v2h-1zM208 87h1v3h-1zM208 507h1v2h-1zM208 518h1v2h-1zM209 79h1v2h-1zM209 90h1v2h-1zM209 236h1v1h-1zM209 369h1v1h-1zM209 505h1v2h-1zM209 516h1v2h-1zM210 81h1v2h-1zM210 92h1v1h-1zM210 127h1v1h-1zM210 513h1v3h-1zM211 83h1v2h-1zM211 129h1v1h-1zM211 237h1v1h-1zM211 367h1v1h-1zM211 510h1v3h-1zM211 520h1v1h-1zM212 77h1v2h-1zM212 85h1v3h-1zM212 131h1v1h-1zM212 508h1v2h-1zM212 518h1v2h-1zM213 79h1v2h-1zM213 88h1v2h-1zM213 133h1v1h-1zM213 239h1v1h-1zM213 366h1v1h-1zM213 507h1v1h-1zM213 515h1v3h-1zM214 81h1v3h-1zM214 90h1v1h-1zM214 135h1v1h-1zM214 512h1v3h-1zM215 84h1v3h-1zM215 137h1v1h-1zM215 240h1v1h-1zM215 364h1v1h-1zM215 510h1v2h-1zM216 76h1v1h-1zM216 87h1v2h-1zM216 139h1v1h-1zM216 508h1v2h-1zM217 77h1v2h-1zM217 89h1v1h-1zM217 141h1v1h-1zM217 241h1v1h-1zM217 363h1v1h-1zM218 79h1v3h-1zM218 143h1v1h-1zM219 82h1v3h-1zM219 145h1v1h-1zM219 243h1v1h-1zM219 361h1v1h-1zM219 523h1v1h-1zM220 85h1v2h-1zM220 147h1v1h-1zM220 521h1v2h-1zM221 87h1v2h-1zM221 149h1v1h-1zM221 244h1v1h-1zM221 360h1v1h-1zM221 518h1v3h-1zM222 151h1v1h-1zM222 515h1v3h-1zM223 153h1v1h-1zM223 246h1v1h-1zM223 358h1v1h-1zM223 513h1v2h-1zM223 524h1v1h-1zM224 73h1v2h-1zM224 155h1v1h-1zM224 511h1v2h-1zM224 522h1v2h-1zM225 75h1v2h-1zM225 247h1v1h-1zM225 357h1v1h-1zM225 519h1v3h-1zM226 77h1v3h-1zM226 157h1v1h-1zM226 516h1v3h-1zM227 80h1v3h-1zM227 159h1v1h-1zM227 248h1v1h-1zM227 355h1v1h-1zM227 477h1v1h-1zM227 514h1v2h-1zM227 525h1v2h-1zM228 72h1v1h-1zM228 83h1v2h-1zM228 161h1v1h-1zM228 475h1v1h-1zM228 512h1v2h-1zM228 522h1v3h-1zM229 73h1v3h-1zM229 85h1v1h-1zM229 163h1v1h-1zM229 250h1v1h-1zM229 353h1v1h-1zM229 473h1v1h-1zM229 518h1v4h-1zM230 76h1v4h-1zM230 165h1v1h-1zM230 471h1v1h-1zM230 515h1v3h-1zM231 80h1v3h-1zM231 167h1v1h-1zM231 251h1v1h-1zM231 352h1v1h-1zM231 467h1v1h-1zM231 469h1v1h-1zM231 513h1v2h-1zM231 526h1v2h-1zM232 70h1v2h-1zM232 83h1v2h-1zM232 169h1v1h-1zM232 465h1v1h-1zM232 523h1v3h-1zM233 72h1v3h-1zM233 171h1v1h-1zM233 253h1v1h-1zM233 350h1v1h-1zM233 463h1v1h-1zM233 519h1v4h-1zM234 75h1v4h-1zM234 173h1v1h-1zM234 461h1v1h-1zM234 516h1v3h-1zM235 79h1v3h-1zM235 175h1v1h-1zM235 254h1v1h-1zM235 349h1v1h-1zM235 457h1v1h-1zM235 459h1v1h-1zM235 514h1v2h-1zM236 69h1v2h-1zM236 82h1v2h-1zM236 177h1v1h-1zM236 455h1v1h-1zM237 71h1v3h-1zM237 179h1v1h-1zM237 255h1v1h-1zM237 347h1v1h-1zM237 453h1v1h-1zM238 74h1v4h-1zM238 181h1v1h-1zM238 451h1v1h-1zM239 78h1v3h-1zM239 183h1v1h-1zM239 257h1v1h-1zM239 447h1v1h-1zM239 449h1v1h-1zM239 529h1v1h-1zM240 81h1v2h-1zM240 185h1v1h-1zM240 445h1v1h-1zM240 525h1v4h-1zM241 187h1v1h-1zM241 258h1v1h-1zM241 344h1v1h-1zM241 443h1v1h-1zM241 522h1v3h-1zM242 189h1v1h-1zM242 441h1v1h-1zM242 518h1v4h-1zM243 191h1v1h-1zM243 260h1v1h-1zM243 343h1v1h-1zM243 437h1v1h-1zM243 439h1v1h-1zM243 516h1v2h-1zM243 529h1v2h-1zM244 67h1v3h-1zM244 193h1v1h-1zM244 435h1v1h-1zM244 524h1v5h-1zM245 70h1v4h-1zM245 195h1v1h-1zM245 261h1v1h-1zM245 341h1v1h-1zM245 433h1v1h-1zM245 520h1v4h-1zM246 74h1v4h-1zM246 197h1v1h-1zM246 431h1v1h-1zM246 517h1v3h-1zM247 78h1v3h-1zM247 199h1v1h-1zM247 262h1v1h-1zM247 339h1v1h-1zM247 429h1v1h-1zM247 530h1v2h-1zM248 66h1v3h-1zM248 201h1v1h-1zM248 425h1v1h-1zM248 427h1v1h-1zM248 525h1v5h-1zM249 69h1v4h-1zM249 264h1v1h-1zM249 338h1v1h-1zM249 423h1v1h-1zM249 521h1v4h-1zM250 73h1v4h-1zM250 205h1v1h-1zM250 421h1v1h-1zM250 518h1v3h-1zM251 77h1v3h-1zM251 207h1v1h-1zM251 265h1v1h-1zM251 336h1v1h-1zM251 419h1v1h-1zM251 531h1v2h-1zM252 66h1v2h-1zM252 209h1v1h-1zM252 415h1v1h-1zM252 417h1v1h-1zM252 526h1v5h-1zM253 68h1v4h-1zM253 211h1v1h-1zM253 267h1v1h-1zM253 335h1v1h-1zM253 413h1v1h-1zM253 522h1v4h-1zM254 72h1v5h-1zM254 411h1v1h-1zM254 519h1v3h-1zM255 77h1v2h-1zM255 213h1v1h-1zM255 333h1v1h-1zM255 409h1v1h-1zM256 65h1v2h-1zM256 215h1v1h-1zM256 405h1v1h-1zM256 407h1v1h-1zM257 67h1v4h-1zM257 217h1v1h-1zM257 269h1v1h-1zM257 332h1v1h-1zM257 403h1v1h-1zM258 71h1v5h-1zM258 219h1v1h-1zM258 401h1v1h-1zM259 76h1v2h-1zM259 221h1v1h-1zM259 330h1v1h-1zM259 399h1v1h-1zM260 223h1v1h-1zM260 395h1v1h-1zM260 397h1v1h-1zM260 531h1v4h-1zM261 225h1v1h-1zM261 272h1v1h-1zM261 329h1v1h-1zM261 393h1v1h-1zM261 525h1v6h-1zM262 227h1v1h-1zM262 391h1v1h-1zM262 521h1v4h-1zM263 229h1v1h-1zM263 274h1v1h-1zM263 327h1v1h-1zM263 389h1v1h-1zM264 231h1v1h-1zM264 385h1v1h-1zM264 387h1v1h-1zM264 532h1v4h-1zM265 63h1v4h-1zM265 233h1v1h-1zM265 325h1v1h-1zM265 383h1v1h-1zM265 525h1v7h-1zM266 67h1v7h-1zM266 235h1v1h-1zM266 381h1v1h-1zM266 522h1v3h-1zM267 74h1v3h-1zM267 237h1v1h-1zM267 277h1v1h-1zM267 324h1v1h-1zM267 379h1v1h-1zM268 239h1v1h-1zM268 375h1v1h-1zM268 377h1v1h-1zM268 532h1v4h-1zM269 63h1v4h-1zM269 241h1v1h-1zM269 278h1v1h-1zM269 322h1v1h-1zM269 373h1v1h-1zM269 526h1v6h-1zM270 67h1v6h-1zM270 243h1v1h-1zM270 371h1v1h-1zM270 522h1v4h-1zM271 73h1v4h-1zM271 245h1v1h-1zM271 279h1v1h-1zM271 321h1v1h-1zM271 369h1v1h-1zM272 247h1v1h-1zM272 367h1v1h-1zM272 529h1v8h-1zM273 62h1v4h-1zM273 249h1v1h-1zM273 281h1v1h-1zM273 319h1v1h-1zM273 363h1v1h-1zM273 523h1v6h-1zM274 66h1v7h-1zM274 251h1v1h-1zM274 361h1v1h-1zM275 73h1v3h-1zM275 253h1v1h-1zM275 282h1v1h-1zM275 318h1v1h-1zM275 359h1v1h-1zM276 255h1v1h-1zM276 355h1v1h-1zM276 357h1v1h-1zM277 62h1v7h-1zM277 257h1v1h-1zM277 284h1v1h-1zM277 316h1v1h-1zM277 353h1v1h-1zM278 69h1v7h-1zM278 259h1v1h-1zM278 351h1v1h-1zM279 261h1v1h-1zM279 285h1v1h-1zM279 315h1v1h-1zM279 349h1v1h-1zM280 263h1v1h-1zM280 345h1v1h-1zM280 347h1v1h-1zM280 530h1v7h-1zM281 265h1v1h-1zM281 286h1v1h-1zM281 313h1v1h-1zM281 343h1v1h-1zM281 523h1v7h-1zM282 267h1v1h-1zM282 341h1v1h-1zM283 269h1v1h-1zM283 288h1v1h-1zM283 311h1v1h-1zM283 339h1v1h-1zM284 337h1v1h-1zM284 530h1v7h-1zM285 62h1v6h-1zM285 271h1v1h-1zM285 289h1v1h-1zM285 310h1v1h-1zM285 333h1v1h-1zM285 335h1v1h-1zM285 523h1v7h-1zM286 68h1v8h-1zM286 273h1v1h-1zM286 331h1v1h-1zM287 275h1v1h-1zM287 291h1v1h-1zM287 308h1v1h-1zM287 329h1v1h-1zM288 277h1v1h-1zM288 327h1v1h-1zM289 279h1v1h-1zM289 292h1v1h-1zM289 307h1v1h-1zM289 323h1v1h-1zM289 325h1v1h-1zM289 524h1v14h-1zM290 61h1v14h-1zM290 281h1v1h-1zM290 321h1v1h-1zM291 283h1v1h-1zM291 293h1v1h-1zM291 305h1v1h-1zM291 319h1v1h-1zM292 285h1v1h-1zM292 317h1v1h-1zM293 287h1v1h-1zM293 295h1v1h-1zM293 304h1v1h-1zM293 313h1v1h-1zM293 315h1v1h-1zM293 524h1v14h-1zM294 61h1v14h-1zM294 289h1v1h-1zM294 311h1v1h-1zM295 291h1v1h-1zM295 296h1v1h-1zM295 302h1v1h-1zM295 309h1v1h-1zM296 293h1v1h-1zM296 307h1v1h-1zM297 295h1v1h-1zM297 298h1v1h-1zM297 303h1v1h-1zM297 305h1v1h-1zM298 61h1v14h-1zM298 297h1v1h-1zM299 299h1v1h-1zM300 301h1v1h-1zM300 524h1v14h-1zM301 295h1v1h-1zM301 300h1v1h-1zM301 303h1v1h-1zM302 291h1v1h-1zM303 289h1v1h-1zM303 296h1v1h-1zM303 302h1v1h-1zM303 307h1v1h-1zM304 287h1v1h-1zM304 309h1v1h-1zM304 524h1v14h-1zM305 61h1v14h-1zM305 283h1v1h-1zM305 285h1v1h-1zM305 294h1v1h-1zM305 303h1v1h-1zM305 311h1v1h-1zM306 281h1v1h-1zM306 313h1v1h-1zM307 279h1v1h-1zM307 293h1v1h-1zM307 305h1v1h-1zM307 315h1v1h-1zM308 277h1v1h-1zM308 317h1v1h-1zM308 524h1v14h-1zM309 61h1v14h-1zM309 273h1v1h-1zM309 275h1v1h-1zM309 291h1v1h-1zM309 306h1v1h-1zM309 319h1v1h-1zM310 271h1v1h-1zM310 321h1v1h-1zM311 269h1v1h-1zM311 290h1v1h-1zM311 307h1v1h-1zM311 323h1v1h-1zM312 267h1v1h-1zM312 325h1v1h-1zM312 523h1v7h-1zM313 68h1v8h-1zM313 263h1v1h-1zM313 265h1v1h-1zM313 288h1v1h-1zM313 309h1v1h-1zM313 327h1v1h-1zM313 530h1v7h-1zM314 62h1v6h-1zM314 261h1v1h-1zM315 259h1v1h-1zM315 287h1v1h-1zM315 310h1v1h-1zM315 329h1v1h-1zM316 257h1v1h-1zM316 331h1v1h-1zM317 68h1v8h-1zM317 255h1v1h-1zM317 285h1v1h-1zM317 312h1v1h-1zM317 333h1v1h-1zM318 62h1v6h-1zM318 251h1v1h-1zM318 253h1v1h-1zM318 335h1v1h-1zM319 249h1v1h-1zM319 283h1v1h-1zM319 313h1v1h-1zM319 337h1v1h-1zM320 247h1v1h-1zM320 339h1v1h-1zM320 523h1v7h-1zM321 282h1v1h-1zM321 314h1v1h-1zM321 341h1v1h-1zM321 530h1v7h-1zM322 241h1v1h-1zM322 343h1v1h-1zM323 280h1v1h-1zM323 316h1v1h-1zM323 345h1v1h-1zM323 523h1v3h-1zM324 347h1v1h-1zM324 526h1v7h-1zM325 69h1v7h-1zM325 279h1v1h-1zM325 317h1v1h-1zM325 349h1v1h-1zM325 533h1v4h-1zM326 62h1v7h-1zM326 233h1v1h-1zM326 351h1v1h-1zM327 277h1v1h-1zM327 319h1v1h-1zM327 353h1v1h-1zM327 522h1v4h-1zM328 73h1v4h-1zM328 227h1v1h-1zM328 355h1v1h-1zM328 526h1v6h-1zM329 67h1v6h-1zM329 225h1v1h-1zM329 276h1v1h-1zM329 320h1v1h-1zM329 357h1v1h-1zM329 532h1v4h-1zM330 63h1v4h-1zM330 221h1v1h-1zM330 223h1v1h-1zM330 359h1v1h-1zM331 219h1v1h-1zM331 274h1v1h-1zM331 321h1v1h-1zM331 522h1v3h-1zM332 74h1v3h-1zM332 217h1v1h-1zM332 363h1v1h-1zM332 525h1v7h-1zM333 67h1v7h-1zM333 273h1v1h-1zM333 323h1v1h-1zM333 365h1v1h-1zM333 532h1v4h-1zM334 64h1v3h-1zM334 211h1v1h-1zM334 213h1v1h-1zM334 367h1v1h-1zM335 209h1v1h-1zM335 271h1v1h-1zM335 324h1v1h-1zM335 369h1v1h-1zM336 74h1v4h-1zM336 207h1v1h-1zM336 371h1v1h-1zM337 68h1v6h-1zM337 205h1v1h-1zM337 269h1v1h-1zM337 326h1v1h-1zM337 373h1v1h-1zM338 65h1v3h-1zM338 201h1v1h-1zM338 203h1v1h-1zM338 375h1v1h-1zM339 199h1v1h-1zM339 268h1v1h-1zM339 327h1v1h-1zM339 377h1v1h-1zM339 520h1v3h-1zM340 197h1v1h-1zM340 379h1v1h-1zM340 523h1v4h-1zM341 195h1v1h-1zM341 266h1v1h-1zM341 329h1v1h-1zM341 381h1v1h-1zM341 527h1v5h-1zM342 191h1v1h-1zM342 193h1v1h-1zM342 383h1v1h-1zM342 532h1v2h-1zM343 189h1v1h-1zM343 265h1v1h-1zM343 330h1v1h-1zM343 519h1v3h-1zM344 77h1v3h-1zM344 187h1v1h-1zM344 385h1v1h-1zM344 522h1v4h-1zM345 72h1v5h-1zM345 185h1v1h-1zM345 263h1v1h-1zM345 331h1v1h-1zM345 387h1v1h-1zM345 526h1v5h-1zM346 68h1v4h-1zM346 181h1v1h-1zM346 183h1v1h-1zM346 389h1v1h-1zM346 531h1v2h-1zM347 66h1v2h-1zM347 179h1v1h-1zM347 262h1v1h-1zM347 333h1v1h-1zM347 391h1v1h-1zM347 519h1v3h-1zM348 78h1v3h-1zM348 177h1v1h-1zM348 393h1v1h-1zM348 522h1v4h-1zM349 73h1v5h-1zM349 175h1v1h-1zM349 260h1v1h-1zM349 334h1v1h-1zM349 395h1v1h-1zM349 526h1v4h-1zM350 69h1v4h-1zM350 171h1v1h-1zM350 397h1v1h-1zM350 530h1v2h-1zM351 67h1v2h-1zM351 169h1v1h-1zM351 259h1v1h-1zM351 336h1v1h-1zM351 399h1v1h-1zM351 518h1v3h-1zM352 79h1v3h-1zM352 167h1v1h-1zM352 401h1v1h-1zM352 521h1v4h-1zM353 74h1v5h-1zM353 150h1v4h-1zM353 165h1v1h-1zM353 257h1v1h-1zM353 337h1v1h-1zM353 403h1v1h-1zM353 525h1v4h-1zM354 70h1v4h-1zM354 144h1v6h-1zM354 163h1v1h-1zM354 405h1v1h-1zM354 529h1v2h-1zM355 68h1v2h-1zM355 81h1v2h-1zM355 141h1v3h-1zM355 159h1v1h-1zM355 161h1v1h-1zM355 255h1v1h-1zM355 338h1v1h-1zM355 407h1v1h-1zM356 77h1v4h-1zM356 157h1v1h-1zM356 409h1v1h-1zM357 74h1v3h-1zM357 155h1v1h-1zM357 254h1v1h-1zM357 340h1v1h-1zM357 411h1v1h-1zM358 70h1v4h-1zM358 153h1v1h-1zM358 413h1v1h-1zM358 516h1v2h-1zM359 69h1v1h-1zM359 149h1v1h-1zM359 151h1v1h-1zM359 252h1v1h-1zM359 341h1v1h-1zM359 415h1v1h-1zM359 518h1v3h-1zM360 147h1v1h-1zM360 417h1v1h-1zM360 521h1v4h-1zM361 145h1v1h-1zM361 251h1v1h-1zM361 343h1v1h-1zM361 419h1v1h-1zM361 525h1v3h-1zM362 143h1v1h-1zM362 157h1v1h-1zM362 421h1v1h-1zM362 515h1v2h-1zM362 528h1v2h-1zM363 83h1v2h-1zM363 139h1v1h-1zM363 141h1v1h-1zM363 156h1v1h-1zM363 344h1v1h-1zM363 423h1v1h-1zM363 517h1v3h-1zM364 80h1v3h-1zM364 137h1v1h-1zM364 155h1v1h-1zM364 425h1v1h-1zM364 520h1v4h-1zM365 76h1v4h-1zM365 135h1v1h-1zM365 154h1v1h-1zM365 248h1v1h-1zM365 345h1v1h-1zM365 427h1v1h-1zM365 524h1v3h-1zM366 73h1v3h-1zM366 133h1v1h-1zM366 153h1v1h-1zM366 429h1v1h-1zM366 514h1v2h-1zM366 527h1v2h-1zM367 71h1v2h-1zM367 84h1v2h-1zM367 129h1v1h-1zM367 131h1v1h-1zM367 152h1v1h-1zM367 246h1v1h-1zM367 347h1v1h-1zM367 431h1v1h-1zM367 516h1v3h-1zM368 81h1v3h-1zM368 127h1v1h-1zM368 151h1v1h-1zM368 433h1v1h-1zM368 519h1v4h-1zM369 77h1v4h-1zM369 125h1v1h-1zM369 150h1v1h-1zM369 245h1v1h-1zM369 348h1v1h-1zM369 435h1v1h-1zM369 513h1v1h-1zM369 523h1v3h-1zM370 74h1v3h-1zM370 85h1v2h-1zM370 123h1v1h-1zM370 149h1v1h-1zM370 437h1v1h-1zM370 514h1v2h-1zM370 526h1v1h-1zM371 72h1v2h-1zM371 83h1v2h-1zM371 121h1v1h-1zM371 148h1v1h-1zM371 243h1v1h-1zM371 350h1v1h-1zM371 439h1v1h-1zM371 516h1v3h-1zM372 80h1v3h-1zM372 441h1v1h-1zM372 519h1v3h-1zM373 77h1v3h-1zM373 241h1v1h-1zM373 351h1v1h-1zM373 522h1v2h-1zM374 75h1v2h-1zM374 86h1v2h-1zM374 443h1v1h-1zM374 524h1v2h-1zM375 74h1v1h-1zM375 84h1v2h-1zM375 240h1v1h-1zM375 352h1v1h-1zM375 445h1v1h-1zM376 81h1v3h-1zM376 447h1v1h-1zM377 78h1v3h-1zM377 238h1v1h-1zM377 354h1v1h-1zM377 449h1v1h-1zM377 510h1v2h-1zM378 76h1v2h-1zM378 451h1v1h-1zM378 512h1v2h-1zM379 75h1v1h-1zM379 237h1v1h-1zM379 355h1v1h-1zM379 453h1v1h-1zM379 514h1v3h-1zM380 455h1v1h-1zM380 517h1v3h-1zM381 235h1v1h-1zM381 357h1v1h-1zM381 457h1v1h-1zM381 508h1v2h-1zM381 520h1v2h-1zM382 89h1v2h-1zM382 459h1v1h-1zM382 510h1v2h-1zM382 522h1v1h-1zM383 87h1v2h-1zM383 461h1v1h-1zM383 512h1v3h-1zM384 84h1v3h-1zM384 463h1v1h-1zM384 508h1v1h-1zM384 515h1v3h-1zM385 81h1v3h-1zM385 91h1v1h-1zM385 232h1v1h-1zM385 359h1v1h-1zM385 465h1v1h-1zM385 509h1v2h-1zM385 518h1v2h-1zM386 79h1v2h-1zM386 89h1v2h-1zM386 467h1v1h-1zM386 511h1v2h-1zM386 520h1v2h-1zM387 78h1v1h-1zM387 86h1v3h-1zM387 231h1v1h-1zM387 361h1v1h-1zM387 469h1v1h-1zM387 513h1v3h-1zM388 83h1v3h-1zM388 471h1v1h-1zM388 506h1v1h-1zM388 516h1v2h-1zM389 81h1v2h-1zM389 92h1v2h-1zM389 229h1v1h-1zM389 362h1v1h-1zM389 507h1v2h-1zM389 518h1v2h-1zM390 79h1v2h-1zM390 90h1v2h-1zM390 509h1v3h-1zM391 87h1v3h-1zM391 227h1v1h-1zM391 364h1v1h-1zM391 512h1v3h-1zM392 85h1v2h-1zM392 94h1v1h-1zM392 515h1v2h-1zM393 83h1v2h-1zM393 92h1v2h-1zM393 226h1v1h-1zM393 365h1v1h-1zM393 517h1v1h-1zM394 81h1v2h-1zM394 90h1v2h-1zM395 88h1v2h-1zM395 224h1v1h-1zM395 366h1v1h-1zM395 502h1v1h-1zM396 86h1v2h-1zM396 503h1v2h-1zM397 84h1v2h-1zM397 223h1v1h-1zM397 368h1v1h-1zM397 505h1v2h-1zM398 83h1v1h-1zM398 507h1v2h-1zM399 98h1v1h-1zM399 221h1v1h-1zM399 369h1v1h-1zM399 500h1v2h-1zM399 509h1v2h-1zM400 96h1v2h-1zM400 502h1v2h-1zM400 511h1v2h-1zM401 94h1v2h-1zM401 220h1v1h-1zM401 371h1v1h-1zM401 504h1v2h-1zM401 513h1v2h-1zM402 92h1v2h-1zM402 499h1v1h-1zM402 506h1v2h-1zM403 91h1v1h-1zM403 99h1v2h-1zM403 218h1v1h-1zM403 372h1v1h-1zM403 500h1v2h-1zM403 508h1v2h-1zM404 89h1v2h-1zM404 97h1v2h-1zM404 502h1v2h-1zM404 510h1v2h-1zM405 87h1v2h-1zM405 95h1v2h-1zM405 217h1v1h-1zM405 373h1v1h-1zM405 504h1v2h-1zM405 512h1v1h-1zM406 93h1v2h-1zM406 497h1v1h-1zM406 506h1v2h-1zM407 91h1v2h-1zM407 100h1v2h-1zM407 215h1v1h-1zM407 375h1v1h-1zM407 498h1v2h-1zM407 508h1v2h-1zM408 89h1v2h-1zM408 98h1v2h-1zM408 500h1v2h-1zM408 510h1v1h-1zM409 88h1v1h-1zM409 96h1v2h-1zM409 213h1v1h-1zM409 376h1v1h-1zM409 502h1v2h-1zM410 95h1v1h-1zM410 504h1v2h-1zM411 93h1v2h-1zM411 102h1v2h-1zM411 212h1v1h-1zM411 378h1v1h-1zM411 506h1v2h-1zM412 91h1v2h-1zM412 100h1v2h-1zM412 493h1v1h-1zM412 508h1v1h-1zM413 90h1v1h-1zM413 98h1v2h-1zM413 210h1v1h-1zM413 379h1v1h-1zM413 494h1v2h-1zM414 97h1v1h-1zM414 496h1v2h-1zM415 95h1v2h-1zM415 209h1v1h-1zM415 380h1v1h-1zM415 498h1v1h-1zM416 93h1v2h-1zM416 491h1v1h-1zM416 499h1v2h-1zM417 92h1v1h-1zM417 108h1v1h-1zM417 207h1v1h-1zM417 382h1v1h-1zM417 492h1v2h-1zM417 501h1v2h-1zM418 106h1v2h-1zM418 494h1v2h-1zM418 503h1v2h-1zM419 104h1v2h-1zM419 206h1v1h-1zM419 383h1v1h-1zM419 489h1v1h-1zM419 496h1v1h-1zM420 102h1v2h-1zM420 110h1v1h-1zM420 490h1v2h-1zM420 497h1v2h-1zM421 101h1v1h-1zM421 108h1v2h-1zM421 204h1v1h-1zM421 385h1v1h-1zM421 492h1v1h-1zM421 499h1v2h-1zM422 99h1v2h-1zM422 106h1v2h-1zM422 487h1v1h-1zM422 493h1v2h-1zM422 501h1v2h-1zM423 97h1v2h-1zM423 104h1v2h-1zM423 203h1v1h-1zM423 386h1v1h-1zM423 488h1v2h-1zM423 495h1v2h-1zM424 96h1v1h-1zM424 103h1v1h-1zM424 110h1v2h-1zM424 490h1v1h-1zM424 497h1v1h-1zM425 101h1v2h-1zM425 109h1v1h-1zM425 201h1v1h-1zM425 388h1v1h-1zM425 491h1v1h-1zM425 498h1v2h-1zM426 99h1v2h-1zM426 108h1v1h-1zM426 492h1v2h-1zM426 500h1v1h-1zM427 98h1v1h-1zM427 106h1v2h-1zM427 114h1v1h-1zM427 199h1v1h-1zM427 389h1v1h-1zM427 494h1v1h-1zM428 105h1v1h-1zM428 112h1v2h-1zM428 495h1v1h-1zM429 104h1v1h-1zM429 111h1v1h-1zM429 198h1v1h-1zM429 390h1v1h-1zM429 482h1v1h-1zM429 496h1v2h-1zM430 102h1v2h-1zM430 109h1v2h-1zM430 483h1v2h-1zM431 101h1v1h-1zM431 107h1v2h-1zM431 196h1v1h-1zM431 392h1v1h-1zM431 485h1v1h-1zM432 106h1v1h-1zM432 480h1v1h-1zM432 486h1v1h-1zM433 104h1v2h-1zM433 119h1v1h-1zM433 195h1v1h-1zM433 393h1v1h-1zM433 481h1v2h-1zM433 487h1v2h-1zM434 103h1v1h-1zM434 117h1v2h-1zM434 483h1v1h-1zM434 489h1v1h-1zM435 116h1v1h-1zM435 193h1v1h-1zM435 395h1v1h-1zM435 478h1v1h-1zM435 484h1v1h-1zM435 490h1v1h-1zM436 115h1v1h-1zM436 121h1v1h-1zM436 479h1v1h-1zM436 485h1v2h-1zM436 491h1v2h-1zM437 113h1v2h-1zM437 119h1v2h-1zM437 192h1v1h-1zM437 396h1v1h-1zM437 480h1v1h-1zM437 487h1v1h-1zM438 112h1v1h-1zM438 118h1v1h-1zM438 475h1v1h-1zM438 481h1v1h-1zM438 488h1v1h-1zM439 111h1v1h-1zM439 117h1v1h-1zM439 124h1v1h-1zM439 190h1v1h-1zM439 397h1v1h-1zM439 476h1v1h-1zM439 482h1v1h-1zM439 489h1v2h-1zM440 109h1v2h-1zM440 115h1v2h-1zM440 123h1v1h-1zM440 477h1v2h-1zM440 483h1v2h-1zM441 108h1v1h-1zM441 114h1v1h-1zM441 121h1v2h-1zM441 189h1v1h-1zM441 399h1v1h-1zM441 479h1v1h-1zM441 485h1v1h-1zM442 113h1v1h-1zM442 120h1v1h-1zM442 126h1v1h-1zM442 480h1v1h-1zM442 486h1v1h-1zM443 111h1v2h-1zM443 119h1v1h-1zM443 125h1v1h-1zM443 187h1v1h-1zM443 400h1v1h-1zM443 481h1v1h-1zM443 487h1v1h-1zM444 118h1v1h-1zM444 123h1v2h-1zM444 470h1v1h-1zM444 482h1v1h-1zM445 117h1v1h-1zM445 122h1v1h-1zM445 185h1v1h-1zM445 402h1v1h-1zM445 471h1v1h-1zM445 483h1v2h-1zM446 115h1v2h-1zM446 121h1v1h-1zM446 472h1v2h-1zM446 485h1v1h-1zM447 114h1v1h-1zM447 120h1v1h-1zM447 184h1v1h-1zM447 403h1v1h-1zM447 468h1v1h-1zM447 474h1v1h-1zM448 119h1v1h-1zM448 131h1v1h-1zM448 469h1v1h-1zM448 475h1v1h-1zM449 117h1v2h-1zM449 130h1v1h-1zM449 182h1v1h-1zM449 404h1v1h-1zM449 470h1v1h-1zM449 476h1v1h-1zM450 116h1v1h-1zM450 129h1v1h-1zM450 465h1v1h-1zM450 471h1v1h-1zM450 477h1v1h-1zM451 128h1v1h-1zM451 134h1v1h-1zM451 181h1v1h-1zM451 406h1v1h-1zM451 466h1v1h-1zM451 472h1v1h-1zM451 478h1v2h-1zM452 126h1v2h-1zM452 133h1v1h-1zM452 467h1v1h-1zM452 473h1v2h-1zM452 480h1v1h-1zM453 125h1v1h-1zM453 132h1v1h-1zM453 407h1v1h-1zM453 462h1v1h-1zM453 468h1v1h-1zM453 475h1v1h-1zM454 124h1v1h-1zM454 131h1v1h-1zM454 136h1v1h-1zM454 463h1v1h-1zM454 469h1v1h-1zM454 476h1v1h-1zM455 123h1v1h-1zM455 129h1v2h-1zM455 135h1v1h-1zM455 409h1v1h-1zM455 464h1v1h-1zM455 470h1v1h-1zM455 477h1v1h-1zM456 122h1v1h-1zM456 128h1v1h-1zM456 134h1v1h-1zM456 465h1v1h-1zM456 471h1v1h-1zM456 478h1v1h-1zM457 121h1v1h-1zM457 127h1v1h-1zM457 133h1v1h-1zM457 139h1v1h-1zM457 410h1v1h-1zM457 466h1v1h-1zM457 472h1v1h-1zM458 126h1v1h-1zM458 132h1v1h-1zM458 138h1v1h-1zM458 467h1v1h-1zM458 473h1v1h-1zM459 125h1v1h-1zM459 131h1v1h-1zM459 137h1v1h-1zM459 457h1v1h-1zM459 468h1v1h-1zM459 474h1v1h-1zM460 124h1v1h-1zM460 130h1v1h-1zM460 136h1v1h-1zM460 458h1v1h-1zM460 469h1v1h-1zM461 129h1v1h-1zM461 134h1v2h-1zM461 459h1v1h-1zM461 470h1v1h-1zM462 128h1v1h-1zM462 133h1v1h-1zM462 145h1v1h-1zM462 454h1v1h-1zM462 460h1v1h-1zM462 471h1v1h-1zM463 127h1v1h-1zM463 132h1v1h-1zM463 144h1v1h-1zM463 455h1v1h-1zM463 461h1v1h-1zM463 472h1v1h-1zM464 131h1v1h-1zM464 143h1v1h-1zM464 451h1v1h-1zM464 456h1v1h-1zM465 130h1v1h-1zM465 142h1v1h-1zM465 148h1v1h-1zM465 452h1v1h-1zM465 457h1v1h-1zM466 129h1v1h-1zM466 141h1v1h-1zM466 147h1v1h-1zM466 453h1v1h-1zM466 458h1v1h-1zM466 463h1v1h-1zM467 140h1v1h-1zM467 146h1v1h-1zM467 448h1v1h-1zM467 454h1v1h-1zM467 459h1v1h-1zM467 464h1v1h-1zM468 139h1v1h-1zM468 145h1v1h-1zM468 151h1v1h-1zM468 449h1v1h-1zM468 455h1v1h-1zM468 460h1v1h-1zM468 465h1v1h-1zM469 138h1v1h-1zM469 144h1v1h-1zM469 150h1v1h-1zM469 450h1v1h-1zM469 461h1v1h-1zM469 466h1v1h-1zM470 137h1v1h-1zM470 143h1v1h-1zM470 149h1v1h-1zM470 154h1v1h-1zM470 451h1v1h-1zM470 462h1v1h-1zM471 136h1v1h-1zM471 142h1v1h-1zM471 148h1v1h-1zM471 153h1v1h-1zM471 452h1v1h-1zM471 457h1v1h-1zM471 463h1v1h-1zM472 135h1v1h-1zM472 141h1v1h-1zM472 147h1v1h-1zM472 442h1v1h-1zM472 458h1v1h-1zM473 140h1v1h-1zM473 443h1v1h-1zM473 459h1v1h-1zM474 139h1v1h-1zM474 151h1v1h-1zM474 439h1v1h-1zM474 454h1v1h-1zM474 460h1v1h-1zM475 145h1v1h-1zM475 150h1v1h-1zM475 160h1v1h-1zM475 440h1v1h-1zM475 455h1v1h-1zM476 144h1v1h-1zM476 149h1v1h-1zM476 159h1v1h-1zM476 445h1v1h-1zM476 456h1v1h-1zM477 143h1v1h-1zM477 148h1v1h-1zM477 436h1v1h-1zM477 446h1v1h-1zM477 457h1v1h-1zM478 142h1v1h-1zM478 163h1v1h-1zM478 442h1v1h-1zM478 447h1v1h-1zM479 157h1v1h-1zM479 162h1v1h-1zM479 433h1v1h-1zM479 443h1v1h-1zM479 448h1v1h-1zM480 146h1v1h-1zM480 156h1v1h-1zM480 161h1v1h-1zM480 166h1v1h-1zM480 438h1v1h-1zM480 444h1v1h-1zM481 155h1v1h-1zM481 160h1v1h-1zM481 439h1v1h-1zM481 445h1v1h-1zM482 154h1v1h-1zM482 159h1v1h-1zM482 169h1v1h-1zM482 435h1v1h-1zM482 450h1v1h-1zM483 164h1v1h-1zM483 436h1v1h-1zM484 163h1v1h-1zM484 427h1v1h-1zM484 441h1v1h-1zM484 447h1v1h-1zM485 152h1v1h-1zM485 157h1v1h-1zM485 167h1v1h-1zM485 442h1v1h-1zM486 156h1v1h-1zM486 166h1v1h-1zM486 438h1v1h-1zM487 155h1v1h-1zM487 161h1v1h-1zM487 176h1v1h-1zM487 429h1v1h-1zM487 439h1v1h-1zM488 160h1v1h-1zM488 420h1v1h-1zM489 164h1v1h-1zM489 179h1v1h-1zM489 425h1v1h-1zM490 163h1v1h-1zM490 174h1v1h-1zM490 417h1v1h-1zM490 426h1v1h-1zM490 441h1v1h-1zM491 173h1v1h-1zM491 182h1v1h-1zM492 177h1v1h-1zM492 432h1v1h-1zM493 186h1v1h-1zM493 423h1v1h-1zM493 428h1v1h-1zM494 171h1v1h-1zM494 429h1v1h-1zM495 170h1v1h-1zM495 420h1v1h-1zM495 434h1v1h-1zM496 179h1v1h-1zM497 174h1v1h-1zM497 192h1v1h-1zM497 431h1v1h-1zM498 183h1v1h-1zM498 403h1v1h-1zM499 196h1v1h-1zM499 413h1v1h-1zM500 172h1v1h-1zM500 399h1v1h-1zM500 427h1v1h-1zM501 409h1v1h-1zM502 203h1v1h-1zM502 424h1v1h-1zM504 392h1v1h-1zM505 402h1v1h-1zM506 210h1v1h-1zM506 417h1v1h-1zM507 385h1v1h-1zM508 186h1v1h-1zM508 214h1v1h-1zM508 413h1v1h-1zM509 217h1v1h-1zM512 193h1v1h-1zM513 229h1v1h-1zM515 398h1v1h-1zM520 387h1v1h-1zM522 216h1v1h-1zM523 379h1v1h-1zM524 375h1v1h-1zM526 228h1v1h-1zM529 359h1v1h-1z"/>
<path fill="#ff0000" d="M328 30h5v1h-5zM331 31h2v1h-2zM744 110h9v1h-9zM371 131h2v1h-2zM370 143h15v1h-15zM747 147h3v1h-3zM745 148h2v1h-2zM750 148h2v1h-2zM745 150h2v1h-2zM750 151h2v1h-2zM745 153h2v1h-2zM750 153h2v1h-2zM747 154h3v1h-3zM360 177h2v1h-2zM354 179h2v1h-2zM320 180h2v1h-2zM362 182h2v1h-2zM363 185h2v1h-2zM364 187h2v1h-2zM365 190h2v1h-2zM359 191h2v1h-2zM750 194h2v1h-2zM367 195h2v1h-2zM368 198h2v1h-2zM369 200h2v1h-2zM146 203h6v1h-6zM364 203h2v1h-2zM370 203h2v1h-2zM150 204h2v1h-2zM371 205h2v1h-2zM372 208h2v1h-2zM138 209h5v1h-5zM367 209h2v1h-2zM143 210h2v1h-2zM373 210h2v1h-2zM373 211h2v1h-2zM374 213h2v1h-2zM369 215h2v1h-2zM375 215h2v1h-2zM375 216h2v1h-2zM376 218h2v1h-2zM138 219h5v1h-5zM376 219h2v1h-2zM377 220h2v1h-2zM372 221h2v1h-2zM377 221h2v1h-2zM378 223h2v1h-2zM378 224h2v1h-2zM374 225h2v1h-2zM379 225h2v1h-2zM379 226h2v1h-2zM374 227h3v1h-3zM380 228h2v1h-2zM380 229h2v1h-2zM380 230h3v1h-3zM381 231h2v1h-2zM381 232h2v1h-2zM377 233h2v1h-2zM382 233h3v1h-3zM382 234h2v1h-2zM383 235h2v1h-2zM383 236h2v1h-2zM747 236h3v1h-3zM383 237h2v1h-2zM745 237h2v1h-2zM750 237h2v1h-2zM384 238h2v1h-2zM380 239h2v1h-2zM384 239h2v1h-2zM385 241h2v1h-2zM385 242h2v1h-2zM386 243h2v1h-2zM745 243h2v1h-2zM750 243h2v1h-2zM386 244h2v1h-2zM747 244h3v1h-3zM382 245h2v1h-2zM386 245h2v1h-2zM387 246h2v1h-2zM387 247h2v1h-2zM388 248h2v1h-2zM388 249h2v1h-2zM388 250h2v1h-2zM385 251h2v1h-2zM389 251h2v1h-2zM389 252h2v1h-2zM390 254h2v1h-2zM390 255h2v1h-2zM391 256h2v1h-2zM387 257h2v1h-2zM391 257h2v1h-2zM392 259h2v1h-2zM392 260h2v1h-2zM393 261h2v1h-2zM393 262h2v1h-2zM390 263h2v1h-2zM394 264h2v1h-2zM394 265h2v1h-2zM395 267h2v1h-2zM396 269h2v1h-2zM396 270h2v1h-2zM397 272h2v1h-2zM398 274h2v1h-2zM395 275h2v1h-2zM398 275h2v1h-2zM750 276h3v1h-3zM399 277h2v1h-2zM751 277h2v1h-2zM398 279h2v1h-2zM746 279h2v1h-2zM400 280h2v1h-2zM399 281h2v1h-2zM401 282h2v1h-2zM400 283h2v1h-2zM746 284h2v1h-2zM401 285h3v1h-3zM400 287h3v1h-3zM745 287h2v1h-2zM403 288h2v1h-2zM402 289h2v1h-2zM404 290h2v1h-2zM403 291h2v1h-2zM404 293h3v1h-3zM745 293h8v1h-8zM405 295h3v1h-3zM407 298h2v1h-2zM408 303h3v1h-3zM411 308h2v1h-2zM412 313h3v1h-3zM413 315h3v1h-3zM414 320h2v1h-2zM415 321h2v1h-2zM415 323h4v1h-4zM417 325h3v1h-3zM416 326h2v1h-2zM418 327h3v1h-3zM419 329h3v1h-3zM421 331h2v1h-2zM419 332h2v1h-2zM420 333h3v1h-3zM420 335h4v1h-4zM422 337h3v1h-3zM421 338h2v1h-2zM424 339h2v1h-2zM422 341h2v1h-2zM428 349h2v1h-2zM426 350h2v1h-2zM54 399h3v1h-3zM64 399h3v1h-3zM413 428h5v1h-5zM411 429h2v1h-2zM418 429h2v1h-2zM266 433h2v1h-2zM262 435h2v1h-2zM411 443h2v1h-2zM418 443h2v1h-2zM413 444h5v1h-5zM510 444h5v1h-5zM52 401h1v3h-1zM53 400h1v1h-1zM53 404h1v1h-1zM54 405h1v1h-1zM57 400h1v1h-1zM58 401h1v3h-1zM59 404h1v4h-1zM60 408h1v8h-1zM61 404h1v4h-1zM62 401h1v3h-1zM63 400h1v1h-1zM66 405h1v1h-1zM67 400h1v1h-1zM67 404h1v1h-1zM68 401h1v3h-1zM135 212h1v5h-1zM136 211h1v1h-1zM136 217h1v1h-1zM137 210h1v1h-1zM137 218h1v1h-1zM143 218h1v1h-1zM144 211h1v1h-1zM144 217h1v1h-1zM145 209h1v1h-1zM145 212h1v5h-1zM146 208h1v1h-1zM147 207h1v1h-1zM148 206h1v1h-1zM149 205h1v1h-1zM149 299h1v1h-1zM151 205h1v4h-1zM157 297h1v1h-1zM159 295h1v1h-1zM161 293h1v1h-1zM163 291h1v1h-1zM165 289h1v1h-1zM166 287h1v1h-1zM168 285h1v1h-1zM169 225h1v1h-1zM170 283h1v1h-1zM172 281h1v1h-1zM174 228h1v1h-1zM174 279h1v1h-1zM176 277h1v1h-1zM177 227h1v1h-1zM178 275h1v1h-1zM180 226h1v1h-1zM180 273h1v1h-1zM182 271h1v1h-1zM183 225h1v1h-1zM184 269h1v1h-1zM186 224h1v1h-1zM186 267h1v1h-1zM188 265h1v1h-1zM189 223h1v1h-1zM189 263h1v1h-1zM191 261h1v1h-1zM192 222h1v1h-1zM193 259h1v1h-1zM195 221h1v1h-1zM195 257h1v1h-1zM197 255h1v1h-1zM198 220h1v1h-1zM199 253h1v1h-1zM201 219h1v1h-1zM201 251h1v1h-1zM203 249h1v1h-1zM204 218h1v1h-1zM205 247h1v1h-1zM207 217h1v1h-1zM207 245h1v1h-1zM209 243h1v1h-1zM210 216h1v1h-1zM211 241h1v1h-1zM212 239h1v1h-1zM213 215h1v1h-1zM214 237h1v1h-1zM216 214h1v1h-1zM216 235h1v1h-1zM218 233h1v1h-1zM219 213h1v1h-1zM220 231h1v1h-1zM222 212h1v1h-1zM222 229h1v1h-1zM224 227h1v1h-1zM225 211h1v1h-1zM226 225h1v1h-1zM228 210h1v1h-1zM228 223h1v1h-1zM230 221h1v1h-1zM231 209h1v1h-1zM232 219h1v1h-1zM234 208h1v1h-1zM234 217h1v1h-1zM235 215h1v1h-1zM237 207h1v1h-1zM237 213h1v1h-1zM239 211h1v1h-1zM240 206h1v1h-1zM241 209h1v1h-1zM243 205h1v1h-1zM243 207h1v1h-1zM245 205h1v1h-1zM246 204h1v1h-1zM247 203h1v1h-1zM249 201h1v1h-1zM249 203h1v1h-1zM251 199h1v1h-1zM252 202h1v1h-1zM253 197h1v1h-1zM255 195h1v1h-1zM255 201h1v1h-1zM257 193h1v1h-1zM258 191h1v1h-1zM258 200h1v1h-1zM259 437h1v1h-1zM260 189h1v1h-1zM261 199h1v1h-1zM262 187h1v1h-1zM264 185h1v1h-1zM264 198h1v1h-1zM266 183h1v1h-1zM267 198h1v1h-1zM268 181h1v1h-1zM270 179h1v1h-1zM270 197h1v1h-1zM270 432h1v1h-1zM271 431h1v1h-1zM272 177h1v1h-1zM273 196h1v1h-1zM274 175h1v1h-1zM274 430h1v1h-1zM275 429h1v1h-1zM276 173h1v1h-1zM276 195h1v1h-1zM278 171h1v1h-1zM278 428h1v1h-1zM279 194h1v1h-1zM279 427h1v1h-1zM280 169h1v1h-1zM281 167h1v1h-1zM282 193h1v1h-1zM282 426h1v1h-1zM283 165h1v1h-1zM283 425h1v1h-1zM285 163h1v1h-1zM285 192h1v1h-1zM286 424h1v1h-1zM287 161h1v1h-1zM287 423h1v1h-1zM288 191h1v1h-1zM289 159h1v1h-1zM290 422h1v1h-1zM291 157h1v1h-1zM291 190h1v1h-1zM291 421h1v1h-1zM292 156h1v1h-1zM294 158h1v1h-1zM294 189h1v1h-1zM294 421h1v1h-1zM295 419h1v1h-1zM296 159h1v1h-1zM297 188h1v1h-1zM298 161h1v1h-1zM298 419h1v1h-1zM299 418h1v1h-1zM300 163h1v1h-1zM300 187h1v1h-1zM302 164h1v1h-1zM302 417h1v1h-1zM303 186h1v1h-1zM303 416h1v1h-1zM304 166h1v1h-1zM306 168h1v1h-1zM306 185h1v1h-1zM306 415h1v1h-1zM307 414h1v1h-1zM308 169h1v1h-1zM309 184h1v1h-1zM310 171h1v1h-1zM310 413h1v1h-1zM311 412h1v1h-1zM312 173h1v1h-1zM312 183h1v1h-1zM314 174h1v1h-1zM314 412h1v1h-1zM315 182h1v1h-1zM315 410h1v1h-1zM316 46h1v1h-1zM316 176h1v1h-1zM317 45h1v1h-1zM318 36h1v1h-1zM318 44h1v1h-1zM318 178h1v1h-1zM318 181h1v1h-1zM318 410h1v1h-1zM319 37h1v1h-1zM319 43h1v1h-1zM319 408h1v1h-1zM320 38h1v1h-1zM320 42h1v1h-1zM321 39h1v1h-1zM321 41h1v1h-1zM322 40h1v1h-1zM322 181h1v1h-1zM322 408h1v1h-1zM323 39h1v1h-1zM323 41h1v1h-1zM323 406h1v1h-1zM324 38h1v1h-1zM324 42h1v1h-1zM324 179h1v1h-1zM324 183h1v1h-1zM325 37h1v1h-1zM325 43h1v1h-1zM326 36h1v1h-1zM326 44h1v1h-1zM326 185h1v1h-1zM326 406h1v1h-1zM327 35h1v1h-1zM327 178h1v1h-1zM327 404h1v1h-1zM328 34h1v1h-1zM328 186h1v1h-1zM329 33h1v1h-1zM330 32h1v1h-1zM330 177h1v1h-1zM330 188h1v1h-1zM330 404h1v1h-1zM331 402h1v1h-1zM332 32h1v3h-1zM332 190h1v1h-1zM333 176h1v1h-1zM334 191h1v1h-1zM334 403h1v1h-1zM335 401h1v1h-1zM336 175h1v1h-1zM336 193h1v1h-1zM338 401h1v1h-1zM339 174h1v1h-1zM339 399h1v1h-1zM340 196h1v1h-1zM342 173h1v1h-1zM342 198h1v1h-1zM342 399h1v1h-1zM343 397h1v1h-1zM344 200h1v1h-1zM345 172h1v1h-1zM346 201h1v1h-1zM346 397h1v1h-1zM347 395h1v1h-1zM348 171h1v1h-1zM348 203h1v1h-1zM350 169h1v1h-1zM350 205h1v1h-1zM350 395h1v1h-1zM351 170h1v2h-1zM351 393h1v1h-1zM352 173h1v1h-1zM352 206h1v1h-1zM353 175h1v2h-1zM354 169h1v1h-1zM354 177h1v1h-1zM354 208h1v1h-1zM354 393h1v1h-1zM355 181h1v1h-1zM355 391h1v1h-1zM356 182h1v2h-1zM357 169h1v1h-1zM357 185h1v1h-1zM358 170h1v2h-1zM358 187h1v1h-1zM358 211h1v1h-1zM358 392h1v1h-1zM359 172h1v3h-1zM359 189h1v1h-1zM359 389h1v1h-1zM360 162h1v1h-1zM360 175h1v2h-1zM360 213h1v1h-1zM361 178h1v2h-1zM361 193h1v2h-1zM362 180h1v2h-1zM362 197h1v1h-1zM362 215h1v1h-1zM362 390h1v1h-1zM363 183h1v2h-1zM363 199h1v2h-1zM363 387h1v1h-1zM364 186h1v1h-1zM364 201h1v1h-1zM365 188h1v2h-1zM366 191h1v2h-1zM366 205h1v2h-1zM366 218h1v1h-1zM366 388h1v1h-1zM367 193h1v2h-1zM367 207h1v1h-1zM367 385h1v1h-1zM368 196h1v2h-1zM368 211h1v2h-1zM368 220h1v1h-1zM369 199h1v1h-1zM369 213h1v1h-1zM370 142h1v1h-1zM370 201h1v2h-1zM370 222h1v1h-1zM370 386h1v1h-1zM371 140h1v2h-1zM371 204h1v1h-1zM371 217h1v2h-1zM372 138h1v2h-1zM372 206h1v2h-1zM372 219h1v1h-1zM372 223h1v1h-1zM373 132h1v1h-1zM373 136h1v2h-1zM373 209h1v1h-1zM373 224h1v1h-1zM374 133h1v3h-1zM374 212h1v1h-1zM374 223h1v1h-1zM374 384h1v1h-1zM375 214h1v1h-1zM375 382h1v1h-1zM376 217h1v1h-1zM376 229h1v2h-1zM377 231h1v1h-1zM378 222h1v1h-1zM378 228h1v1h-1zM378 236h1v1h-1zM378 383h1v1h-1zM379 235h1v1h-1zM379 380h1v1h-1zM380 131h1v12h-1zM380 144h1v2h-1zM380 227h1v1h-1zM380 237h1v1h-1zM381 130h1v1h-1zM381 241h1v2h-1zM382 129h1v1h-1zM382 243h1v1h-1zM382 381h1v1h-1zM383 248h1v1h-1zM383 378h1v1h-1zM384 247h1v1h-1zM385 240h1v1h-1zM385 249h1v1h-1zM386 235h1v1h-1zM386 254h1v1h-1zM386 379h1v1h-1zM387 253h1v1h-1zM387 376h1v1h-1zM388 237h1v1h-1zM388 255h1v1h-1zM388 260h1v1h-1zM389 253h1v1h-1zM389 259h1v1h-1zM390 238h1v1h-1zM390 261h1v1h-1zM390 377h1v1h-1zM391 253h1v1h-1zM391 258h1v1h-1zM391 266h1v1h-1zM391 374h1v1h-1zM392 240h1v1h-1zM392 265h1v1h-1zM392 269h1v1h-1zM393 258h1v1h-1zM393 263h1v1h-1zM393 267h1v1h-1zM393 272h1v1h-1zM394 242h1v1h-1zM394 266h1v1h-1zM394 269h1v1h-1zM394 271h1v1h-1zM394 375h1v1h-1zM395 263h1v1h-1zM395 268h1v1h-1zM395 273h1v1h-1zM395 372h1v1h-1zM396 243h1v1h-1zM396 266h1v1h-1zM396 271h1v1h-1zM396 278h1v1h-1zM396 413h1v1h-1zM397 268h1v1h-1zM397 273h1v1h-1zM397 277h1v1h-1zM397 281h1v1h-1zM398 245h1v1h-1zM398 271h1v1h-1zM398 276h1v1h-1zM398 284h1v1h-1zM398 374h1v1h-1zM399 273h1v1h-1zM399 278h1v1h-1zM399 370h1v1h-1zM400 247h1v1h-1zM400 276h1v1h-1zM401 278h1v2h-1zM401 284h1v1h-1zM401 290h1v1h-1zM402 248h1v1h-1zM402 281h1v1h-1zM402 286h1v1h-1zM402 293h1v1h-1zM402 372h1v1h-1zM403 283h1v2h-1zM403 368h1v1h-1zM404 250h1v1h-1zM404 286h1v2h-1zM404 292h1v1h-1zM404 296h1v1h-1zM405 289h1v1h-1zM405 294h1v1h-1zM405 299h1v1h-1zM406 252h1v1h-1zM406 291h1v2h-1zM406 296h1v2h-1zM406 302h1v1h-1zM406 370h1v1h-1zM407 294h1v1h-1zM407 299h1v2h-1zM407 305h1v1h-1zM407 366h1v1h-1zM407 434h1v5h-1zM408 253h1v1h-1zM408 296h1v2h-1zM408 301h1v2h-1zM408 432h1v2h-1zM408 439h1v2h-1zM409 299h1v2h-1zM409 304h1v2h-1zM409 308h1v1h-1zM409 431h1v1h-1zM409 441h1v1h-1zM410 255h1v1h-1zM410 301h1v2h-1zM410 306h1v2h-1zM410 311h1v1h-1zM410 368h1v1h-1zM410 430h1v1h-1zM410 442h1v1h-1zM411 304h1v2h-1zM411 309h1v2h-1zM411 314h1v1h-1zM411 364h1v1h-1zM412 257h1v1h-1zM412 306h1v2h-1zM412 311h1v2h-1zM412 317h1v1h-1zM413 309h1v2h-1zM413 314h1v1h-1zM414 258h1v1h-1zM414 311h1v2h-1zM414 316h1v3h-1zM414 366h1v1h-1zM415 314h1v1h-1zM415 319h1v1h-1zM415 363h1v1h-1zM415 436h1v1h-1zM416 260h1v1h-1zM416 316h1v3h-1zM416 322h1v1h-1zM417 319h1v2h-1zM417 324h1v1h-1zM417 329h1v1h-1zM418 262h1v1h-1zM418 321h1v2h-1zM418 328h1v1h-1zM418 364h1v1h-1zM419 324h1v1h-1zM419 330h1v2h-1zM419 361h1v1h-1zM420 264h1v1h-1zM420 326h1v1h-1zM420 328h1v1h-1zM420 334h1v1h-1zM420 430h1v1h-1zM420 442h1v1h-1zM421 330h1v1h-1zM421 336h1v1h-1zM421 431h1v1h-1zM421 441h1v1h-1zM422 265h1v1h-1zM422 332h1v1h-1zM422 339h1v1h-1zM422 363h1v1h-1zM422 432h1v2h-1zM422 439h1v2h-1zM423 334h1v1h-1zM423 336h1v1h-1zM423 340h1v1h-1zM423 359h1v1h-1zM423 434h1v5h-1zM424 267h1v1h-1zM424 338h1v1h-1zM424 342h1v3h-1zM425 340h1v2h-1zM425 345h1v3h-1zM426 269h1v1h-1zM426 342h1v2h-1zM426 348h1v2h-1zM426 361h1v1h-1zM427 344h1v3h-1zM427 351h1v2h-1zM428 270h1v1h-1zM428 347h1v2h-1zM428 353h1v3h-1zM429 350h1v2h-1zM429 356h1v2h-1zM430 272h1v1h-1zM430 352h1v2h-1zM431 354h1v1h-1zM432 274h1v1h-1zM434 275h1v1h-1zM436 277h1v1h-1zM438 279h1v1h-1zM504 456h1v1h-1zM505 457h1v1h-1zM506 448h1v5h-1zM506 458h1v1h-1zM507 447h1v1h-1zM507 453h1v1h-1zM507 457h1v1h-1zM508 446h1v1h-1zM508 454h1v3h-1zM509 445h1v1h-1zM515 445h1v1h-1zM516 446h1v1h-1zM516 454h1v3h-1zM517 447h1v1h-1zM517 453h1v1h-1zM517 457h1v1h-1zM518 448h1v5h-1zM518 458h1v1h-1zM519 459h1v1h-1zM520 460h1v1h-1zM744 106h1v1h-1zM744 114h1v1h-1zM744 149h1v1h-1zM744 151h1v2h-1zM744 186h1v1h-1zM744 239h1v3h-1zM744 281h1v2h-1zM745 107h1v1h-1zM745 113h1v1h-1zM745 187h1v7h-1zM745 238h1v1h-1zM745 242h1v1h-1zM745 280h1v1h-1zM745 283h1v1h-1zM745 292h1v1h-1zM746 108h1v2h-1zM746 111h1v2h-1zM746 186h1v1h-1zM746 290h1v2h-1zM747 151h1v2h-1zM747 187h1v7h-1zM747 288h1v2h-1zM748 186h1v1h-1zM748 240h1v1h-1zM748 280h1v1h-1zM748 283h1v1h-1zM749 149h1v2h-1zM749 187h1v7h-1zM749 279h1v1h-1zM749 281h1v2h-1zM750 108h1v2h-1zM750 111h1v2h-1zM750 278h1v1h-1zM750 287h1v6h-1zM750 294h1v1h-1zM751 107h1v1h-1zM751 113h1v1h-1zM751 238h1v1h-1zM751 242h1v1h-1zM751 286h1v1h-1zM752 106h1v1h-1zM752 114h1v1h-1zM752 149h1v2h-1zM752 152h1v1h-1zM752 192h1v2h-1zM752 239h1v3h-1zM752 278h1v1h-1z"/>
<path fill="#ffff00" d="M195 52h3v1h-3zM184 53h2v1h-2zM195 58h3v1h-3zM745 116h2v1h-2zM750 116h2v1h-2zM747 156h3v1h-3zM750 196h3v1h-3zM751 197h2v1h-2zM745 297h5v1h-5zM749 299h2v1h-2zM747 300h2v1h-2zM565 319h2v1h-2zM562 321h2v1h-2zM241 465h9v1h-9zM249 469h3v1h-3zM245 471h3v1h-3zM142 507h2v1h-2zM149 507h2v1h-2zM144 508h5v1h-5zM142 509h2v1h-2zM149 509h2v1h-2zM142 519h2v1h-2zM149 519h2v1h-2zM144 520h5v1h-5zM140 504h1v1h-1zM140 512h1v5h-1zM141 505h1v2h-1zM141 510h1v2h-1zM141 517h1v2h-1zM151 505h1v2h-1zM151 510h1v2h-1zM151 517h1v2h-1zM152 504h1v1h-1zM152 512h1v5h-1zM183 54h1v1h-1zM185 52h1v1h-1zM185 54h1v7h-1zM186 61h1v1h-1zM187 62h1v5h-1zM188 61h1v1h-1zM189 56h1v5h-1zM190 55h1v1h-1zM191 52h1v3h-1zM192 55h1v1h-1zM193 54h1v1h-1zM193 56h1v1h-1zM194 53h1v1h-1zM194 57h1v1h-1zM196 59h1v1h-1zM197 60h1v1h-1zM197 68h1v1h-1zM198 53h1v1h-1zM198 57h1v1h-1zM198 61h1v1h-1zM198 67h1v1h-1zM199 54h1v3h-1zM199 62h1v5h-1zM245 463h1v2h-1zM245 466h1v5h-1zM245 472h1v6h-1zM248 470h1v1h-1zM251 475h1v3h-1zM252 470h1v1h-1zM252 474h1v1h-1zM252 478h1v1h-1zM253 471h1v3h-1zM253 479h1v1h-1zM256 442h1v1h-1zM292 150h1v1h-1zM349 164h1v1h-1zM351 165h1v1h-1zM353 166h1v1h-1zM355 167h1v1h-1zM430 357h1v3h-1zM431 355h1v2h-1zM552 316h1v1h-1zM553 317h1v1h-1zM554 318h1v13h-1zM555 317h1v1h-1zM556 316h1v1h-1zM557 317h1v1h-1zM558 318h1v13h-1zM559 317h1v1h-1zM560 316h1v1h-1zM561 317h1v1h-1zM562 318h1v3h-1zM562 322h1v7h-1zM562 332h1v1h-1zM563 329h1v1h-1zM563 331h1v1h-1zM564 320h1v1h-1zM564 330h1v1h-1zM565 329h1v1h-1zM565 331h1v1h-1zM566 318h1v1h-1zM566 320h1v9h-1zM566 332h1v1h-1zM744 117h1v2h-1zM744 162h1v1h-1zM744 204h1v1h-1zM745 119h1v1h-1zM745 158h1v3h-1zM745 163h1v1h-1zM745 199h1v1h-1zM745 203h1v1h-1zM746 157h1v1h-1zM746 161h1v2h-1zM746 200h1v1h-1zM746 202h1v1h-1zM747 117h1v3h-1zM747 201h1v1h-1zM747 296h1v1h-1zM747 298h1v2h-1zM747 301h1v3h-1zM748 120h1v5h-1zM748 200h1v1h-1zM748 202h1v1h-1zM749 117h1v3h-1zM749 199h1v1h-1zM749 203h1v1h-1zM750 157h1v1h-1zM750 161h1v2h-1zM750 198h1v1h-1zM750 302h1v2h-1zM751 119h1v1h-1zM751 158h1v3h-1zM751 163h1v1h-1zM751 300h1v2h-1zM751 304h1v1h-1zM752 117h1v2h-1zM752 164h1v1h-1zM752 198h1v1h-1z"/>
<path fill="#00ff00" d="M747 128h3v1h-3zM747 134h3v1h-3zM81 139h2v1h-2zM87 139h2v1h-2zM84 143h2v1h-2zM90 143h2v1h-2zM81 149h2v1h-2zM87 149h2v1h-2zM84 153h2v1h-2zM90 153h2v1h-2zM299 167h2v1h-2zM749 168h3v1h-3zM306 177h2v1h-2zM310 183h2v1h-2zM313 187h2v1h-2zM536 187h5v1h-5zM314 189h2v1h-2zM317 193h2v1h-2zM530 193h7v1h-7zM540 193h7v1h-7zM320 197h2v1h-2zM530 197h17v1h-17zM321 199h2v1h-2zM324 203h2v1h-2zM325 205h2v1h-2zM750 206h2v1h-2zM327 207h2v1h-2zM744 207h2v1h-2zM748 207h2v1h-2zM328 209h2v1h-2zM750 209h2v1h-2zM329 211h2v1h-2zM332 215h2v1h-2zM335 219h2v1h-2zM336 221h2v1h-2zM338 223h2v1h-2zM339 225h2v1h-2zM342 229h2v1h-2zM360 230h2v1h-2zM343 231h2v1h-2zM360 233h2v1h-2zM346 235h2v1h-2zM465 238h9v1h-9zM361 239h2v1h-2zM350 241h2v1h-2zM468 244h3v1h-3zM353 245h2v1h-2zM362 245h2v1h-2zM362 248h2v1h-2zM468 248h3v1h-3zM357 251h2v1h-2zM747 257h3v1h-3zM364 259h2v1h-2zM747 261h3v1h-3zM365 263h3v1h-3zM746 263h5v1h-5zM747 266h3v1h-3zM370 267h2v1h-2zM747 270h3v1h-3zM746 272h5v1h-5zM156 300h2v1h-2zM158 301h2v1h-2zM160 302h2v1h-2zM163 304h2v1h-2zM165 305h2v1h-2zM167 306h2v1h-2zM169 307h2v1h-2zM172 309h2v1h-2zM746 309h5v1h-5zM174 310h2v1h-2zM176 311h2v1h-2zM747 312h3v1h-3zM179 313h2v1h-2zM181 314h2v1h-2zM183 315h2v1h-2zM185 316h2v1h-2zM188 318h2v1h-2zM190 319h2v1h-2zM192 320h2v1h-2zM195 322h2v1h-2zM197 323h2v1h-2zM199 324h2v1h-2zM202 326h2v1h-2zM204 327h2v1h-2zM206 328h2v1h-2zM208 329h2v1h-2zM211 331h2v1h-2zM213 332h2v1h-2zM215 333h2v1h-2zM381 333h2v1h-2zM218 335h2v1h-2zM220 336h2v1h-2zM378 336h2v1h-2zM222 337h2v1h-2zM224 338h2v1h-2zM227 340h2v1h-2zM229 341h2v1h-2zM231 342h2v1h-2zM234 344h2v1h-2zM236 345h2v1h-2zM238 346h2v1h-2zM241 348h2v1h-2zM243 349h2v1h-2zM245 350h2v1h-2zM247 351h2v1h-2zM250 353h2v1h-2zM252 354h2v1h-2zM254 355h2v1h-2zM257 357h2v1h-2zM259 358h2v1h-2zM261 359h2v1h-2zM464 359h5v1h-5zM264 361h2v1h-2zM266 362h2v1h-2zM268 363h2v1h-2zM384 363h2v1h-2zM270 364h2v1h-2zM273 366h2v1h-2zM275 367h2v1h-2zM464 367h5v1h-5zM277 368h2v1h-2zM385 369h2v1h-2zM280 370h2v1h-2zM282 371h2v1h-2zM462 371h9v1h-9zM284 372h2v1h-2zM386 372h2v1h-2zM286 373h2v1h-2zM289 375h2v1h-2zM386 375h2v1h-2zM291 376h2v1h-2zM293 377h2v1h-2zM387 378h2v1h-2zM296 379h2v1h-2zM298 380h2v1h-2zM300 381h2v1h-2zM387 381h2v1h-2zM303 383h2v1h-2zM305 384h2v1h-2zM388 384h2v1h-2zM307 385h2v1h-2zM309 386h2v1h-2zM388 387h2v1h-2zM312 388h2v1h-2zM314 389h2v1h-2zM316 390h2v1h-2zM319 392h2v1h-2zM321 393h2v1h-2zM389 393h2v1h-2zM323 394h2v1h-2zM325 395h2v1h-2zM328 397h2v1h-2zM330 398h2v1h-2zM332 399h2v1h-2zM390 399h2v1h-2zM337 402h2v1h-2zM339 403h2v1h-2zM342 405h2v1h-2zM391 405h2v1h-2zM344 406h2v1h-2zM346 407h2v1h-2zM348 408h2v1h-2zM351 410h2v1h-2zM353 411h2v1h-2zM355 412h2v1h-2zM358 414h2v1h-2zM362 416h2v1h-2zM364 417h2v1h-2zM367 419h2v1h-2zM369 420h2v1h-2zM371 421h2v1h-2zM389 445h5v1h-5zM389 453h5v1h-5zM387 457h9v1h-9zM270 554h11v1h-11zM270 566h11v1h-11zM78 144h1v1h-1zM78 154h1v1h-1zM79 143h1v1h-1zM79 153h1v1h-1zM80 140h1v3h-1zM80 150h1v3h-1zM82 138h1v1h-1zM82 140h1v1h-1zM82 148h1v1h-1zM82 150h1v1h-1zM83 141h1v1h-1zM83 151h1v1h-1zM84 142h1v1h-1zM84 144h1v1h-1zM84 152h1v1h-1zM84 154h1v1h-1zM86 140h1v3h-1zM86 150h1v3h-1zM88 138h1v1h-1zM88 140h1v1h-1zM88 148h1v1h-1zM88 150h1v1h-1zM89 141h1v1h-1zM89 151h1v1h-1zM90 142h1v1h-1zM90 144h1v1h-1zM90 152h1v1h-1zM90 154h1v1h-1zM92 140h1v3h-1zM92 150h1v3h-1zM93 139h1v1h-1zM93 149h1v1h-1zM94 138h1v1h-1zM94 148h1v1h-1zM155 299h1v1h-1zM156 298h1v1h-1zM159 296h1v1h-1zM162 294h1v1h-1zM162 303h1v1h-1zM165 293h1v1h-1zM168 291h1v1h-1zM171 289h1v1h-1zM171 308h1v1h-1zM174 287h1v1h-1zM177 285h1v1h-1zM178 312h1v1h-1zM180 283h1v1h-1zM183 281h1v1h-1zM186 279h1v1h-1zM187 317h1v1h-1zM189 277h1v1h-1zM192 275h1v1h-1zM194 321h1v1h-1zM195 273h1v1h-1zM198 271h1v1h-1zM201 269h1v1h-1zM201 325h1v1h-1zM204 267h1v1h-1zM207 265h1v1h-1zM210 263h1v1h-1zM210 330h1v1h-1zM213 261h1v1h-1zM216 259h1v1h-1zM217 334h1v1h-1zM219 257h1v1h-1zM222 256h1v1h-1zM225 254h1v1h-1zM226 339h1v1h-1zM228 252h1v1h-1zM231 250h1v1h-1zM233 343h1v1h-1zM234 248h1v1h-1zM237 246h1v1h-1zM240 244h1v1h-1zM240 347h1v1h-1zM243 242h1v1h-1zM246 240h1v1h-1zM249 238h1v1h-1zM249 352h1v1h-1zM252 236h1v1h-1zM255 234h1v1h-1zM256 356h1v1h-1zM258 232h1v1h-1zM261 230h1v1h-1zM262 433h1v2h-1zM263 360h1v1h-1zM264 228h1v1h-1zM266 429h1v2h-1zM267 226h1v1h-1zM268 552h1v1h-1zM268 568h1v1h-1zM269 425h1v1h-1zM269 553h1v1h-1zM269 567h1v1h-1zM270 224h1v1h-1zM270 427h1v1h-1zM272 365h1v1h-1zM272 555h1v11h-1zM273 222h1v1h-1zM273 421h1v1h-1zM274 424h1v1h-1zM276 221h1v1h-1zM277 417h1v1h-1zM278 420h1v1h-1zM278 555h1v11h-1zM279 219h1v1h-1zM279 369h1v1h-1zM281 413h1v1h-1zM281 553h1v1h-1zM281 567h1v1h-1zM282 217h1v1h-1zM282 417h1v1h-1zM282 552h1v1h-1zM282 568h1v1h-1zM285 215h1v1h-1zM285 409h1v1h-1zM286 413h1v1h-1zM288 213h1v1h-1zM288 374h1v1h-1zM289 405h1v1h-1zM290 410h1v1h-1zM291 211h1v1h-1zM292 401h1v1h-1zM293 157h1v1h-1zM294 159h1v1h-1zM294 209h1v1h-1zM294 407h1v1h-1zM295 161h1v1h-1zM295 378h1v1h-1zM296 397h1v1h-1zM297 163h1v1h-1zM297 207h1v1h-1zM298 165h1v1h-1zM298 403h1v1h-1zM300 205h1v1h-1zM300 393h1v1h-1zM301 169h1v1h-1zM302 171h1v1h-1zM302 382h1v1h-1zM302 400h1v1h-1zM303 203h1v1h-1zM304 173h1v1h-1zM304 389h1v1h-1zM305 175h1v1h-1zM306 201h1v1h-1zM306 397h1v1h-1zM308 179h1v1h-1zM309 181h1v1h-1zM309 199h1v1h-1zM310 393h1v1h-1zM311 387h1v1h-1zM312 185h1v1h-1zM312 197h1v1h-1zM312 381h1v1h-1zM314 390h1v1h-1zM315 195h1v1h-1zM315 377h1v1h-1zM316 191h1v1h-1zM318 386h1v1h-1zM318 391h1v1h-1zM319 195h1v1h-1zM319 373h1v1h-1zM321 191h1v1h-1zM322 383h1v1h-1zM323 201h1v1h-1zM323 369h1v1h-1zM324 189h1v1h-1zM326 380h1v1h-1zM327 187h1v1h-1zM327 365h1v1h-1zM327 396h1v1h-1zM330 186h1v1h-1zM330 376h1v1h-1zM331 213h1v1h-1zM331 361h1v1h-1zM333 184h1v1h-1zM333 217h1v1h-1zM334 373h1v1h-1zM334 400h1v1h-1zM335 217h1v1h-1zM335 357h1v1h-1zM336 182h1v1h-1zM336 401h1v1h-1zM338 353h1v1h-1zM338 370h1v1h-1zM339 180h1v1h-1zM340 227h1v1h-1zM341 404h1v1h-1zM342 178h1v1h-1zM342 227h1v1h-1zM342 349h1v1h-1zM342 366h1v1h-1zM344 233h1v1h-1zM345 176h1v1h-1zM346 233h1v1h-1zM346 345h1v1h-1zM346 363h1v1h-1zM347 237h1v1h-1zM348 164h1v3h-1zM348 174h1v1h-1zM348 239h1v1h-1zM349 167h1v6h-1zM349 237h1v1h-1zM350 173h1v5h-1zM350 239h1v1h-1zM350 341h1v1h-1zM350 359h1v1h-1zM350 409h1v1h-1zM351 172h1v1h-1zM351 178h1v6h-1zM351 243h1v1h-1zM352 184h1v5h-1zM353 189h1v6h-1zM353 243h1v1h-1zM354 170h1v1h-1zM354 195h1v6h-1zM354 247h1v1h-1zM354 337h1v1h-1zM354 356h1v1h-1zM355 201h1v5h-1zM355 249h1v1h-1zM356 206h1v6h-1zM356 247h1v1h-1zM357 168h1v1h-1zM357 170h1v2h-1zM357 173h1v1h-1zM357 212h1v5h-1zM357 249h1v1h-1zM357 413h1v1h-1zM358 174h1v1h-1zM358 176h1v2h-1zM358 179h1v1h-1zM358 182h1v1h-1zM358 185h1v1h-1zM358 188h1v1h-1zM358 191h1v1h-1zM358 217h1v6h-1zM358 253h1v1h-1zM358 333h1v1h-1zM358 353h1v1h-1zM359 180h1v1h-1zM359 183h1v1h-1zM359 194h1v1h-1zM359 197h1v1h-1zM359 200h1v1h-1zM359 203h1v1h-1zM359 206h1v1h-1zM359 223h1v5h-1zM359 255h1v1h-1zM360 186h1v1h-1zM360 189h1v1h-1zM360 209h1v1h-1zM360 212h1v1h-1zM360 215h1v1h-1zM360 218h1v1h-1zM360 221h1v1h-1zM360 228h1v2h-1zM360 231h1v2h-1zM360 253h1v1h-1zM361 192h1v1h-1zM361 195h1v1h-1zM361 198h1v1h-1zM361 224h1v1h-1zM361 227h1v1h-1zM361 234h1v5h-1zM361 255h1v1h-1zM361 257h1v1h-1zM361 329h1v1h-1zM361 415h1v1h-1zM362 201h1v1h-1zM362 204h1v1h-1zM362 240h1v5h-1zM362 251h1v1h-1zM362 254h1v1h-1zM362 259h1v1h-1zM362 349h1v1h-1zM363 207h1v1h-1zM363 210h1v1h-1zM363 246h1v2h-1zM363 249h1v1h-1zM363 257h1v1h-1zM363 260h1v2h-1zM363 263h1v1h-1zM363 266h1v1h-1zM363 269h1v1h-1zM364 213h1v1h-1zM364 216h1v1h-1zM364 219h1v1h-1zM364 250h1v6h-1zM364 272h1v1h-1zM364 275h1v1h-1zM364 278h1v1h-1zM364 281h1v1h-1zM364 284h1v1h-1zM364 287h1v1h-1zM365 222h1v1h-1zM365 225h1v1h-1zM365 256h1v3h-1zM365 260h1v2h-1zM365 290h1v1h-1zM365 293h1v1h-1zM365 296h1v1h-1zM365 299h1v1h-1zM365 302h1v1h-1zM365 325h1v1h-1zM366 228h1v1h-1zM366 231h1v1h-1zM366 262h1v1h-1zM366 264h1v3h-1zM366 305h1v1h-1zM366 308h1v1h-1zM366 311h1v1h-1zM366 314h1v1h-1zM366 317h1v1h-1zM366 346h1v1h-1zM366 418h1v1h-1zM367 234h1v1h-1zM367 237h1v1h-1zM367 267h1v6h-1zM367 320h1v1h-1zM367 326h1v1h-1zM367 329h1v1h-1zM367 332h1v1h-1zM368 240h1v1h-1zM368 243h1v1h-1zM368 246h1v1h-1zM368 265h1v1h-1zM368 273h1v5h-1zM368 335h1v1h-1zM368 338h1v1h-1zM368 341h1v1h-1zM368 344h1v1h-1zM368 347h1v1h-1zM368 350h1v1h-1zM369 249h1v1h-1zM369 252h1v1h-1zM369 269h1v1h-1zM369 278h1v6h-1zM369 321h1v1h-1zM369 353h1v1h-1zM369 356h1v1h-1zM369 359h1v1h-1zM369 362h1v1h-1zM369 365h1v1h-1zM370 255h1v1h-1zM370 258h1v1h-1zM370 271h1v1h-1zM370 284h1v5h-1zM370 343h1v1h-1zM370 368h1v1h-1zM370 371h1v1h-1zM370 374h1v1h-1zM370 377h1v1h-1zM370 380h1v1h-1zM371 261h1v1h-1zM371 264h1v1h-1zM371 269h1v1h-1zM371 289h1v6h-1zM371 383h1v1h-1zM371 386h1v1h-1zM371 389h1v1h-1zM371 392h1v1h-1zM371 395h1v1h-1zM371 398h1v1h-1zM372 270h1v2h-1zM372 273h1v1h-1zM372 295h1v5h-1zM372 401h1v1h-1zM372 404h1v1h-1zM372 407h1v1h-1zM372 410h1v1h-1zM372 413h1v1h-1zM373 275h1v2h-1zM373 279h1v1h-1zM373 300h1v6h-1zM373 317h1v1h-1zM373 416h1v1h-1zM373 419h1v1h-1zM373 422h1v1h-1zM374 273h1v1h-1zM374 277h1v1h-1zM374 282h1v1h-1zM374 285h1v1h-1zM374 306h1v5h-1zM374 339h1v1h-1zM375 275h1v1h-1zM375 288h1v1h-1zM375 291h1v1h-1zM375 294h1v1h-1zM375 311h1v6h-1zM376 279h1v1h-1zM376 297h1v1h-1zM376 300h1v1h-1zM376 317h1v6h-1zM376 427h1v1h-1zM377 277h1v1h-1zM377 281h1v1h-1zM377 303h1v1h-1zM377 306h1v1h-1zM377 313h1v1h-1zM377 323h1v5h-1zM378 279h1v1h-1zM378 283h1v1h-1zM378 309h1v1h-1zM378 312h1v1h-1zM378 315h1v1h-1zM378 328h1v6h-1zM379 281h1v1h-1zM379 318h1v1h-1zM379 321h1v1h-1zM379 334h1v2h-1zM379 337h1v2h-1zM380 285h1v1h-1zM380 309h1v1h-1zM380 324h1v1h-1zM380 327h1v1h-1zM380 339h1v6h-1zM381 283h1v1h-1zM381 287h1v1h-1zM381 330h1v1h-1zM381 345h1v5h-1zM382 285h1v1h-1zM382 289h1v1h-1zM382 336h1v1h-1zM382 339h1v1h-1zM382 342h1v1h-1zM382 350h1v6h-1zM383 345h1v1h-1zM383 348h1v1h-1zM383 356h1v5h-1zM384 287h1v1h-1zM384 291h1v1h-1zM384 305h1v1h-1zM384 351h1v1h-1zM384 354h1v1h-1zM384 361h1v2h-1zM384 364h1v3h-1zM385 289h1v1h-1zM385 293h1v1h-1zM385 357h1v1h-1zM385 360h1v1h-1zM385 367h1v2h-1zM385 370h1v2h-1zM386 291h1v1h-1zM386 295h1v1h-1zM386 329h1v1h-1zM386 366h1v1h-1zM386 373h1v2h-1zM386 376h1v2h-1zM387 379h1v2h-1zM387 382h1v2h-1zM387 447h1v5h-1zM388 293h1v1h-1zM388 297h1v1h-1zM388 301h1v1h-1zM388 385h1v2h-1zM388 388h1v1h-1zM388 446h1v1h-1zM388 452h1v1h-1zM389 295h1v1h-1zM389 299h1v1h-1zM389 389h1v4h-1zM389 394h1v1h-1zM390 297h1v1h-1zM390 326h1v1h-1zM390 395h1v4h-1zM391 301h1v1h-1zM391 400h1v5h-1zM391 454h1v3h-1zM391 458h1v4h-1zM392 297h1v1h-1zM392 299h1v1h-1zM392 303h1v1h-1zM392 406h1v3h-1zM393 301h1v1h-1zM393 305h1v1h-1zM394 322h1v1h-1zM394 446h1v1h-1zM394 452h1v1h-1zM395 303h1v1h-1zM395 307h1v1h-1zM395 447h1v5h-1zM396 293h1v1h-1zM396 305h1v1h-1zM396 309h1v1h-1zM397 307h1v1h-1zM397 311h1v1h-1zM398 319h1v1h-1zM399 309h1v1h-1zM399 313h1v1h-1zM400 289h1v1h-1zM400 311h1v1h-1zM400 315h1v1h-1zM401 317h1v1h-1zM402 313h1v1h-1zM402 316h1v1h-1zM403 315h1v1h-1zM403 319h1v1h-1zM404 317h1v1h-1zM404 321h1v1h-1zM406 312h1v1h-1zM406 319h1v1h-1zM406 323h1v1h-1zM407 281h1v1h-1zM407 321h1v1h-1zM407 325h1v1h-1zM408 327h1v1h-1zM409 323h1v1h-1zM410 309h1v1h-1zM410 325h1v1h-1zM410 329h1v1h-1zM411 277h1v1h-1zM411 327h1v1h-1zM411 331h1v1h-1zM412 333h1v1h-1zM413 329h1v1h-1zM414 306h1v1h-1zM414 331h1v1h-1zM414 335h1v1h-1zM415 273h1v1h-1zM415 337h1v1h-1zM416 333h1v1h-1zM416 339h1v1h-1zM417 335h1v1h-1zM418 302h1v1h-1zM418 337h1v1h-1zM418 341h1v1h-1zM419 269h1v1h-1zM419 343h1v1h-1zM420 339h1v1h-1zM420 345h1v1h-1zM421 341h1v1h-1zM422 299h1v1h-1zM422 347h1v1h-1zM423 265h1v1h-1zM423 343h1v1h-1zM423 349h1v1h-1zM424 345h1v1h-1zM425 351h1v1h-1zM426 261h1v1h-1zM426 295h1v1h-1zM426 353h1v1h-1zM427 349h1v1h-1zM427 355h1v1h-1zM428 351h1v1h-1zM430 257h1v1h-1zM430 292h1v1h-1zM434 253h1v1h-1zM434 289h1v1h-1zM437 357h1v1h-1zM438 285h1v1h-1zM440 250h1v1h-1zM462 357h1v1h-1zM462 361h1v5h-1zM463 232h1v1h-1zM463 242h1v1h-1zM463 358h1v1h-1zM463 360h1v1h-1zM463 366h1v1h-1zM464 233h1v1h-1zM464 241h1v1h-1zM465 234h1v4h-1zM465 239h1v2h-1zM466 368h1v3h-1zM466 372h1v2h-1zM467 245h1v3h-1zM469 236h1v2h-1zM469 239h1v5h-1zM469 358h1v1h-1zM469 360h1v1h-1zM469 366h1v1h-1zM470 357h1v1h-1zM470 361h1v5h-1zM471 245h1v3h-1zM473 234h1v4h-1zM473 239h1v2h-1zM474 233h1v1h-1zM474 241h1v1h-1zM475 232h1v1h-1zM475 242h1v1h-1zM534 189h1v3h-1zM535 188h1v1h-1zM535 192h1v1h-1zM541 188h1v1h-1zM541 192h1v1h-1zM542 189h1v3h-1zM744 166h1v1h-1zM745 126h1v1h-1zM745 130h1v3h-1zM745 167h1v7h-1zM745 206h1v1h-1zM745 208h1v3h-1zM745 306h1v1h-1zM745 311h1v1h-1zM746 127h1v1h-1zM746 129h1v1h-1zM746 133h1v1h-1zM746 166h1v1h-1zM746 211h1v3h-1zM746 256h1v1h-1zM746 258h1v3h-1zM746 267h1v3h-1zM746 307h1v2h-1zM746 310h1v1h-1zM747 167h1v7h-1zM747 208h1v3h-1zM747 313h1v1h-1zM748 166h1v1h-1zM748 206h1v1h-1zM748 262h1v1h-1zM748 264h1v1h-1zM748 271h1v1h-1zM748 273h1v2h-1zM748 308h1v1h-1zM748 310h1v2h-1zM748 314h1v1h-1zM749 167h1v1h-1zM749 169h1v4h-1zM749 174h1v1h-1zM749 208h1v1h-1zM749 313h1v1h-1zM750 127h1v1h-1zM750 129h1v1h-1zM750 133h1v1h-1zM750 173h1v1h-1zM750 256h1v1h-1zM750 258h1v3h-1zM750 267h1v3h-1zM750 307h1v2h-1zM750 310h1v1h-1zM751 126h1v1h-1zM751 130h1v3h-1zM751 167h1v1h-1zM751 169h1v4h-1zM751 174h1v1h-1zM751 210h1v1h-1zM751 214h1v1h-1zM751 306h1v1h-1zM751 311h1v1h-1zM752 207h1v2h-1zM752 211h1v3h-1z"/>
<path fill="#0000ff" d="M458 90h3v1h-3zM456 94h2v1h-2zM352 124h3v1h-3zM357 124h5v1h-5zM364 124h3v1h-3zM355 129h2v1h-2zM362 129h2v1h-2zM357 130h5v1h-5zM355 134h9v1h-9zM746 137h6v1h-6zM746 143h6v1h-6zM747 178h3v1h-3zM744 181h4v1h-4zM749 181h4v1h-4zM744 183h9v1h-9zM745 217h2v1h-2zM748 217h2v1h-2zM747 218h2v1h-2zM750 218h2v1h-2zM745 222h2v1h-2zM748 222h2v1h-2zM747 223h2v1h-2zM750 223h2v1h-2zM178 230h2v1h-2zM190 236h2v1h-2zM202 242h2v1h-2zM746 246h3v1h-3zM749 247h2v1h-2zM214 248h2v1h-2zM749 253h2v1h-2zM746 254h3v1h-3zM476 270h3v1h-3zM30 274h17v1h-17zM476 274h3v1h-3zM473 277h2v1h-2zM480 277h2v1h-2zM475 278h5v1h-5zM473 282h9v1h-9zM304 295h2v1h-2zM744 317h2v1h-2zM747 317h3v1h-3zM751 317h2v1h-2zM747 320h3v1h-3zM746 322h5v1h-5zM747 330h3v1h-3zM746 332h5v1h-5zM454 374h5v1h-5zM459 375h2v1h-2zM459 389h2v1h-2zM454 390h5v1h-5zM405 531h5v1h-5zM402 532h3v1h-3zM411 533h3v1h-3zM401 537h3v1h-3zM411 539h3v1h-3zM401 543h3v1h-3zM410 544h3v1h-3zM405 545h5v1h-5zM30 266h1v1h-1zM30 282h1v1h-1zM31 267h1v1h-1zM31 281h1v1h-1zM32 268h1v1h-1zM32 280h1v1h-1zM33 269h1v2h-1zM33 278h1v2h-1zM34 271h1v3h-1zM34 275h1v3h-1zM42 271h1v3h-1zM42 275h1v3h-1zM43 269h1v2h-1zM43 278h1v2h-1zM44 268h1v1h-1zM44 280h1v1h-1zM45 267h1v1h-1zM45 281h1v1h-1zM46 266h1v1h-1zM46 282h1v1h-1zM175 228h1v2h-1zM181 232h1v1h-1zM183 232h1v1h-1zM184 233h1v1h-1zM187 234h1v2h-1zM193 238h1v1h-1zM195 238h1v1h-1zM196 239h1v1h-1zM199 240h1v2h-1zM205 244h1v1h-1zM207 244h1v1h-1zM208 245h1v1h-1zM211 246h1v2h-1zM217 250h1v1h-1zM219 250h1v1h-1zM220 252h1v1h-1zM223 252h1v2h-1zM226 255h1v1h-1zM227 254h1v1h-1zM229 256h1v1h-1zM231 256h1v1h-1zM232 258h1v1h-1zM235 258h1v2h-1zM238 261h1v1h-1zM239 260h1v1h-1zM241 262h1v1h-1zM243 262h1v1h-1zM244 264h1v1h-1zM247 264h1v2h-1zM250 267h1v1h-1zM251 266h1v1h-1zM253 268h1v1h-1zM255 268h1v1h-1zM256 270h1v1h-1zM259 270h1v2h-1zM259 433h1v1h-1zM259 435h1v1h-1zM260 431h1v1h-1zM261 427h1v1h-1zM261 429h1v1h-1zM262 273h1v1h-1zM262 425h1v1h-1zM263 272h1v1h-1zM263 421h1v1h-1zM263 423h1v1h-1zM264 419h1v1h-1zM265 275h1v1h-1zM265 415h1v1h-1zM265 417h1v1h-1zM266 413h1v1h-1zM267 274h1v1h-1zM267 409h1v1h-1zM267 411h1v1h-1zM268 276h1v1h-1zM268 407h1v1h-1zM269 403h1v1h-1zM269 405h1v1h-1zM270 401h1v1h-1zM271 276h1v1h-1zM271 278h1v1h-1zM271 397h1v1h-1zM271 399h1v1h-1zM272 395h1v1h-1zM273 391h1v1h-1zM273 393h1v1h-1zM274 279h1v1h-1zM274 387h1v1h-1zM274 389h1v1h-1zM275 278h1v1h-1zM275 385h1v1h-1zM276 381h1v1h-1zM276 383h1v1h-1zM277 281h1v1h-1zM277 379h1v1h-1zM278 375h1v1h-1zM278 377h1v1h-1zM279 280h1v1h-1zM279 373h1v1h-1zM280 282h1v1h-1zM280 369h1v1h-1zM280 371h1v1h-1zM281 367h1v1h-1zM282 363h1v1h-1zM282 365h1v1h-1zM283 282h1v1h-1zM283 284h1v1h-1zM283 361h1v1h-1zM284 357h1v1h-1zM284 359h1v1h-1zM285 355h1v1h-1zM286 285h1v1h-1zM286 351h1v1h-1zM286 353h1v1h-1zM287 284h1v1h-1zM287 349h1v1h-1zM288 345h1v1h-1zM288 347h1v1h-1zM289 287h1v1h-1zM289 343h1v1h-1zM290 339h1v1h-1zM290 341h1v1h-1zM291 286h1v1h-1zM291 337h1v1h-1zM292 288h1v1h-1zM292 333h1v1h-1zM292 335h1v1h-1zM293 331h1v1h-1zM294 327h1v1h-1zM294 329h1v1h-1zM295 288h1v1h-1zM295 290h1v1h-1zM295 325h1v1h-1zM296 321h1v1h-1zM296 323h1v1h-1zM297 319h1v1h-1zM298 291h1v1h-1zM298 315h1v1h-1zM298 317h1v1h-1zM299 290h1v1h-1zM299 313h1v1h-1zM300 309h1v1h-1zM300 311h1v1h-1zM301 293h1v1h-1zM301 307h1v1h-1zM302 303h1v1h-1zM302 305h1v1h-1zM303 292h1v1h-1zM303 299h1v1h-1zM303 301h1v1h-1zM304 297h1v1h-1zM305 293h1v1h-1zM306 291h1v1h-1zM307 287h1v1h-1zM307 289h1v1h-1zM307 294h1v1h-1zM307 296h1v1h-1zM308 285h1v1h-1zM309 281h1v1h-1zM309 283h1v1h-1zM310 279h1v1h-1zM310 298h1v1h-1zM311 275h1v1h-1zM311 277h1v1h-1zM311 296h1v1h-1zM312 273h1v1h-1zM313 269h1v1h-1zM313 271h1v1h-1zM313 299h1v1h-1zM314 267h1v1h-1zM315 263h1v1h-1zM315 265h1v1h-1zM315 298h1v1h-1zM316 261h1v1h-1zM316 301h1v1h-1zM317 257h1v1h-1zM317 259h1v1h-1zM318 255h1v1h-1zM319 251h1v1h-1zM319 253h1v1h-1zM319 300h1v1h-1zM319 302h1v1h-1zM320 249h1v1h-1zM321 245h1v1h-1zM321 247h1v1h-1zM322 243h1v1h-1zM322 304h1v1h-1zM323 239h1v1h-1zM323 241h1v1h-1zM323 302h1v1h-1zM324 237h1v1h-1zM325 233h1v1h-1zM325 235h1v1h-1zM325 305h1v1h-1zM326 231h1v1h-1zM327 227h1v1h-1zM327 229h1v1h-1zM327 304h1v1h-1zM328 225h1v1h-1zM328 307h1v1h-1zM329 221h1v1h-1zM329 223h1v1h-1zM330 219h1v1h-1zM331 215h1v1h-1zM331 217h1v1h-1zM331 306h1v1h-1zM331 308h1v1h-1zM332 213h1v1h-1zM333 209h1v1h-1zM333 211h1v1h-1zM334 205h1v1h-1zM334 207h1v1h-1zM334 310h1v1h-1zM335 203h1v1h-1zM335 308h1v1h-1zM336 199h1v1h-1zM336 201h1v1h-1zM337 197h1v1h-1zM337 311h1v1h-1zM338 193h1v1h-1zM338 195h1v1h-1zM339 191h1v1h-1zM339 310h1v1h-1zM340 187h1v1h-1zM340 189h1v1h-1zM340 313h1v1h-1zM341 185h1v1h-1zM342 181h1v1h-1zM342 183h1v1h-1zM343 179h1v1h-1zM343 312h1v1h-1zM343 314h1v1h-1zM344 175h1v1h-1zM344 177h1v1h-1zM345 173h1v1h-1zM346 169h1v1h-1zM346 171h1v1h-1zM346 316h1v1h-1zM347 167h1v1h-1zM347 313h1v1h-1zM349 318h1v1h-1zM350 159h1v1h-1zM351 315h1v1h-1zM352 319h1v1h-1zM353 122h1v2h-1zM353 125h1v2h-1zM354 127h1v2h-1zM355 317h1v1h-1zM355 321h1v1h-1zM358 322h1v1h-1zM359 122h1v2h-1zM359 125h1v5h-1zM359 131h1v3h-1zM359 135h1v4h-1zM359 319h1v1h-1zM361 324h1v1h-1zM363 321h1v1h-1zM364 127h1v2h-1zM364 325h1v1h-1zM365 122h1v2h-1zM365 125h1v2h-1zM367 323h1v1h-1zM367 327h1v1h-1zM370 328h1v1h-1zM371 325h1v1h-1zM373 330h1v1h-1zM375 327h1v1h-1zM376 331h1v1h-1zM379 329h1v1h-1zM379 333h1v1h-1zM382 334h1v1h-1zM383 331h1v1h-1zM385 336h1v1h-1zM387 333h1v1h-1zM388 338h1v1h-1zM391 335h1v1h-1zM391 339h1v1h-1zM394 341h1v1h-1zM395 337h1v1h-1zM397 342h1v1h-1zM399 339h1v1h-1zM399 535h1v1h-1zM399 539h1v3h-1zM400 344h1v1h-1zM400 534h1v1h-1zM400 538h1v1h-1zM400 542h1v1h-1zM401 533h1v1h-1zM403 341h1v1h-1zM403 345h1v1h-1zM404 538h1v1h-1zM404 542h1v1h-1zM404 544h1v1h-1zM405 539h1v3h-1zM406 347h1v1h-1zM407 343h1v1h-1zM409 348h1v1h-1zM409 535h1v3h-1zM410 532h1v1h-1zM410 534h1v1h-1zM410 538h1v1h-1zM411 345h1v1h-1zM412 350h1v1h-1zM413 543h1v1h-1zM414 534h1v1h-1zM414 538h1v1h-1zM414 542h1v1h-1zM415 347h1v1h-1zM415 351h1v1h-1zM415 535h1v3h-1zM415 541h1v1h-1zM418 353h1v1h-1zM419 349h1v1h-1zM421 354h1v1h-1zM423 351h1v1h-1zM424 356h1v1h-1zM427 353h1v1h-1zM427 357h1v1h-1zM435 361h1v1h-1zM444 78h1v1h-1zM445 79h1v1h-1zM446 80h1v13h-1zM447 79h1v1h-1zM448 78h1v1h-1zM448 281h1v1h-1zM449 79h1v1h-1zM450 80h1v13h-1zM451 79h1v1h-1zM452 78h1v1h-1zM452 376h1v1h-1zM452 388h1v1h-1zM453 79h1v1h-1zM453 375h1v1h-1zM453 377h1v1h-1zM453 387h1v1h-1zM453 389h1v1h-1zM454 80h1v13h-1zM454 378h1v1h-1zM454 386h1v1h-1zM455 93h1v1h-1zM455 379h1v2h-1zM455 384h1v2h-1zM456 381h1v3h-1zM458 93h1v1h-1zM459 89h1v1h-1zM459 91h1v2h-1zM461 376h1v1h-1zM461 388h1v1h-1zM462 377h1v1h-1zM462 387h1v1h-1zM463 378h1v2h-1zM463 385h1v2h-1zM464 380h1v5h-1zM471 270h1v5h-1zM472 275h1v2h-1zM475 271h1v3h-1zM477 279h1v3h-1zM477 283h1v4h-1zM479 271h1v3h-1zM482 275h1v2h-1zM483 270h1v5h-1zM744 219h1v1h-1zM744 224h1v1h-1zM745 136h1v1h-1zM745 144h1v1h-1zM745 218h1v1h-1zM745 223h1v1h-1zM745 247h1v1h-1zM745 253h1v1h-1zM745 316h1v1h-1zM745 318h1v1h-1zM745 326h1v3h-1zM746 179h1v2h-1zM746 216h1v1h-1zM746 221h1v1h-1zM746 248h1v1h-1zM746 252h1v1h-1zM746 319h1v1h-1zM746 329h1v1h-1zM747 138h1v5h-1zM747 219h1v1h-1zM747 224h1v1h-1zM747 249h1v3h-1zM747 327h1v1h-1zM748 316h1v1h-1zM748 318h1v2h-1zM748 321h1v1h-1zM748 323h1v2h-1zM748 326h1v1h-1zM748 328h1v1h-1zM748 331h1v1h-1zM748 333h1v2h-1zM749 216h1v1h-1zM749 221h1v1h-1zM749 327h1v1h-1zM750 138h1v5h-1zM750 179h1v2h-1zM750 219h1v1h-1zM750 224h1v1h-1zM750 248h1v1h-1zM750 252h1v1h-1zM750 319h1v1h-1zM750 329h1v1h-1zM751 217h1v1h-1zM751 222h1v1h-1zM751 249h1v3h-1zM751 316h1v1h-1zM751 318h1v1h-1zM751 326h1v3h-1zM752 136h1v1h-1zM752 144h1v1h-1zM752 216h1v1h-1zM752 221h1v1h-1z"/>
<path fill="#00ffff" d="M417 250h2v1h-2zM420 254h2v1h-2zM423 258h2v1h-2zM426 262h2v1h-2zM428 264h2v1h-2zM429 266h2v1h-2zM431 268h2v1h-2zM432 270h2v1h-2zM434 272h2v1h-2zM437 276h2v1h-2zM440 280h2v1h-2zM438 290h2v1h-2zM435 296h2v1h-2zM258 437h1v1h-1zM260 437h1v1h-1zM262 436h1v1h-1zM264 436h1v1h-1zM266 435h1v1h-1zM268 435h1v1h-1zM270 434h1v1h-1zM272 434h1v1h-1zM274 434h1v1h-1zM276 433h1v1h-1zM278 433h1v1h-1zM280 432h1v1h-1zM282 432h1v1h-1zM284 431h1v1h-1zM286 431h1v1h-1zM288 431h1v1h-1zM290 430h1v1h-1zM292 430h1v1h-1zM294 429h1v1h-1zM296 429h1v1h-1zM298 428h1v1h-1zM300 428h1v1h-1zM302 427h1v1h-1zM304 427h1v1h-1zM306 427h1v1h-1zM308 426h1v1h-1zM310 426h1v1h-1zM312 425h1v1h-1zM314 425h1v1h-1zM316 424h1v1h-1zM318 424h1v1h-1zM320 424h1v1h-1zM322 423h1v1h-1zM324 423h1v1h-1zM326 422h1v1h-1zM328 422h1v1h-1zM330 421h1v1h-1zM332 421h1v1h-1zM334 421h1v1h-1zM336 420h1v1h-1zM338 420h1v1h-1zM340 419h1v1h-1zM342 419h1v1h-1zM344 418h1v1h-1zM346 418h1v1h-1zM348 418h1v1h-1zM350 166h1v1h-1zM350 417h1v1h-1zM351 168h1v1h-1zM352 417h1v1h-1zM353 170h1v1h-1zM354 172h1v1h-1zM354 416h1v1h-1zM356 174h1v1h-1zM356 416h1v1h-1zM358 169h1v1h-1zM358 415h1v1h-1zM359 171h1v1h-1zM359 178h1v1h-1zM360 172h1v1h-1zM360 415h1v1h-1zM361 173h1v2h-1zM361 180h1v1h-1zM362 175h1v1h-1zM362 414h1v1h-1zM363 176h1v1h-1zM364 177h1v2h-1zM364 184h1v1h-1zM364 414h1v1h-1zM365 179h1v1h-1zM366 180h1v1h-1zM366 186h1v1h-1zM366 414h1v1h-1zM367 181h1v2h-1zM367 188h1v1h-1zM368 183h1v1h-1zM368 413h1v1h-1zM369 184h1v1h-1zM369 190h1v1h-1zM370 185h1v2h-1zM370 192h1v1h-1zM370 413h1v1h-1zM371 187h1v1h-1zM372 188h1v1h-1zM372 194h1v1h-1zM372 412h1v1h-1zM373 189h1v2h-1zM373 196h1v1h-1zM374 191h1v1h-1zM374 412h1v1h-1zM374 419h1v1h-1zM375 192h1v1h-1zM375 198h1v1h-1zM376 193h1v2h-1zM376 411h1v1h-1zM376 416h1v1h-1zM377 195h1v1h-1zM377 200h1v1h-1zM377 413h1v1h-1zM378 196h1v1h-1zM378 202h1v1h-1zM378 411h1v1h-1zM379 197h1v2h-1zM379 410h1v1h-1zM380 199h1v1h-1zM380 204h1v1h-1zM380 407h1v1h-1zM380 411h1v1h-1zM381 200h1v1h-1zM381 206h1v1h-1zM382 201h1v2h-1zM382 404h1v1h-1zM382 410h1v1h-1zM383 203h1v1h-1zM383 208h1v1h-1zM383 401h1v1h-1zM384 204h1v1h-1zM384 410h1v1h-1zM385 205h1v2h-1zM385 210h1v1h-1zM385 398h1v1h-1zM386 207h1v1h-1zM386 212h1v1h-1zM386 395h1v1h-1zM386 409h1v1h-1zM387 208h1v1h-1zM388 209h1v2h-1zM388 214h1v1h-1zM388 392h1v1h-1zM388 409h1v1h-1zM389 211h1v1h-1zM389 216h1v1h-1zM390 212h1v1h-1zM390 408h1v1h-1zM391 213h1v2h-1zM391 218h1v1h-1zM391 386h1v1h-1zM392 215h1v1h-1zM392 383h1v1h-1zM393 216h1v1h-1zM393 220h1v1h-1zM393 406h1v1h-1zM394 217h1v2h-1zM394 222h1v1h-1zM394 380h1v1h-1zM394 402h1v1h-1zM394 404h1v1h-1zM395 219h1v1h-1zM395 377h1v1h-1zM395 400h1v1h-1zM396 220h1v1h-1zM396 224h1v1h-1zM396 398h1v1h-1zM397 221h1v2h-1zM397 226h1v1h-1zM397 374h1v1h-1zM397 396h1v1h-1zM398 223h1v1h-1zM398 371h1v1h-1zM398 392h1v1h-1zM398 394h1v1h-1zM399 224h1v1h-1zM399 228h1v1h-1zM399 390h1v1h-1zM400 225h1v2h-1zM400 368h1v1h-1zM400 388h1v1h-1zM401 227h1v1h-1zM401 230h1v1h-1zM401 365h1v1h-1zM401 386h1v1h-1zM402 228h1v2h-1zM402 232h1v1h-1zM402 382h1v1h-1zM402 384h1v1h-1zM403 230h1v1h-1zM403 362h1v1h-1zM403 380h1v1h-1zM404 231h1v1h-1zM404 234h1v1h-1zM404 359h1v1h-1zM404 378h1v1h-1zM405 232h1v2h-1zM405 236h1v1h-1zM405 374h1v1h-1zM405 376h1v1h-1zM406 234h1v1h-1zM406 356h1v1h-1zM406 372h1v1h-1zM407 235h1v1h-1zM407 238h1v1h-1zM407 353h1v1h-1zM407 370h1v1h-1zM408 236h1v2h-1zM408 350h1v1h-1zM408 368h1v1h-1zM409 238h1v1h-1zM409 240h1v1h-1zM409 364h1v1h-1zM409 366h1v1h-1zM410 239h1v1h-1zM410 242h1v1h-1zM410 347h1v1h-1zM410 362h1v1h-1zM411 240h1v2h-1zM411 344h1v1h-1zM411 360h1v1h-1zM412 242h1v1h-1zM412 244h1v1h-1zM412 358h1v1h-1zM413 243h1v1h-1zM413 246h1v1h-1zM413 341h1v1h-1zM413 354h1v1h-1zM413 356h1v1h-1zM414 244h1v2h-1zM414 338h1v1h-1zM414 352h1v1h-1zM415 246h1v1h-1zM415 248h1v1h-1zM415 350h1v1h-1zM416 247h1v1h-1zM416 335h1v1h-1zM416 348h1v1h-1zM417 248h1v2h-1zM417 332h1v1h-1zM417 344h1v1h-1zM417 346h1v1h-1zM418 252h1v1h-1zM418 342h1v1h-1zM419 251h1v1h-1zM419 340h1v1h-1zM420 252h1v2h-1zM420 338h1v1h-1zM421 256h1v1h-1zM421 334h1v1h-1zM422 255h1v1h-1zM422 323h1v1h-1zM423 256h1v2h-1zM423 320h1v1h-1zM423 330h1v1h-1zM424 260h1v1h-1zM424 328h1v1h-1zM425 259h1v1h-1zM425 317h1v1h-1zM425 324h1v1h-1zM425 326h1v1h-1zM426 260h1v1h-1zM426 314h1v1h-1zM426 322h1v1h-1zM427 320h1v1h-1zM428 263h1v1h-1zM428 311h1v1h-1zM428 318h1v1h-1zM429 265h1v1h-1zM429 308h1v1h-1zM429 314h1v1h-1zM429 316h1v1h-1zM430 312h1v1h-1zM431 267h1v1h-1zM431 305h1v1h-1zM431 310h1v1h-1zM432 269h1v1h-1zM432 302h1v1h-1zM432 306h1v1h-1zM432 308h1v1h-1zM433 304h1v1h-1zM434 271h1v1h-1zM434 299h1v1h-1zM434 302h1v1h-1zM435 273h1v1h-1zM435 300h1v1h-1zM436 274h1v1h-1zM436 298h1v1h-1zM437 275h1v1h-1zM437 293h1v2h-1zM438 277h1v1h-1zM438 292h1v1h-1zM439 278h1v1h-1zM440 279h1v1h-1zM440 286h1v3h-1zM441 281h1v1h-1zM441 284h1v1h-1zM442 282h1v1h-1z"/>
<path fill="#008080" d="M151 187h5v1h-5zM147 199h3v1h-3zM157 199h3v1h-3zM747 336h3v1h-3zM745 342h2v1h-2zM750 342h2v1h-2zM145 201h1v1h-1zM146 200h1v1h-1zM146 202h1v1h-1zM147 191h1v5h-1zM148 190h1v1h-1zM148 196h1v1h-1zM148 202h1v1h-1zM149 189h1v1h-1zM149 197h1v2h-1zM149 200h1v2h-1zM150 188h1v1h-1zM156 188h1v1h-1zM157 189h1v1h-1zM157 197h1v2h-1zM157 200h1v2h-1zM158 190h1v1h-1zM158 196h1v1h-1zM158 202h1v1h-1zM159 191h1v5h-1zM159 203h1v1h-1zM160 200h1v1h-1zM160 202h1v1h-1zM161 201h1v1h-1zM177 212h1v1h-1zM744 343h1v1h-1zM745 338h1v3h-1zM745 344h1v1h-1zM746 337h1v1h-1zM746 341h1v1h-1zM746 343h1v1h-1zM750 337h1v1h-1zM750 341h1v1h-1zM750 343h1v1h-1zM751 338h1v3h-1zM751 344h1v1h-1zM752 343h1v1h-1z"/>
</g>
<text class="h" transform="translate(102.5 372) scale(0.85 1)" fill="#ff0000">1</text>
<text class="h" transform="translate(174.5 471) scale(0.85 1)" fill="#ffff00">2</text>
<text class="h" transform="translate(266.5 511) scale(0.85 1)" fill="#00ff00">3</text>
<text class="h" transform="translate(355.5 506) scale(0.85 1)" fill="#0000ff">4</text>
<text class="h" transform="translate(438.5 462) scale(0.85 1)" fill="#ff0000">5</text>
<text class="h" transform="translate(500.5 367) scale(0.85 1)" fill="#ffff00">6</text>
<text class="h" transform="translate(498.5 236) scale(0.85 1)" fill="#00ff00">7</text>
<text class="h" transform="translate(426.5 137) scale(0.85 1)" fill="#0000ff">8</text>
<text class="h" transform="translate(334.5 97) scale(0.85 1)" fill="#ff0000">9</text>
<text class="h" transform="translate(245.5 102) scale(0.85 1)" fill="#ffff00">10</text>
<text class="h" transform="translate(162.5 146) scale(0.85 1)" fill="#00ff00">11</text>
<text class="h" transform="translate(100.5 241) scale(0.85 1)" fill="#0000ff">12</text>
<text class="g" x="281.4" y="129" font-size="23.7" textLength="18.6" lengthAdjust="spacingAndGlyphs" fill="#ffff00">MC</text>
<text class="g" x="111" y="308" font-size="23.7" textLength="16.6" lengthAdjust="spacingAndGlyphs" fill="#ff0000">Asc</text>
<text class="s" xml:space="preserve" x="605.5" y="14" fill="#ffffff" stroke="#ffffff">Astrolog 5.40</text>
<text class="s" xml:space="preserve" x="605.5" y="24" fill="#c0c0c0" stroke="#c0c0c0">&quot;Anonymous&quot;</text>
<text class="s" xml:space="preserve" x="605.5" y="34" fill="#c0c0c0" stroke="#c0c0c0">Sat July 24, 1971</text>
<text class="s" xml:space="preserve" x="605.5" y="44" fill="#c0c0c0" stroke="#c0c0c0"> 9:20pm (ST +8:00 GMT)</text>
<text class="s" xml:space="preserve" x="605.5" y="54" fill="#c0c0c0" stroke="#c0c0c0">&quot;Taipei&quot;</text>
<text class="s" xml:space="preserve" x="605.5" y="64" fill="#c0c0c0" stroke="#c0c0c0">121°31E 25°03N</text>
<text class="s" xml:space="preserve" x="605.5" y="74" fill="#c0c0c0" stroke="#c0c0c0">Placidus houses.</text>
<text class="s" xml:space="preserve" x="605.5" y="84" fill="#c0c0c0" stroke="#c0c0c0">Tropical, Geocentric.</text>
<text class="s" xml:space="preserve" x="605.5" y="94" fill="#c0c0c0" stroke="#c0c0c0">Julian Day = 2441157.0556</text>
<text class="s" xml:space="preserve" x="605.5" y="114" fill="#ff0000" stroke="#ff0000"> 1st house: </text>
<text class="s" xml:space="preserve" x="677.5" y="114" fill="#0000ff" stroke="#0000ff">20Pis38</text>
<text class="s" xml:space="preserve" x="605.5" y="124" fill="#ffff00" stroke="#ffff00"> 2nd house: </text>
<text class="s" xml:space="preserve" x="677.5" y="124" fill="#ff0000" stroke="#ff0000">28Ari37</text>
<text class="s" xml:space="preserve" x="605.5" y="134" fill="#00ff00" stroke="#00ff00"> 3rd house: </text>
<text class="s" xml:space="preserve" x="677.5" y="134" fill="#ffff00" stroke="#ffff00">28Tau36</text>
<text class="s" xml:space="preserve" x="605.5" y="144" fill="#0000ff" stroke="#0000ff"> 4th house: </text>
<text class="s" xml:space="preserve" x="677.5" y="144" fill="#00ff00" stroke="#00ff00">23Gem41</text>
<text class="s" xml:space="preserve" x="605.5" y="154" fill="#ff0000" stroke="#ff0000"> 5th house: </text>
<text class="s" xml:space="preserve" x="677.5" y="154" fill="#0000ff" stroke="#0000ff">17Can57</text>
<text class="s" xml:space="preserve" x="605.5" y="164" fill="#ffff00" stroke="#ffff00"> 6th house: </text>
<text class="s" xml:space="preserve" x="677.5" y="164" fill="#ff0000" stroke="#ff0000">15Leo28</text>
<text class="s" xml:space="preserve" x="605.5" y="174" fill="#00ff00" stroke="#00ff00"> 7th house: </text>
<text class="s" xml:space="preserve" x="677.5" y="174" fill="#ffff00" stroke="#ffff00">20Vir38</text>
<text class="s" xml:space="preserve" x="605.5" y="184" fill="#0000ff" stroke="#0000ff"> 8th house: </text>
<text class="s" xml:space="preserve" x="677.5" y="184" fill="#00ff00" stroke="#00ff00">28Lib37</text>
<text class="s" xml:space="preserve" x="605.5" y="194" fill="#ff0000" stroke="#ff0000"> 9th house: </text>
<text class="s" xml:space="preserve" x="677.5" y="194" fill="#0000ff" stroke="#0000ff">28Sco36</text>
<text class="s" xml:space="preserve" x="605.5" y="204" fill="#ffff00" stroke="#ffff00">10th house: </text>
<text class="s" xml:space="preserve" x="677.5" y="204" fill="#ff0000" stroke="#ff0000">23Sag41</text>
<text class="s" xml:space="preserve" x="605.5" y="214" fill="#00ff00" stroke="#00ff00">11th house: </text>
<text class="s" xml:space="preserve" x="677.5" y="214" fill="#ffff00" stroke="#ffff00">17Cap57</text>
<text class="s" xml:space="preserve" x="605.5" y="224" fill="#0000ff" stroke="#0000ff">12th house: </text>
<text class="s" xml:space="preserve" x="677.5" y="224" fill="#00ff00" stroke="#00ff00">15Aqu28</text>
<text class="s" xml:space="preserve" x="605.5" y="244" fill="#ff0000" stroke="#ff0000"> Sun: </text>
<text class="s" xml:space="preserve" x="641.5" y="244" fill="#ff0000" stroke="#ff0000"> 1Leo00</text>
<text class="s" xml:space="preserve" x="695.5" y="244" fill="#c0c0c0" stroke="#c0c0c0">- 0°00'</text>
<text class="s" xml:space="preserve" x="605.5" y="254" fill="#0000ff" stroke="#0000ff">Moon: </text>
<text class="s" xml:space="preserve" x="641.5" y="254" fill="#ff0000" stroke="#ff0000">26Leo01</text>
<text class="s" xml:space="preserve" x="695.5" y="254" fill="#c0c0c0" stroke="#c0c0c0">- 1°03'</text>
<text class="s" xml:space="preserve" x="605.5" y="264" fill="#00ff00" stroke="#00ff00">Merc: </text>
<text class="s" xml:space="preserve" x="641.5" y="264" fill="#ff0000" stroke="#ff0000">27Leo32</text>
<text class="s" xml:space="preserve" x="695.5" y="264" fill="#c0c0c0" stroke="#c0c0c0">- 0°15'</text>
<text class="s" xml:space="preserve" x="605.5" y="274" fill="#00ff00" stroke="#00ff00">Venu: </text>
<text class="s" xml:space="preserve" x="641.5" y="274" fill="#0000ff" stroke="#0000ff">21Can36</text>
<text class="s" xml:space="preserve" x="695.5" y="274" fill="#c0c0c0" stroke="#c0c0c0">+ 0°32'</text>
<text class="s" xml:space="preserve" x="605.5" y="284" fill="#ff0000" stroke="#ff0000">Mars: </text>
<text class="s" xml:space="preserve" x="641.5" y="284" fill="#00ff00" stroke="#00ff00">20Aqu50</text>
<text class="s" xml:space="preserve" x="683.5" y="284" fill="#ffffff" stroke="#ffffff">R</text>
<text class="s" xml:space="preserve" x="695.5" y="284" fill="#c0c0c0" stroke="#c0c0c0">- 6°19'</text>
<text class="s" xml:space="preserve" x="605.5" y="294" fill="#ff0000" stroke="#ff0000">Jupi: </text>
<text class="s" xml:space="preserve" x="641.5" y="294" fill="#0000ff" stroke="#0000ff">26Sco36</text>
<text class="s" xml:space="preserve" x="683.5" y="294" fill="#ffffff" stroke="#ffffff">R</text>
<text class="s" xml:space="preserve" x="695.5" y="294" fill="#c0c0c0" stroke="#c0c0c0">+ 0°48'</text>
<text class="s" xml:space="preserve" x="605.5" y="304" fill="#ffff00" stroke="#ffff00">Satu: </text>
<text class="s" xml:space="preserve" x="641.5" y="304" fill="#00ff00" stroke="#00ff00"> 3Gem50</text>
<text class="s" xml:space="preserve" x="695.5" y="304" fill="#c0c0c0" stroke="#c0c0c0">- 1°56'</text>
<text class="s" xml:space="preserve" x="605.5" y="314" fill="#00ff00" stroke="#00ff00">Uran: </text>
<text class="s" xml:space="preserve" x="641.5" y="314" fill="#00ff00" stroke="#00ff00">10Lib01</text>
<text class="s" xml:space="preserve" x="695.5" y="314" fill="#c0c0c0" stroke="#c0c0c0">+ 0°40'</text>
<text class="s" xml:space="preserve" x="605.5" y="324" fill="#0000ff" stroke="#0000ff">Nept: </text>
<text class="s" xml:space="preserve" x="641.5" y="324" fill="#ff0000" stroke="#ff0000"> 0Sag24</text>
<text class="s" xml:space="preserve" x="683.5" y="324" fill="#ffffff" stroke="#ffffff">R</text>
<text class="s" xml:space="preserve" x="695.5" y="324" fill="#c0c0c0" stroke="#c0c0c0">+ 1°41'</text>
<text class="s" xml:space="preserve" x="605.5" y="334" fill="#0000ff" stroke="#0000ff">Plut: </text>
<text class="s" xml:space="preserve" x="641.5" y="334" fill="#ffff00" stroke="#ffff00">27Vir33</text>
<text class="s" xml:space="preserve" x="695.5" y="334" fill="#c0c0c0" stroke="#c0c0c0">+15°49'</text>
<text class="s" xml:space="preserve" x="605.5" y="344" fill="#008080" stroke="#008080">Node: </text>
<text class="s" xml:space="preserve" x="641.5" y="344" fill="#00ff00" stroke="#00ff00">15Aqu07</text>
<text class="s" xml:space="preserve" x="683.5" y="344" fill="#ffffff" stroke="#ffffff">R</text>
<text class="s" xml:space="preserve" x="695.5" y="344" fill="#c0c0c0" stroke="#c0c0c0">+ 0°00'</text>
<text class="s" xml:space="preserve" x="605.5" y="364" fill="#c0c0c0" stroke="#c0c0c0">Fire: 5, Earth: 1,</text>
<text class="s" xml:space="preserve" x="605.5" y="374" fill="#c0c0c0" stroke="#c0c0c0">Air : 4, Water: 3</text>
<text class="s" xml:space="preserve" x="605.5" y="384" fill="#c0c0c0" stroke="#c0c0c0">Car: 2, Fix: 6, Mut: 5</text>
<text class="s" xml:space="preserve" x="605.5" y="394" fill="#c0c0c0" stroke="#c0c0c0">Yang: 9, Yin: 4</text>
<text class="s" xml:space="preserve" x="605.5" y="404" fill="#c0c0c0" stroke="#c0c0c0">M: 6, N: 5, A: 3, D: 8</text>
<text class="s" xml:space="preserve" x="605.5" y="414" fill="#c0c0c0" stroke="#c0c0c0">Ang: 2, Suc: 4, Cad: 5</text>
<text class="s" xml:space="preserve" x="605.5" y="424" fill="#c0c0c0" stroke="#c0c0c0">Learn: 6, Share: 7</text>
</svg>
</body></html>
